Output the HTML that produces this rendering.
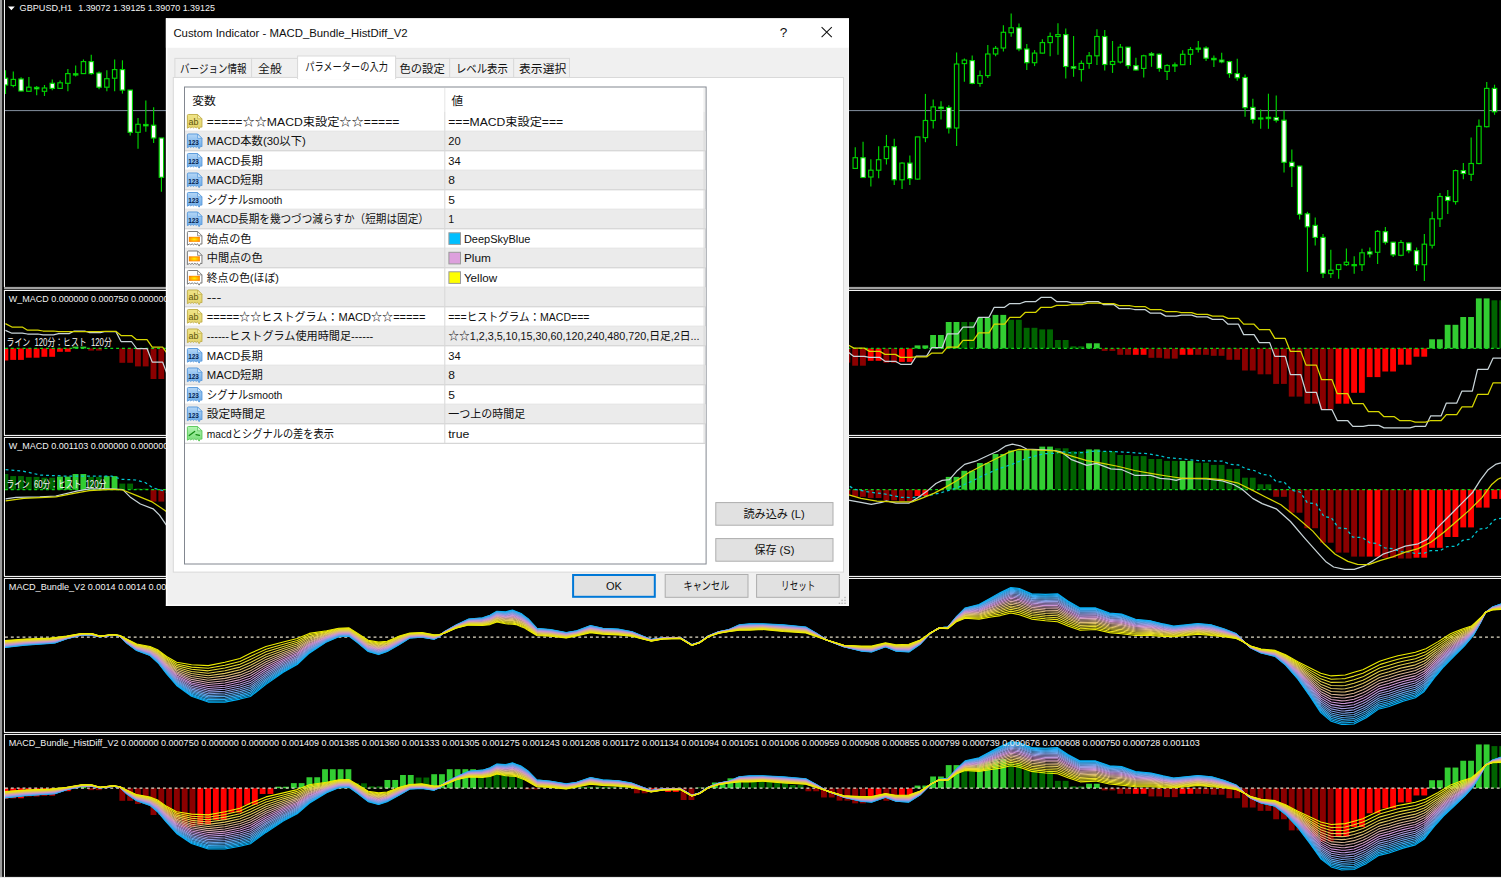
<!DOCTYPE html>
<html lang="ja"><head><meta charset="utf-8"><title>MACD_Bundle_HistDiff_V2</title>
<style>
html,body{margin:0;padding:0;background:#000;overflow:hidden}
body{width:1501px;height:878px}
svg{display:block;position:absolute;left:0;top:0}
svg text{font-family:"Liberation Sans","Noto Sans CJK JP",sans-serif}
</style></head><body>
<svg width="1501" height="878" viewBox="0 0 1501 878">
<defs>
<clipPath id="c1"><rect x="5" y="0" width="1496" height="286.9"/></clipPath>
<clipPath id="c2"><rect x="5" y="291" width="1496" height="143.9"/></clipPath>
<clipPath id="c3"><rect x="5" y="438" width="1496" height="137.9"/></clipPath>
<clipPath id="c4"><rect x="5" y="579" width="1496" height="152.9"/></clipPath>
<clipPath id="c5"><rect x="5" y="735" width="1496" height="141.9"/></clipPath>
<linearGradient id="gab" x1="0" y1="0" x2="0" y2="1"><stop offset="0" stop-color="#efe488"/><stop offset="1" stop-color="#e4d36a"/></linearGradient>
<linearGradient id="gn" x1="0" y1="0" x2="0" y2="1"><stop offset="0" stop-color="#b4d6f6"/><stop offset="1" stop-color="#69a9e8"/></linearGradient>
<linearGradient id="gb" x1="0" y1="0" x2="0" y2="1"><stop offset="0" stop-color="#b4f5b4"/><stop offset="1" stop-color="#74dc74"/></linearGradient>
<radialGradient id="gc" cx="0.5" cy="0.5" r="0.6"><stop offset="0" stop-color="#fff200"/><stop offset="0.55" stop-color="#ffb000"/><stop offset="1" stop-color="#ff7a00"/></radialGradient>
</defs>
<g id="chart">
<rect x="0" y="0" width="1501" height="878" fill="#000"/>
<rect x="0" y="0" width="2.2" height="878" fill="#9c9c9c"/>
<rect x="3.9" y="0" width="1.1" height="287" fill="#f2f2f2"/>
<rect x="3.9" y="290" width="1.1" height="145.5" fill="#f2f2f2"/>
<rect x="3.9" y="437" width="1.1" height="139.5" fill="#f2f2f2"/>
<rect x="3.9" y="578" width="1.1" height="154.5" fill="#f2f2f2"/>
<rect x="3.9" y="734" width="1.1" height="144" fill="#f2f2f2"/>
<rect x="4" y="286.9" width="1497" height="2.3" fill="#a0a0a0"/>
<rect x="4" y="289.9" width="1497" height="1.1" fill="#f2f2f2"/>
<rect x="4" y="434.9" width="1497" height="1.1" fill="#f2f2f2"/>
<rect x="4" y="436.9" width="1497" height="1.1" fill="#f2f2f2"/>
<rect x="4" y="575.9" width="1497" height="1.1" fill="#f2f2f2"/>
<rect x="4" y="577.9" width="1497" height="1.1" fill="#f2f2f2"/>
<rect x="4" y="731.9" width="1497" height="1.1" fill="#f2f2f2"/>
<rect x="4" y="733.9" width="1497" height="1.1" fill="#f2f2f2"/>
<rect x="0" y="876.9" width="1501" height="1.1" fill="#e8e8e8"/>
<rect x="5" y="110" width="1496" height="1.1" fill="#778290"/>
<g stroke="#00d400" stroke-width="1.15" fill="none" clip-path="url(#c1)">
<path d="M5.5,70.2 V94"/>
<rect x="3.3" y="78.2" width="4.4" height="6.8" fill="#fff"/>
<path d="M13.3,71.4 V87.2"/>
<rect x="11.1" y="79.4" width="4.4" height="6.1" fill="#000"/>
<path d="M21.09,77.3 V91.3"/>
<rect x="18.89" y="79" width="4.4" height="12" fill="#fff"/>
<path d="M28.89,77 V91.3"/>
<rect x="26.69" y="87.2" width="4.4" height="4.1" fill="#000"/>
<path d="M36.68,85.9 V95.3"/>
<rect x="34.48" y="87.4" width="4.4" height="1.4" fill="#fff"/>
<path d="M44.48,85 V96"/>
<rect x="42.28" y="88" width="4.4" height="3.3" fill="#000"/>
<path d="M52.28,79.4 V90.2"/>
<rect x="50.08" y="83.3" width="4.4" height="5.1" fill="#fff"/>
<path d="M60.07,80.4 V89"/>
<rect x="57.87" y="82.8" width="4.4" height="5.6" fill="#000"/>
<path d="M67.87,69.1 V91.3"/>
<rect x="65.67" y="73.6" width="4.4" height="9.7" fill="#000"/>
<path d="M75.66,65.4 V76.5"/>
<rect x="73.46" y="73.8" width="4.4" height="1.2" fill="#fff"/>
<path d="M83.46,59.4 V74"/>
<rect x="81.26" y="61.6" width="4.4" height="12" fill="#000"/>
<path d="M91.26,54.8 V74.8"/>
<rect x="89.06" y="61.6" width="4.4" height="12" fill="#fff"/>
<path d="M99.05,71.4 V89.3"/>
<rect x="96.85" y="73" width="4.4" height="14.2" fill="#fff"/>
<path d="M106.85,70.2 V91.3"/>
<rect x="104.65" y="78.7" width="4.4" height="8.5" fill="#000"/>
<path d="M114.64,59.4 V91.3"/>
<rect x="112.44" y="69.6" width="4.4" height="8.6" fill="#000"/>
<path d="M122.44,60.3 V93.6"/>
<rect x="120.24" y="69.6" width="4.4" height="20.5" fill="#fff"/>
<path d="M130.24,90.1 V135.4"/>
<rect x="128.04" y="90.1" width="4.4" height="42.2" fill="#fff"/>
<path d="M138.03,118 V148.8"/>
<rect x="135.83" y="124.3" width="4.4" height="8" fill="#000"/>
<path d="M145.83,100.4 V131.7"/>
<rect x="143.63" y="124.5" width="4.4" height="1.3" fill="#fff"/>
<path d="M153.62,107.2 V143.1"/>
<rect x="151.42" y="125.2" width="4.4" height="12.8" fill="#fff"/>
<path d="M161.42,138 V191.8"/>
<rect x="159.22" y="138" width="4.4" height="39.3" fill="#fff"/>
<path d="M855.26,147.2 V168.4"/>
<rect x="853.06" y="157.7" width="4.4" height="10.7" fill="#000"/>
<path d="M863.06,141.7 V177.5"/>
<rect x="860.86" y="157.7" width="4.4" height="19.8" fill="#fff"/>
<path d="M870.86,159.3 V186.6"/>
<rect x="868.66" y="170.2" width="4.4" height="6.8" fill="#000"/>
<path d="M878.65,146.3 V178.2"/>
<rect x="876.45" y="159.7" width="4.4" height="10.5" fill="#000"/>
<path d="M886.45,134.9 V164.5"/>
<rect x="884.25" y="146.7" width="4.4" height="11.9" fill="#000"/>
<path d="M894.24,138.8 V185"/>
<rect x="892.04" y="146.7" width="4.4" height="33.1" fill="#fff"/>
<path d="M902.04,162.2 V188.9"/>
<rect x="899.84" y="163.1" width="4.4" height="16.7" fill="#000"/>
<path d="M909.84,155.4 V185"/>
<rect x="907.64" y="163.1" width="4.4" height="15.5" fill="#fff"/>
<path d="M917.63,136.9 V179.8"/>
<rect x="915.43" y="136.9" width="4.4" height="42.2" fill="#000"/>
<path d="M925.43,93.9 V142.2"/>
<rect x="923.23" y="120.5" width="4.4" height="17.1" fill="#000"/>
<path d="M933.22,99.6 V128.5"/>
<rect x="931.02" y="106.9" width="4.4" height="13.6" fill="#000"/>
<path d="M941.02,101.2 V119.4"/>
<rect x="938.82" y="107.1" width="4.4" height="1.4" fill="#fff"/>
<path d="M948.82,105.3 V133.5"/>
<rect x="946.62" y="107.5" width="4.4" height="20.5" fill="#fff"/>
<path d="M956.61,52.6 V146"/>
<rect x="954.41" y="64" width="4.4" height="64" fill="#000"/>
<path d="M964.41,58.5 V81.8"/>
<rect x="962.21" y="60.1" width="4.4" height="3.5" fill="#000"/>
<path d="M972.2,55.6 V84.3"/>
<rect x="970" y="60.6" width="4.4" height="22.8" fill="#fff"/>
<path d="M980,70.4 V86.8"/>
<rect x="977.8" y="75.6" width="4.4" height="7.8" fill="#000"/>
<path d="M987.8,44.9 V77.9"/>
<rect x="985.6" y="54" width="4.4" height="21.6" fill="#000"/>
<path d="M995.59,46 V56.3"/>
<rect x="993.39" y="48.3" width="4.4" height="5.7" fill="#000"/>
<path d="M1003.39,25.3 V51.5"/>
<rect x="1001.19" y="32.3" width="4.4" height="15.7" fill="#000"/>
<path d="M1011.18,13.5 V36.7"/>
<rect x="1008.98" y="27.8" width="4.4" height="4.9" fill="#000"/>
<path d="M1018.98,23.5 V51.3"/>
<rect x="1016.78" y="27.8" width="4.4" height="21.2" fill="#fff"/>
<path d="M1026.78,44 V70"/>
<rect x="1024.58" y="49" width="4.4" height="13.7" fill="#fff"/>
<path d="M1034.57,50.1 V66.1"/>
<rect x="1032.37" y="53.1" width="4.4" height="9.6" fill="#000"/>
<path d="M1042.37,39.2 V53.6"/>
<rect x="1040.17" y="42.6" width="4.4" height="10.5" fill="#000"/>
<path d="M1050.16,32.4 V56.3"/>
<rect x="1047.96" y="36.5" width="4.4" height="6.1" fill="#000"/>
<path d="M1057.96,23.2 V54.7"/>
<rect x="1055.76" y="34.6" width="4.4" height="1.9" fill="#000"/>
<path d="M1065.76,28.5 V78.6"/>
<rect x="1063.56" y="34.6" width="4.4" height="31.9" fill="#fff"/>
<path d="M1073.55,36 V76.8"/>
<rect x="1071.35" y="66.7" width="4.4" height="1.5" fill="#fff"/>
<path d="M1081.35,60.4 V81.6"/>
<rect x="1079.15" y="63.4" width="4.4" height="6.1" fill="#000"/>
<path d="M1089.14,52 V68.8"/>
<rect x="1086.94" y="55.8" width="4.4" height="7.6" fill="#000"/>
<path d="M1096.94,29.2 V65"/>
<rect x="1094.74" y="36.5" width="4.4" height="19.3" fill="#000"/>
<path d="M1104.74,30.1 V70.6"/>
<rect x="1102.54" y="36.5" width="4.4" height="28" fill="#fff"/>
<path d="M1112.53,41 V72.9"/>
<rect x="1110.33" y="61.5" width="4.4" height="3" fill="#000"/>
<path d="M1120.33,44 V63.4"/>
<rect x="1118.13" y="47.2" width="4.4" height="14.8" fill="#000"/>
<path d="M1128.12,47.2 V68.8"/>
<rect x="1125.92" y="47.2" width="4.4" height="18.4" fill="#fff"/>
<path d="M1135.92,57.7 V70.6"/>
<rect x="1133.72" y="65.6" width="4.4" height="4.4" fill="#fff"/>
<path d="M1143.72,54.7 V77.5"/>
<rect x="1141.52" y="55.8" width="4.4" height="12.6" fill="#000"/>
<path d="M1151.51,52 V66.8"/>
<rect x="1149.31" y="53.8" width="4.4" height="1.4" fill="#fff"/>
<path d="M1159.31,53.6 V71.8"/>
<rect x="1157.11" y="54.2" width="4.4" height="14.2" fill="#fff"/>
<path d="M1167.1,64.3 V79.9"/>
<rect x="1164.9" y="65.5" width="4.4" height="5.9" fill="#000"/>
<path d="M1174.9,62.5 V71.9"/>
<rect x="1172.7" y="64.9" width="4.4" height="1.1" fill="#fff"/>
<path d="M1182.7,50.2 V65"/>
<rect x="1180.5" y="54.3" width="4.4" height="10.4" fill="#000"/>
<path d="M1190.49,47.1 V65"/>
<rect x="1188.29" y="49.6" width="4.4" height="4.7" fill="#000"/>
<path d="M1198.29,41.1 V52.6"/>
<rect x="1196.09" y="48.1" width="4.4" height="1.1" fill="#fff"/>
<path d="M1206.08,46.2 V61.1"/>
<rect x="1203.88" y="48" width="4.4" height="10.2" fill="#fff"/>
<path d="M1213.88,55.6 V67.1"/>
<rect x="1211.68" y="58.4" width="4.4" height="1.3" fill="#fff"/>
<path d="M1221.68,52.7 V63.3"/>
<rect x="1219.48" y="60.1" width="4.4" height="1.8" fill="#fff"/>
<path d="M1229.47,60.8 V77.8"/>
<rect x="1227.27" y="61.6" width="4.4" height="12" fill="#fff"/>
<path d="M1237.27,58.7 V80.7"/>
<rect x="1235.07" y="73.6" width="4.4" height="4.2" fill="#fff"/>
<path d="M1245.06,74.4 V116.8"/>
<rect x="1242.86" y="77.5" width="4.4" height="30.2" fill="#fff"/>
<path d="M1252.86,98.7 V123.6"/>
<rect x="1250.66" y="107.4" width="4.4" height="12" fill="#fff"/>
<path d="M1260.66,109.4 V128.8"/>
<rect x="1258.46" y="118" width="4.4" height="1" fill="#fff"/>
<path d="M1268.45,93.7 V128.8"/>
<rect x="1266.25" y="117.3" width="4.4" height="1.3" fill="#fff"/>
<path d="M1276.25,95.4 V122.6"/>
<rect x="1274.05" y="117.5" width="4.4" height="2.7" fill="#fff"/>
<path d="M1284.04,110.8 V172.4"/>
<rect x="1281.84" y="120.2" width="4.4" height="42.1" fill="#fff"/>
<path d="M1291.84,149.4 V187"/>
<rect x="1289.64" y="162.3" width="4.4" height="4.3" fill="#fff"/>
<path d="M1299.64,166.1 V219.4"/>
<rect x="1297.44" y="166.1" width="4.4" height="48.2" fill="#fff"/>
<path d="M1307.43,211.8 V271.9"/>
<rect x="1305.23" y="213.8" width="4.4" height="13" fill="#fff"/>
<path d="M1315.23,217.4 V245.6"/>
<rect x="1313.03" y="225.4" width="4.4" height="12" fill="#fff"/>
<path d="M1323.02,234 V277.9"/>
<rect x="1320.82" y="237.4" width="4.4" height="35.9" fill="#fff"/>
<path d="M1330.82,249.7 V277.9"/>
<rect x="1328.62" y="270.2" width="4.4" height="3.4" fill="#000"/>
<path d="M1338.62,264.4 V278.7"/>
<rect x="1336.42" y="264.7" width="4.4" height="4.8" fill="#000"/>
<path d="M1346.41,248.5 V266.1"/>
<rect x="1344.21" y="262.2" width="4.4" height="2.5" fill="#000"/>
<path d="M1354.21,256.2 V273.8"/>
<rect x="1352.01" y="264.6" width="4.4" height="1.1" fill="#fff"/>
<path d="M1362,248.8 V271"/>
<rect x="1359.8" y="252.8" width="4.4" height="11.9" fill="#000"/>
<path d="M1369.8,247.6 V257.4"/>
<rect x="1367.6" y="251.9" width="4.4" height="2.1" fill="#fff"/>
<path d="M1377.6,230 V263.9"/>
<rect x="1375.4" y="231.4" width="4.4" height="20.9" fill="#000"/>
<path d="M1385.39,227.1 V244.6"/>
<rect x="1383.19" y="231.7" width="4.4" height="10.5" fill="#fff"/>
<path d="M1393.19,242.2 V257"/>
<rect x="1390.99" y="242.2" width="4.4" height="12.6" fill="#fff"/>
<path d="M1400.98,240 V256.2"/>
<rect x="1398.78" y="242.5" width="4.4" height="12.8" fill="#000"/>
<path d="M1408.78,242.5 V253.3"/>
<rect x="1406.58" y="243" width="4.4" height="7.7" fill="#fff"/>
<path d="M1416.58,247.6 V271"/>
<rect x="1414.38" y="250.7" width="4.4" height="14" fill="#fff"/>
<path d="M1424.37,234 V281"/>
<rect x="1422.17" y="244.2" width="4.4" height="20.5" fill="#000"/>
<path d="M1432.17,211.8 V248.6"/>
<rect x="1429.97" y="218.8" width="4.4" height="26.4" fill="#000"/>
<path d="M1439.96,192.9 V226.9"/>
<rect x="1437.76" y="196.5" width="4.4" height="22.3" fill="#000"/>
<path d="M1447.76,190.1 V213.9"/>
<rect x="1445.56" y="196.6" width="4.4" height="3.9" fill="#fff"/>
<path d="M1455.56,169.6 V204.6"/>
<rect x="1453.36" y="170.6" width="4.4" height="31" fill="#000"/>
<path d="M1463.35,163.1 V179.3"/>
<rect x="1461.15" y="170.6" width="4.4" height="2.9" fill="#fff"/>
<path d="M1471.15,137.5 V181"/>
<rect x="1468.95" y="163.5" width="4.4" height="10.8" fill="#000"/>
<path d="M1478.94,119.4 V164.2"/>
<rect x="1476.74" y="126.3" width="4.4" height="37.2" fill="#000"/>
<path d="M1486.74,81.9 V127.4"/>
<rect x="1484.54" y="88.4" width="4.4" height="38.3" fill="#000"/>
<path d="M1494.54,84.7 V114.8"/>
<rect x="1492.34" y="88.4" width="4.4" height="23.4" fill="#fff"/>
</g>
<g clip-path="url(#c2)">
<rect x="5" y="348.4" width="3.3" height="12.1" fill="#ff0000"/>
<rect x="10.25" y="348.4" width="5.85" height="11.5" fill="#ff0000"/>
<rect x="18.04" y="348.4" width="5.85" height="11.5" fill="#ff0000"/>
<rect x="25.84" y="348.4" width="5.85" height="9.3" fill="#ff0000"/>
<rect x="33.63" y="348.4" width="5.85" height="9.3" fill="#ff0000"/>
<rect x="41.43" y="348.4" width="5.85" height="8.4" fill="#ff0000"/>
<rect x="49.23" y="348.4" width="5.85" height="8.4" fill="#ff0000"/>
<rect x="57.02" y="348.4" width="5.85" height="3.4" fill="#ff0000"/>
<rect x="64.82" y="348.4" width="5.85" height="3.4" fill="#ff0000"/>
<rect x="72.61" y="346.6" width="5.85" height="1.8" fill="#32cd32"/>
<rect x="80.41" y="346.6" width="5.85" height="1.8" fill="#32cd32"/>
<rect x="88.21" y="348.4" width="5.85" height="2.2" fill="#8b0000"/>
<rect x="96" y="348.4" width="5.85" height="2.2" fill="#8b0000"/>
<rect x="119.39" y="348.4" width="5.85" height="14.4" fill="#8b0000"/>
<rect x="127.19" y="348.4" width="5.85" height="14.4" fill="#8b0000"/>
<rect x="134.98" y="348.4" width="5.85" height="18" fill="#8b0000"/>
<rect x="142.78" y="348.4" width="5.85" height="18" fill="#8b0000"/>
<rect x="150.57" y="348.4" width="5.85" height="30.6" fill="#8b0000"/>
<rect x="158.37" y="348.4" width="5.85" height="30.6" fill="#8b0000"/>
<rect x="166.17" y="348.4" width="5.85" height="37.5" fill="#8b0000"/>
<rect x="173.96" y="348.4" width="5.85" height="37.5" fill="#8b0000"/>
<rect x="836.62" y="348.4" width="5.85" height="14.2" fill="#8b0000"/>
<rect x="844.42" y="348.4" width="5.85" height="14.2" fill="#8b0000"/>
<rect x="852.21" y="348.4" width="5.85" height="17.3" fill="#8b0000"/>
<rect x="860.01" y="348.4" width="5.85" height="17.3" fill="#8b0000"/>
<rect x="867.81" y="348.4" width="5.85" height="12.4" fill="#ff0000"/>
<rect x="875.6" y="348.4" width="5.85" height="12.4" fill="#ff0000"/>
<rect x="883.4" y="348.4" width="5.85" height="14.4" fill="#8b0000"/>
<rect x="891.19" y="348.4" width="5.85" height="14.4" fill="#8b0000"/>
<rect x="898.99" y="348.4" width="5.85" height="13.5" fill="#ff0000"/>
<rect x="906.79" y="348.4" width="5.85" height="13.5" fill="#ff0000"/>
<rect x="914.58" y="345.4" width="5.85" height="3" fill="#32cd32"/>
<rect x="922.38" y="345.4" width="5.85" height="3" fill="#32cd32"/>
<rect x="930.17" y="335" width="5.85" height="13.4" fill="#32cd32"/>
<rect x="937.97" y="335" width="5.85" height="13.4" fill="#32cd32"/>
<rect x="945.77" y="322" width="5.85" height="26.4" fill="#32cd32"/>
<rect x="953.56" y="322" width="5.85" height="26.4" fill="#32cd32"/>
<rect x="961.36" y="322" width="5.85" height="26.4" fill="#006400"/>
<rect x="969.15" y="322" width="5.85" height="26.4" fill="#006400"/>
<rect x="976.95" y="317.8" width="5.85" height="30.6" fill="#32cd32"/>
<rect x="984.75" y="317.8" width="5.85" height="30.6" fill="#32cd32"/>
<rect x="992.54" y="314.9" width="5.85" height="33.5" fill="#32cd32"/>
<rect x="1000.34" y="314.9" width="5.85" height="33.5" fill="#32cd32"/>
<rect x="1008.13" y="319.8" width="5.85" height="28.6" fill="#006400"/>
<rect x="1015.93" y="319.8" width="5.85" height="28.6" fill="#006400"/>
<rect x="1023.73" y="327.8" width="5.85" height="20.6" fill="#006400"/>
<rect x="1031.52" y="327.8" width="5.85" height="20.6" fill="#006400"/>
<rect x="1039.32" y="329.4" width="5.85" height="19" fill="#006400"/>
<rect x="1047.11" y="329.4" width="5.85" height="19" fill="#006400"/>
<rect x="1054.91" y="340" width="5.85" height="8.4" fill="#006400"/>
<rect x="1062.71" y="340" width="5.85" height="8.4" fill="#006400"/>
<rect x="1070.5" y="346.3" width="5.85" height="2.1" fill="#006400"/>
<rect x="1078.3" y="346.3" width="5.85" height="2.1" fill="#006400"/>
<rect x="1086.09" y="343.3" width="5.85" height="5.1" fill="#32cd32"/>
<rect x="1093.89" y="343.3" width="5.85" height="5.1" fill="#32cd32"/>
<rect x="1101.69" y="348.4" width="5.85" height="2.5" fill="#8b0000"/>
<rect x="1109.48" y="348.4" width="5.85" height="2.5" fill="#8b0000"/>
<rect x="1117.28" y="348.4" width="5.85" height="6.4" fill="#8b0000"/>
<rect x="1125.07" y="348.4" width="5.85" height="6.4" fill="#8b0000"/>
<rect x="1132.87" y="348.4" width="5.85" height="6.4" fill="#ff0000"/>
<rect x="1140.67" y="348.4" width="5.85" height="6.4" fill="#ff0000"/>
<rect x="1148.46" y="348.4" width="5.85" height="9.4" fill="#8b0000"/>
<rect x="1156.26" y="348.4" width="5.85" height="9.4" fill="#8b0000"/>
<rect x="1164.05" y="348.4" width="5.85" height="10.2" fill="#8b0000"/>
<rect x="1171.85" y="348.4" width="5.85" height="10.2" fill="#8b0000"/>
<rect x="1179.65" y="348.4" width="5.85" height="6.4" fill="#ff0000"/>
<rect x="1187.44" y="348.4" width="5.85" height="6.4" fill="#ff0000"/>
<rect x="1195.24" y="348.4" width="5.85" height="6.4" fill="#8b0000"/>
<rect x="1203.03" y="348.4" width="5.85" height="6.4" fill="#8b0000"/>
<rect x="1210.83" y="348.4" width="5.85" height="7.4" fill="#8b0000"/>
<rect x="1218.63" y="348.4" width="5.85" height="7.4" fill="#8b0000"/>
<rect x="1226.42" y="348.4" width="5.85" height="11.4" fill="#8b0000"/>
<rect x="1234.22" y="348.4" width="5.85" height="11.4" fill="#8b0000"/>
<rect x="1242.01" y="348.4" width="5.85" height="22.1" fill="#8b0000"/>
<rect x="1249.81" y="348.4" width="5.85" height="22.1" fill="#8b0000"/>
<rect x="1257.61" y="348.4" width="5.85" height="25.9" fill="#8b0000"/>
<rect x="1265.4" y="348.4" width="5.85" height="25.9" fill="#8b0000"/>
<rect x="1273.2" y="348.4" width="5.85" height="35.5" fill="#8b0000"/>
<rect x="1280.99" y="348.4" width="5.85" height="35.5" fill="#8b0000"/>
<rect x="1288.79" y="348.4" width="5.85" height="48.2" fill="#8b0000"/>
<rect x="1296.59" y="348.4" width="5.85" height="48.2" fill="#8b0000"/>
<rect x="1304.38" y="348.4" width="5.85" height="55.3" fill="#8b0000"/>
<rect x="1312.18" y="348.4" width="5.85" height="55.3" fill="#8b0000"/>
<rect x="1319.97" y="348.4" width="5.85" height="60.9" fill="#8b0000"/>
<rect x="1327.77" y="348.4" width="5.85" height="60.9" fill="#8b0000"/>
<rect x="1335.57" y="348.4" width="5.85" height="55.3" fill="#ff0000"/>
<rect x="1343.36" y="348.4" width="5.85" height="55.3" fill="#ff0000"/>
<rect x="1351.16" y="348.4" width="5.85" height="44.4" fill="#ff0000"/>
<rect x="1358.95" y="348.4" width="5.85" height="44.4" fill="#ff0000"/>
<rect x="1366.75" y="348.4" width="5.85" height="28.7" fill="#ff0000"/>
<rect x="1374.55" y="348.4" width="5.85" height="28.7" fill="#ff0000"/>
<rect x="1382.34" y="348.4" width="5.85" height="23.1" fill="#ff0000"/>
<rect x="1390.14" y="348.4" width="5.85" height="23.1" fill="#ff0000"/>
<rect x="1397.93" y="348.4" width="5.85" height="16.3" fill="#ff0000"/>
<rect x="1405.73" y="348.4" width="5.85" height="16.3" fill="#ff0000"/>
<rect x="1413.53" y="348.4" width="5.85" height="8.3" fill="#ff0000"/>
<rect x="1421.32" y="348.4" width="5.85" height="8.3" fill="#ff0000"/>
<rect x="1429.12" y="339.3" width="5.85" height="9.1" fill="#32cd32"/>
<rect x="1436.91" y="339.3" width="5.85" height="9.1" fill="#32cd32"/>
<rect x="1444.71" y="324.8" width="5.85" height="23.6" fill="#32cd32"/>
<rect x="1452.51" y="324.8" width="5.85" height="23.6" fill="#32cd32"/>
<rect x="1460.3" y="317" width="5.85" height="31.4" fill="#32cd32"/>
<rect x="1468.1" y="317" width="5.85" height="31.4" fill="#32cd32"/>
<rect x="1475.89" y="298.4" width="5.85" height="50" fill="#32cd32"/>
<rect x="1483.69" y="298.4" width="5.85" height="50" fill="#32cd32"/>
<rect x="1491.49" y="300.3" width="5.85" height="48.1" fill="#006400"/>
<rect x="1499.28" y="300.3" width="1.72" height="48.1" fill="#006400"/>
<path d="M5,348.4 H1501" stroke="#12d41a" stroke-width="1.2" stroke-dasharray="2.9 2.95" fill="none"/>
<polyline points="5.4,330.4 11.9,333.2 22.29,333.2 27.49,334 37.88,334 43.08,334.9 53.48,334.9 58.67,333.6 69.07,333.6 74.26,331 84.66,331 89.86,332.7 100.25,332.7 105.45,331.5 115.84,331.5 121.04,341.5 131.44,341.5 136.63,348.5 147.03,348.5 152.22,362.1 162.62,362.1 167.82,376 178.21,376" stroke="#c8d4d8" stroke-width="1.25" fill="none" stroke-linejoin="round"/>
<polyline points="5.4,323.6 11.9,327 22.29,327 27.49,330.2 37.88,330.2 43.08,331 53.48,331 58.67,331.7 69.07,331.7 74.26,331.5 83.36,331.5 91.16,331.5 100.25,331.5 105.45,331.3 115.84,331.3 121.04,335.5 131.44,335.5 136.63,339.7 147.03,339.7 152.22,347.1 162.62,347.1 167.82,354.5 178.21,354.5" stroke="#d6d600" stroke-width="1.25" fill="none" stroke-linejoin="round"/>
<polyline points="838.27,352.4 848.67,352.4 853.86,356.4 864.26,356.4 869.46,357.4 879.85,357.4 885.05,361.3 895.44,361.3 900.64,364.3 911.04,364.3 916.23,356.1 926.63,356.1 931.82,347.5 942.22,347.5 947.42,333.8 957.81,333.8 963.01,327.2 973.4,327.2 978.6,317.3 989,317.3 994.19,307.3 1004.59,307.3 1009.78,303.5 1020.18,303.5 1025.38,301.6 1035.77,301.6 1040.97,297.4 1051.36,297.4 1056.56,301.6 1066.96,301.6 1072.15,302.9 1082.55,302.9 1087.74,301.6 1098.14,301.6 1103.34,304.5 1113.73,304.5 1118.93,308.5 1129.32,308.5 1134.52,309.5 1144.92,309.5 1150.11,313.1 1160.51,313.1 1165.7,316.1 1176.1,316.1 1181.3,315.1 1191.69,315.1 1196.89,316.9 1207.28,316.9 1212.48,319.4 1222.88,319.4 1228.07,324.2 1238.47,324.2 1243.66,334.6 1254.06,334.6 1259.26,342.6 1269.65,342.6 1274.85,356.4 1285.24,356.4 1290.44,374.7 1300.84,374.7 1306.03,392.4 1316.43,392.4 1321.62,409.7 1332.02,409.7 1337.22,420.5 1347.61,420.5 1352.81,426.4 1363.2,426.4 1368.4,425.4 1378.8,425.4 1383.99,427.9 1393.09,427.9 1400.88,427.9 1409.98,427.9 1415.18,426.3 1425.57,426.3 1430.77,415.8 1441.16,415.8 1446.36,403.1 1456.76,403.1 1461.95,391.1 1472.35,391.1 1477.54,369.3 1487.94,369.3 1493.14,358 1503.53,358" stroke="#c8d4d8" stroke-width="1.25" fill="none" stroke-linejoin="round"/>
<polyline points="838.27,345.3 848.67,345.3 853.86,348.1 864.26,348.1 869.46,351.4 879.85,351.4 885.05,354.4 895.44,354.4 900.64,357.4 911.04,357.4 916.23,356.9 926.63,356.9 931.82,353.1 942.22,353.1 947.42,347 957.81,347 963.01,340.4 973.4,340.4 978.6,332.9 989,332.9 994.19,324.2 1004.59,324.2 1009.78,317.3 1020.18,317.3 1025.38,312.3 1035.77,312.3 1040.97,307.3 1051.36,307.3 1056.56,305.4 1066.96,305.4 1072.15,304.5 1082.55,304.5 1087.74,303.2 1098.14,303.2 1103.34,303.7 1113.73,303.7 1118.93,305.7 1129.32,305.7 1134.52,306.5 1144.92,306.5 1150.11,309.5 1160.51,309.5 1165.7,311.5 1176.1,311.5 1181.3,312.6 1191.69,312.6 1196.89,314.4 1207.28,314.4 1212.48,316.1 1222.88,316.1 1228.07,318.4 1238.47,318.4 1243.66,324.2 1254.06,324.2 1259.26,329.6 1269.65,329.6 1274.85,338.4 1285.24,338.4 1290.44,351.4 1300.84,351.4 1306.03,365.1 1316.43,365.1 1321.62,379.7 1332.02,379.7 1337.22,393.6 1347.61,393.6 1352.81,403.6 1363.2,403.6 1368.4,411.7 1378.8,411.7 1383.99,416.7 1394.39,416.7 1399.58,420.5 1409.98,420.5 1415.18,422.1 1425.57,422.1 1430.77,420.5 1441.16,420.5 1446.36,414.7 1456.76,414.7 1461.95,406.8 1472.35,406.8 1477.54,394.4 1487.94,394.4 1493.14,382.8 1503.53,382.8" stroke="#d6d600" stroke-width="1.25" fill="none" stroke-linejoin="round"/>
</g>
<g clip-path="url(#c3)">
<rect x="5" y="474" width="3.3" height="15.6" fill="#006400"/>
<rect x="10.25" y="476.1" width="5.85" height="13.5" fill="#006400"/>
<rect x="18.04" y="476.1" width="5.85" height="13.5" fill="#006400"/>
<rect x="25.84" y="476.9" width="5.85" height="12.7" fill="#006400"/>
<rect x="33.63" y="476.9" width="5.85" height="12.7" fill="#006400"/>
<rect x="41.43" y="477.7" width="5.85" height="11.9" fill="#006400"/>
<rect x="49.23" y="477.7" width="5.85" height="11.9" fill="#006400"/>
<rect x="57.02" y="476.6" width="5.85" height="13" fill="#32cd32"/>
<rect x="64.82" y="476.6" width="5.85" height="13" fill="#32cd32"/>
<rect x="72.61" y="474" width="5.85" height="15.6" fill="#32cd32"/>
<rect x="80.41" y="474" width="5.85" height="15.6" fill="#32cd32"/>
<rect x="88.21" y="476.9" width="5.85" height="12.7" fill="#006400"/>
<rect x="96" y="476.9" width="5.85" height="12.7" fill="#006400"/>
<rect x="103.8" y="476.1" width="5.85" height="13.5" fill="#32cd32"/>
<rect x="111.59" y="476.1" width="5.85" height="13.5" fill="#32cd32"/>
<rect x="119.39" y="483.6" width="5.85" height="6" fill="#006400"/>
<rect x="127.19" y="483.6" width="5.85" height="6" fill="#006400"/>
<rect x="134.98" y="488.6" width="5.85" height="1" fill="#006400"/>
<rect x="142.78" y="488.6" width="5.85" height="1" fill="#006400"/>
<rect x="150.57" y="489.6" width="5.85" height="12" fill="#8b0000"/>
<rect x="158.37" y="489.6" width="5.85" height="12" fill="#8b0000"/>
<rect x="166.17" y="489.6" width="5.85" height="20.4" fill="#8b0000"/>
<rect x="173.96" y="489.6" width="5.85" height="20.4" fill="#8b0000"/>
<rect x="836.62" y="489.6" width="5.85" height="4.8" fill="#8b0000"/>
<rect x="844.42" y="489.6" width="5.85" height="4.8" fill="#8b0000"/>
<rect x="852.21" y="489.6" width="5.85" height="7.2" fill="#8b0000"/>
<rect x="860.01" y="489.6" width="5.85" height="7.2" fill="#8b0000"/>
<rect x="867.81" y="489.6" width="5.85" height="8.4" fill="#8b0000"/>
<rect x="875.6" y="489.6" width="5.85" height="8.4" fill="#8b0000"/>
<rect x="883.4" y="489.6" width="5.85" height="10.8" fill="#8b0000"/>
<rect x="891.19" y="489.6" width="5.85" height="10.8" fill="#8b0000"/>
<rect x="898.99" y="489.6" width="5.85" height="11.6" fill="#8b0000"/>
<rect x="906.79" y="489.6" width="5.85" height="11.6" fill="#8b0000"/>
<rect x="914.58" y="489.6" width="5.85" height="6.4" fill="#ff0000"/>
<rect x="922.38" y="489.6" width="5.85" height="6.4" fill="#ff0000"/>
<rect x="945.77" y="476.9" width="5.85" height="12.7" fill="#32cd32"/>
<rect x="953.56" y="476.9" width="5.85" height="12.7" fill="#32cd32"/>
<rect x="961.36" y="470.8" width="5.85" height="18.8" fill="#32cd32"/>
<rect x="969.15" y="470.8" width="5.85" height="18.8" fill="#32cd32"/>
<rect x="976.95" y="463" width="5.85" height="26.6" fill="#32cd32"/>
<rect x="984.75" y="463" width="5.85" height="26.6" fill="#32cd32"/>
<rect x="992.54" y="454" width="5.85" height="35.6" fill="#32cd32"/>
<rect x="1000.34" y="454" width="5.85" height="35.6" fill="#32cd32"/>
<rect x="1008.13" y="450.5" width="5.85" height="39.1" fill="#32cd32"/>
<rect x="1015.93" y="450.5" width="5.85" height="39.1" fill="#32cd32"/>
<rect x="1023.73" y="449.8" width="5.85" height="39.8" fill="#32cd32"/>
<rect x="1031.52" y="449.8" width="5.85" height="39.8" fill="#32cd32"/>
<rect x="1039.32" y="446.6" width="5.85" height="43" fill="#32cd32"/>
<rect x="1047.11" y="446.6" width="5.85" height="43" fill="#32cd32"/>
<rect x="1054.91" y="448.3" width="5.85" height="41.3" fill="#006400"/>
<rect x="1062.71" y="448.3" width="5.85" height="41.3" fill="#006400"/>
<rect x="1070.5" y="451.3" width="5.85" height="38.3" fill="#006400"/>
<rect x="1078.3" y="451.3" width="5.85" height="38.3" fill="#006400"/>
<rect x="1086.09" y="449.4" width="5.85" height="40.2" fill="#32cd32"/>
<rect x="1093.89" y="449.4" width="5.85" height="40.2" fill="#32cd32"/>
<rect x="1101.69" y="451.3" width="5.85" height="38.3" fill="#006400"/>
<rect x="1109.48" y="451.3" width="5.85" height="38.3" fill="#006400"/>
<rect x="1117.28" y="455" width="5.85" height="34.6" fill="#006400"/>
<rect x="1125.07" y="455" width="5.85" height="34.6" fill="#006400"/>
<rect x="1132.87" y="456.1" width="5.85" height="33.5" fill="#006400"/>
<rect x="1140.67" y="456.1" width="5.85" height="33.5" fill="#006400"/>
<rect x="1148.46" y="459" width="5.85" height="30.6" fill="#006400"/>
<rect x="1156.26" y="459" width="5.85" height="30.6" fill="#006400"/>
<rect x="1164.05" y="460.9" width="5.85" height="28.7" fill="#006400"/>
<rect x="1171.85" y="460.9" width="5.85" height="28.7" fill="#006400"/>
<rect x="1179.65" y="460.9" width="5.85" height="28.7" fill="#32cd32"/>
<rect x="1187.44" y="460.9" width="5.85" height="28.7" fill="#32cd32"/>
<rect x="1195.24" y="462.8" width="5.85" height="26.8" fill="#006400"/>
<rect x="1203.03" y="462.8" width="5.85" height="26.8" fill="#006400"/>
<rect x="1210.83" y="464.9" width="5.85" height="24.7" fill="#006400"/>
<rect x="1218.63" y="464.9" width="5.85" height="24.7" fill="#006400"/>
<rect x="1226.42" y="468.9" width="5.85" height="20.7" fill="#006400"/>
<rect x="1234.22" y="468.9" width="5.85" height="20.7" fill="#006400"/>
<rect x="1242.01" y="477.7" width="5.85" height="11.9" fill="#006400"/>
<rect x="1249.81" y="477.7" width="5.85" height="11.9" fill="#006400"/>
<rect x="1257.61" y="484.3" width="5.85" height="5.3" fill="#006400"/>
<rect x="1265.4" y="484.3" width="5.85" height="5.3" fill="#006400"/>
<rect x="1273.2" y="489.6" width="5.85" height="7.2" fill="#8b0000"/>
<rect x="1280.99" y="489.6" width="5.85" height="7.2" fill="#8b0000"/>
<rect x="1288.79" y="489.6" width="5.85" height="23.1" fill="#8b0000"/>
<rect x="1296.59" y="489.6" width="5.85" height="23.1" fill="#8b0000"/>
<rect x="1304.38" y="489.6" width="5.85" height="38.6" fill="#8b0000"/>
<rect x="1312.18" y="489.6" width="5.85" height="38.6" fill="#8b0000"/>
<rect x="1319.97" y="489.6" width="5.85" height="53.1" fill="#8b0000"/>
<rect x="1327.77" y="489.6" width="5.85" height="53.1" fill="#8b0000"/>
<rect x="1335.57" y="489.6" width="5.85" height="63" fill="#8b0000"/>
<rect x="1343.36" y="489.6" width="5.85" height="63" fill="#8b0000"/>
<rect x="1351.16" y="489.6" width="5.85" height="67" fill="#8b0000"/>
<rect x="1358.95" y="489.6" width="5.85" height="67" fill="#8b0000"/>
<rect x="1366.75" y="489.6" width="5.85" height="67" fill="#ff0000"/>
<rect x="1374.55" y="489.6" width="5.85" height="67" fill="#ff0000"/>
<rect x="1382.34" y="489.6" width="5.85" height="68.3" fill="#8b0000"/>
<rect x="1390.14" y="489.6" width="5.85" height="68.3" fill="#8b0000"/>
<rect x="1397.93" y="489.6" width="5.85" height="68.9" fill="#8b0000"/>
<rect x="1405.73" y="489.6" width="5.85" height="68.9" fill="#8b0000"/>
<rect x="1413.53" y="489.6" width="5.85" height="68.1" fill="#ff0000"/>
<rect x="1421.32" y="489.6" width="5.85" height="68.1" fill="#ff0000"/>
<rect x="1429.12" y="489.6" width="5.85" height="58.2" fill="#ff0000"/>
<rect x="1436.91" y="489.6" width="5.85" height="58.2" fill="#ff0000"/>
<rect x="1444.71" y="489.6" width="5.85" height="47.4" fill="#ff0000"/>
<rect x="1452.51" y="489.6" width="5.85" height="47.4" fill="#ff0000"/>
<rect x="1460.3" y="489.6" width="5.85" height="37.8" fill="#ff0000"/>
<rect x="1468.1" y="489.6" width="5.85" height="37.8" fill="#ff0000"/>
<rect x="1475.89" y="489.6" width="5.85" height="18" fill="#ff0000"/>
<rect x="1483.69" y="489.6" width="5.85" height="18" fill="#ff0000"/>
<rect x="1491.49" y="489.6" width="5.85" height="9.3" fill="#ff0000"/>
<rect x="1499.28" y="489.6" width="1.72" height="9.3" fill="#ff0000"/>
<path d="M5,489.6 H1501" stroke="#12d41a" stroke-width="1.2" stroke-dasharray="2.9 2.95" fill="none"/>
<polyline points="5.6,469.7 23.9,471.3 39.9,475 63.8,476 87.7,476 111.6,476 121.2,479.3 135.6,480 145.1,482.5 153.1,488 165,491.2 175,498" stroke="#00c8d2" stroke-width="1.25" fill="none" stroke-linejoin="round" stroke-dasharray="2.9 2.95"/>
<polyline points="840,480 849.8,486.4 854.6,489.3 868.9,492 884.9,494 900.8,497.3 912,497.6 924.7,496.3 940.7,492.8 956.6,488 969.3,482.4 982.1,476 996.4,469.7 1012.4,464.1 1028.3,457.7 1044.3,453.7 1055,453.2 1061.4,451.7 1070.9,452.9 1083.7,452.6 1094.9,451 1115.6,451.7 1131.5,452.6 1147.5,453.7 1160.2,455.8 1166.6,457.7 1182.5,459 1198.5,460.6 1222.4,461.2 1230.4,464.4 1238.3,464.9 1246.3,468.9 1254.3,470.5 1262.2,474.5 1269.8,475.3 1276.2,481.7 1284.1,482 1292.1,490.4 1300.1,492 1307.3,502.7 1316,503.7 1324,516.7 1331.2,517.5 1338.4,527.9 1346.3,528.7 1352.7,537.1 1362.3,537.5 1370.2,543 1376.6,543.5 1384.6,547.8 1392.6,548.6 1400.5,551.8 1408.5,551.8 1414.9,553.4 1424.5,553.1 1430.8,550.5 1440.4,550.5 1446.8,546.7 1456.4,546.2 1462.7,540.3 1470.7,539.1 1478.7,529.2 1486.7,528.2 1494.6,519.6 1501,518.3" stroke="#00c8d2" stroke-width="1.25" fill="none" stroke-linejoin="round" stroke-dasharray="2.9 2.95"/>
<polyline points="5.6,498.9 15.9,497.3 39.9,496.8 55.8,496 76.6,491.2 89.3,488.8 111.6,488.8 122.8,489.6 130.8,497.6 140.4,504 153.1,508.8 159.5,515.1 165,523.1 172,533" stroke="#c8d4d8" stroke-width="1.25" fill="none" stroke-linejoin="round"/>
<polyline points="840,499 849.8,500.4 860.9,502.4 871.3,504.3 881.7,502.4 886.4,500.8 896,503.2 908.8,503.2 916.7,498.4 927.9,490.4 935.9,483.5 942.2,480.4 949.4,479.7 956.6,471.3 964.6,464.4 975.7,461.2 988.5,455.3 998,451 1006,445.8 1012.4,444.2 1020.4,445.8 1026.7,449 1044.3,449.8 1055,450.5 1061.4,452.1 1070.9,459.3 1086.9,465.4 1096.4,463.3 1110.8,468.9 1122,469.7 1134.7,475.3 1150.7,475.3 1160.2,478.4 1169.8,479.2 1176.2,480.4 1182.5,478.4 1206.4,478.8 1222.4,480.8 1233.5,484.5 1241.5,488.8 1252.7,498.4 1262.2,503.6 1276.2,508.8 1290.5,521.5 1304.9,538.3 1317.6,552.6 1325.6,561.4 1333.6,567 1344.7,569.4 1354.3,569.4 1363.9,566.2 1373.4,560.6 1383,554.2 1392.6,551 1405.3,546.2 1418.1,543.8 1427.7,539.1 1437.2,527.9 1448.4,516.7 1459.5,505.6 1472.3,492.8 1480.3,480.1 1488.2,469.7 1496.2,464.1 1501,462.8" stroke="#c8d4d8" stroke-width="1.25" fill="none" stroke-linejoin="round"/>
<polyline points="5.6,500.8 23.9,498.4 55.8,496.8 76.6,492.8 89.3,490.7 111.6,489.3 122.8,490 135.6,495.2 151.5,501.6 165,510.4 172,516" stroke="#d6d600" stroke-width="1.25" fill="none" stroke-linejoin="round"/>
<polyline points="840,493 849.8,495.2 860.9,498.4 876.9,501.2 892.8,501.9 912,501.9 921.5,498.4 934.3,493.1 947,486.4 956.6,480.8 967.7,473.3 980.5,466.5 996.4,458.5 1009.2,452.1 1018.8,449.4 1036.3,450 1055,450.8 1070.9,455.8 1086.9,460.6 1102.8,463.3 1118.8,466.5 1134.7,470.5 1150.7,473.3 1166.6,476 1182.5,478.4 1206.4,478.4 1222.4,479.7 1238.3,483.2 1252.7,490.4 1265,496.8 1280.9,504.8 1296.9,517.5 1312.8,531.1 1324,543.8 1335.2,554.2 1347.9,561.4 1357.5,564.3 1368.7,564.6 1379.8,560.6 1392.6,556.9 1405.3,552.1 1418.1,548.6 1430.8,542.2 1443.6,532.4 1456.4,521.5 1469.1,510.4 1481.9,497.6 1491.4,484.8 1497.8,479.3 1501,477.7" stroke="#d6d600" stroke-width="1.25" fill="none" stroke-linejoin="round"/>
</g>
<g clip-path="url(#c4)">
<path d="M5,637.1 H1501" stroke="#e2dcc8" stroke-width="1.2" stroke-dasharray="2.9 2.95" fill="none"/>
<polyline points="5,647.5 25,645.1 50,643.35 55,643 66.6,638.8 81.6,635.1 91.6,635.1 100,636.8 113.3,635.1 120,636.3 126.6,643 136.6,650.5 150,655.5 158.2,663 166.6,673.8 176.6,685.5 191.5,696.3 208.2,702.1 224.9,702.1 240,699.1 250.4,696.5 266,684.4 283.3,672.3 297.2,664.5 309.3,653.2 326.6,641.9 338.7,636.7 349.1,636.2 357.8,642.8 368.2,651.5 378.6,654.6 387.2,651.5 399.4,644.5 409.8,638 421.9,637.3 434,639.3 439.2,636.7 444.4,631.7 456.5,624.8 468.7,619 482.5,617.8 490,615.2 496.9,611.2 505.6,611.8 512.5,610 516,611.41 521.2,613.5 524.6,616.06 528.1,618.7 536.8,628.2 550.6,629.6 566.2,632.5 576.6,630.8 590.5,625.6 602.6,628.2 618.2,629.1 632,631.7 642.4,636 651.1,639.5 663.2,637.7 680.5,637.7 691.8,644.7 699.6,642.1 708.3,636 718.6,631.7 729,629.6 739.4,624.8 749.8,623.9 762.5,623.9 783.3,624.9 805.8,627 816.2,633.1 826.6,639.95 843.9,646.8 861.3,651.1 871.6,652 885.5,646.8 895.9,651.1 908.9,652 920.2,644.2 930.5,633 939.2,627.9 947.9,627 956.5,616.6 965.2,607.9 979,604.5 991.2,597.6 1000.4,592.4 1010.8,587.5 1019.4,588.5 1031.6,593.7 1045.4,594.4 1057.6,593.7 1067.9,601 1080.1,607.9 1095.7,607.9 1109.5,613.1 1121.6,614 1135.5,619.2 1151.1,620.9 1163.2,623.9 1173.6,626.1 1185.7,624.9 1197.9,623.5 1211.7,624.9 1223.8,628.7 1236,633.6 1240,637.3 1244.6,642.29 1250.5,647.7 1261,652.9 1275.1,656.4 1285.6,665.2 1297.9,679.2 1310.2,696.8 1320.7,712.6 1331.2,721.3 1341.7,724.5 1345.2,724.36 1354,724 1362.8,719.56 1366.3,717.8 1378.6,709.1 1380.3,708.66 1389.1,706.4 1397.9,703.13 1403.1,701.2 1415.4,697.7 1424.2,691.5 1425.9,689.23 1434.7,677.5 1438.2,673.32 1443.5,667 1450.5,659.93 1454,656.4 1461,649.4 1464.5,645.9 1471.5,637.55 1473.3,635.4 1480.3,623.1 1485.6,612.35 1492.6,607 1501,603.9" stroke="rgb(0,177,247)" stroke-width="1.08" fill="none" stroke-linejoin="round"/>
<polyline points="5,647.28 25,644.9 50,643.18 55,642.82 66.6,638.71 81.6,635.05 91.6,635.05 100,636.78 113.3,635.08 120,636.28 126.6,642.87 136.6,650.29 150,655.21 158.2,662.58 166.6,673.24 176.6,684.75 191.5,695.28 208.2,700.92 224.9,700.81 240,697.79 250.4,695.1 266,683.17 283.3,671.32 297.2,663.66 309.3,652.56 326.6,641.54 338.7,636.42 349.1,635.93 357.8,642.5 368.2,651.14 378.6,654.2 387.2,651.17 399.4,644.22 409.8,637.84 421.9,637.14 434,639.15 439.2,636.63 444.4,631.75 456.5,624.91 468.7,619.2 482.5,618.05 490,615.5 496.9,611.55 505.6,612.19 512.5,610.46 516,611.84 521.2,613.93 524.6,616.45 528.1,619.07 536.8,628.44 550.6,629.81 566.2,632.68 576.6,630.97 590.5,625.83 602.6,628.39 618.2,629.29 632,631.85 642.4,636.1 651.1,639.55 663.2,637.74 680.5,637.73 691.8,644.72 699.6,642.12 708.3,636.02 718.6,631.75 729,629.66 739.4,624.98 749.8,624.11 762.5,624.08 783.3,625.11 805.8,627.19 816.2,633.21 826.6,639.95 843.9,646.75 861.3,650.94 871.6,651.81 885.5,646.67 895.9,650.89 908.9,651.75 920.2,644.06 930.5,633 939.2,627.91 947.9,627.05 956.5,616.77 965.2,608.23 979,604.97 991.2,598.23 1000.4,593.15 1010.8,588.33 1019.4,589.35 1031.6,594.52 1045.4,595.26 1057.6,594.61 1067.9,601.81 1080.1,608.63 1095.7,608.6 1109.5,613.73 1121.6,614.64 1135.5,619.73 1151.1,621.37 1163.2,624.3 1173.6,626.44 1185.7,625.24 1197.9,623.85 1211.7,625.24 1223.8,628.96 1236,633.76 1240,637.4 1244.6,642.3 1250.5,647.64 1261,652.77 1275.1,656.21 1285.6,664.86 1297.9,678.64 1310.2,695.87 1320.7,711.32 1331.2,719.83 1341.7,722.9 1345.2,722.76 1354,722.33 1362.8,717.95 1366.3,716.19 1378.6,707.57 1380.3,707.12 1389.1,704.84 1397.9,701.6 1403.1,699.69 1415.4,696.23 1424.2,690.13 1425.9,687.92 1434.7,676.4 1438.2,672.3 1443.5,666.07 1450.5,659.09 1454,655.62 1461,648.75 1464.5,645.33 1471.5,637.17 1473.3,635.04 1480.3,622.93 1485.6,612.35 1492.6,607.09 1501,604.08" stroke="rgb(20,174,244)" stroke-width="1.08" fill="none" stroke-linejoin="round"/>
<polyline points="5,647.04 25,644.69 50,643 55,642.63 66.6,638.62 81.6,634.99 91.6,634.99 100,636.75 113.3,635.06 120,636.25 126.6,642.73 136.6,650.06 150,654.9 158.2,662.14 166.6,672.64 176.6,683.94 191.5,694.19 208.2,699.65 224.9,699.43 240,696.38 250.4,693.6 266,681.85 283.3,670.28 297.2,662.76 309.3,651.87 326.6,641.16 338.7,636.13 349.1,635.64 357.8,642.17 368.2,650.75 378.6,653.76 387.2,650.81 399.4,643.93 409.8,637.67 421.9,636.98 434,639 439.2,636.56 444.4,631.81 456.5,625.02 468.7,619.41 482.5,618.32 490,615.83 496.9,611.92 505.6,612.6 512.5,610.96 516,612.29 521.2,614.39 524.6,616.87 528.1,619.47 536.8,628.69 550.6,630.04 566.2,632.87 576.6,631.14 590.5,626.08 602.6,628.6 618.2,629.5 632,632 642.4,636.2 651.1,639.61 663.2,637.79 680.5,637.75 691.8,644.75 699.6,642.15 708.3,636.05 718.6,631.81 729,629.73 739.4,625.17 749.8,624.33 762.5,624.28 783.3,625.34 805.8,627.4 816.2,633.32 826.6,639.95 843.9,646.69 861.3,650.76 871.6,651.6 885.5,646.54 895.9,650.67 908.9,651.48 920.2,643.92 930.5,633 939.2,627.91 947.9,627.11 956.5,616.94 965.2,608.59 979,605.48 991.2,598.9 1000.4,593.96 1010.8,589.21 1019.4,590.26 1031.6,595.4 1045.4,596.17 1057.6,595.58 1067.9,602.68 1080.1,609.4 1095.7,609.35 1109.5,614.41 1121.6,615.33 1135.5,620.29 1151.1,621.88 1163.2,624.74 1173.6,626.81 1185.7,625.61 1197.9,624.22 1211.7,625.61 1223.8,629.24 1236,633.93 1240,637.51 1244.6,642.31 1250.5,647.59 1261,652.64 1275.1,656 1285.6,664.5 1297.9,678.03 1310.2,694.87 1320.7,709.96 1331.2,718.26 1341.7,721.2 1345.2,721.05 1354,720.54 1362.8,716.22 1366.3,714.46 1378.6,705.93 1380.3,705.46 1389.1,703.18 1397.9,699.95 1403.1,698.08 1415.4,694.65 1424.2,688.67 1425.9,686.52 1434.7,675.23 1438.2,671.2 1443.5,665.07 1450.5,658.18 1454,654.79 1461,648.06 1464.5,644.72 1471.5,636.77 1473.3,634.65 1480.3,622.76 1485.6,612.35 1492.6,607.19 1501,604.28" stroke="rgb(40,172,240)" stroke-width="1.08" fill="none" stroke-linejoin="round"/>
<polyline points="5,646.78 25,644.47 50,642.8 55,642.43 66.6,638.52 81.6,634.93 91.6,634.93 100,636.73 113.3,635.04 120,636.23 126.6,642.58 136.6,649.82 150,654.56 158.2,661.66 166.6,672 176.6,683.09 191.5,693.03 208.2,698.31 224.9,697.96 240,694.88 250.4,692.01 266,680.45 283.3,669.16 297.2,661.81 309.3,651.14 326.6,640.75 338.7,635.82 349.1,635.34 357.8,641.82 368.2,650.34 378.6,653.3 387.2,650.43 399.4,643.62 409.8,637.49 421.9,636.8 434,638.83 439.2,636.48 444.4,631.87 456.5,625.14 468.7,619.63 482.5,618.6 490,616.18 496.9,612.32 505.6,613.05 512.5,611.49 516,612.78 521.2,614.87 524.6,617.31 528.1,619.9 536.8,628.96 550.6,630.29 566.2,633.07 576.6,631.33 590.5,626.35 602.6,628.81 618.2,629.71 632,632.17 642.4,636.31 651.1,639.67 663.2,637.84 680.5,637.78 691.8,644.77 699.6,642.17 708.3,636.07 718.6,631.87 729,629.8 739.4,625.37 749.8,624.57 762.5,624.48 783.3,625.59 805.8,627.61 816.2,633.44 826.6,639.95 843.9,646.63 861.3,650.58 871.6,651.39 885.5,646.39 895.9,650.43 908.9,651.2 920.2,643.76 930.5,633 939.2,627.92 947.9,627.17 956.5,617.13 965.2,608.97 979,606.02 991.2,599.62 1000.4,594.81 1010.8,590.15 1019.4,591.22 1031.6,596.34 1045.4,597.14 1057.6,596.61 1067.9,603.6 1080.1,610.23 1095.7,610.14 1109.5,615.13 1121.6,616.06 1135.5,620.89 1151.1,622.42 1163.2,625.2 1173.6,627.2 1185.7,626 1197.9,624.62 1211.7,626 1223.8,629.53 1236,634.11 1240,637.62 1244.6,642.32 1250.5,647.52 1261,652.49 1275.1,655.78 1285.6,664.12 1297.9,677.39 1310.2,693.81 1320.7,708.51 1331.2,716.58 1341.7,719.38 1345.2,719.23 1354,718.63 1362.8,714.38 1366.3,712.62 1378.6,704.18 1380.3,703.7 1389.1,701.4 1397.9,698.2 1403.1,696.36 1415.4,692.97 1424.2,687.11 1425.9,685.02 1434.7,673.98 1438.2,670.03 1443.5,664.01 1450.5,657.22 1454,653.9 1461,647.32 1464.5,644.06 1471.5,636.34 1473.3,634.24 1480.3,622.57 1485.6,612.35 1492.6,607.3 1501,604.48" stroke="rgb(61,169,237)" stroke-width="1.08" fill="none" stroke-linejoin="round"/>
<polyline points="5,646.51 25,644.23 50,642.6 55,642.21 66.6,638.41 81.6,634.87 91.6,634.87 100,636.7 113.3,635.01 120,636.2 126.6,642.43 136.6,649.57 150,654.21 158.2,661.15 166.6,671.33 176.6,682.18 191.5,691.79 208.2,696.88 224.9,696.41 240,693.29 250.4,690.32 266,678.96 283.3,667.98 297.2,660.8 309.3,650.37 326.6,640.31 338.7,635.48 349.1,635.01 357.8,641.46 368.2,649.9 378.6,652.81 387.2,650.03 399.4,643.28 409.8,637.3 421.9,636.61 434,638.66 439.2,636.39 444.4,631.93 456.5,625.27 468.7,619.87 482.5,618.9 490,616.54 496.9,612.74 505.6,613.52 512.5,612.05 516,613.3 521.2,615.39 524.6,617.78 528.1,620.35 536.8,629.24 550.6,630.54 566.2,633.29 576.6,631.53 590.5,626.63 602.6,629.04 618.2,629.94 632,632.34 642.4,636.43 651.1,639.73 663.2,637.89 680.5,637.81 691.8,644.8 699.6,642.2 708.3,636.1 718.6,631.93 729,629.87 739.4,625.59 749.8,624.82 762.5,624.7 783.3,625.84 805.8,627.84 816.2,633.57 826.6,639.95 843.9,646.57 861.3,650.38 871.6,651.16 885.5,646.24 895.9,650.18 908.9,650.9 920.2,643.6 930.5,633 939.2,627.93 947.9,627.23 956.5,617.33 965.2,609.37 979,606.59 991.2,600.38 1000.4,595.72 1010.8,591.15 1019.4,592.25 1031.6,597.33 1045.4,598.18 1057.6,597.71 1067.9,604.58 1080.1,611.1 1095.7,610.99 1109.5,615.89 1121.6,616.83 1135.5,621.53 1151.1,622.99 1163.2,625.69 1173.6,627.62 1185.7,626.42 1197.9,625.04 1211.7,626.42 1223.8,629.84 1236,634.3 1240,637.74 1244.6,642.32 1250.5,647.46 1261,652.34 1275.1,655.54 1285.6,663.71 1297.9,676.71 1310.2,692.68 1320.7,706.96 1331.2,714.81 1341.7,717.45 1345.2,717.3 1354,716.61 1362.8,712.43 1366.3,710.67 1378.6,702.33 1380.3,701.83 1389.1,699.52 1397.9,696.35 1403.1,694.54 1415.4,691.19 1424.2,685.46 1425.9,683.44 1434.7,672.65 1438.2,668.79 1443.5,662.89 1450.5,656.19 1454,652.96 1461,646.54 1464.5,643.37 1471.5,635.88 1473.3,633.81 1480.3,622.37 1485.6,612.35 1492.6,607.41 1501,604.7" stroke="rgb(81,166,233)" stroke-width="1.08" fill="none" stroke-linejoin="round"/>
<polyline points="5,646.23 25,643.97 50,642.38 55,641.99 66.6,638.3 81.6,634.8 91.6,634.8 100,636.67 113.3,634.99 120,636.17 126.6,642.26 136.6,649.3 150,653.84 158.2,660.62 166.6,670.61 176.6,681.22 191.5,690.49 208.2,695.37 224.9,694.76 240,691.61 250.4,688.53 266,677.39 283.3,666.73 297.2,659.72 309.3,649.55 326.6,639.85 338.7,635.13 349.1,634.67 357.8,641.07 368.2,649.43 378.6,652.29 387.2,649.6 399.4,642.93 409.8,637.1 421.9,636.41 434,638.47 439.2,636.3 444.4,632 456.5,625.41 468.7,620.13 482.5,619.22 490,616.93 496.9,613.19 505.6,614.01 512.5,612.64 516,613.84 521.2,615.94 524.6,618.28 528.1,620.83 536.8,629.55 550.6,630.82 566.2,633.51 576.6,631.74 590.5,626.93 602.6,629.29 618.2,630.19 632,632.53 642.4,636.55 651.1,639.8 663.2,637.94 680.5,637.85 691.8,644.83 699.6,642.23 708.3,636.13 718.6,632 729,629.95 739.4,625.81 749.8,625.08 762.5,624.93 783.3,626.12 805.8,628.09 816.2,633.71 826.6,639.95 843.9,646.5 861.3,650.18 871.6,650.91 885.5,646.08 895.9,649.92 908.9,650.58 920.2,643.43 930.5,633 939.2,627.94 947.9,627.3 956.5,617.54 965.2,609.8 979,607.19 991.2,601.18 1000.4,596.68 1010.8,592.2 1019.4,593.33 1031.6,598.38 1045.4,599.27 1057.6,598.86 1067.9,605.61 1080.1,612.03 1095.7,611.88 1109.5,616.7 1121.6,617.65 1135.5,622.21 1151.1,623.59 1163.2,626.21 1173.6,628.06 1185.7,626.86 1197.9,625.49 1211.7,626.86 1223.8,630.18 1236,634.5 1240,637.86 1244.6,642.33 1250.5,647.39 1261,652.18 1275.1,655.29 1285.6,663.28 1297.9,675.99 1310.2,691.49 1320.7,705.33 1331.2,712.93 1341.7,715.41 1345.2,715.25 1354,714.47 1362.8,710.37 1366.3,708.6 1378.6,700.37 1380.3,699.85 1389.1,697.53 1397.9,694.38 1403.1,692.62 1415.4,689.31 1424.2,683.71 1425.9,681.76 1434.7,671.25 1438.2,667.47 1443.5,661.7 1450.5,655.11 1454,651.96 1461,645.71 1464.5,642.64 1471.5,635.4 1473.3,633.35 1480.3,622.16 1485.6,612.35 1492.6,607.53 1501,604.93" stroke="rgb(102,163,230)" stroke-width="1.08" fill="none" stroke-linejoin="round"/>
<polyline points="5,645.93 25,643.71 50,642.15 55,641.75 66.6,638.18 81.6,634.74 91.6,634.74 100,636.64 113.3,634.96 120,636.14 126.6,642.09 136.6,649.02 150,653.45 158.2,660.06 166.6,669.85 176.6,680.21 191.5,689.12 208.2,693.78 224.9,693.02 240,689.84 250.4,686.65 266,675.73 283.3,665.41 297.2,658.59 309.3,648.68 326.6,639.37 338.7,634.76 349.1,634.31 357.8,640.66 368.2,648.95 378.6,651.75 387.2,649.15 399.4,642.56 409.8,636.88 421.9,636.21 434,638.27 439.2,636.21 444.4,632.06 456.5,625.55 468.7,620.39 482.5,619.56 490,617.34 496.9,613.66 505.6,614.54 512.5,613.27 516,614.42 521.2,616.51 524.6,618.81 528.1,621.33 536.8,629.86 550.6,631.11 566.2,633.75 576.6,631.96 590.5,627.24 602.6,629.55 618.2,630.45 632,632.73 642.4,636.68 651.1,639.86 663.2,638 680.5,637.88 691.8,644.86 699.6,642.26 708.3,636.16 718.6,632.06 729,630.03 739.4,626.05 749.8,625.36 762.5,625.18 783.3,626.41 805.8,628.35 816.2,633.85 826.6,639.95 843.9,646.44 861.3,649.96 871.6,650.65 885.5,645.91 895.9,649.64 908.9,650.24 920.2,643.24 930.5,633 939.2,627.95 947.9,627.36 956.5,617.76 965.2,610.25 979,607.83 991.2,602.02 1000.4,597.69 1010.8,593.32 1019.4,594.48 1031.6,599.49 1045.4,600.42 1057.6,600.09 1067.9,606.7 1080.1,613.01 1095.7,612.83 1109.5,617.55 1121.6,618.52 1135.5,622.92 1151.1,624.23 1163.2,626.75 1173.6,628.52 1185.7,627.32 1197.9,625.96 1211.7,627.32 1223.8,630.52 1236,634.72 1240,638 1244.6,642.34 1250.5,647.31 1261,652.01 1275.1,655.03 1285.6,662.83 1297.9,675.23 1310.2,690.23 1320.7,703.61 1331.2,710.95 1341.7,713.26 1345.2,713.1 1354,712.22 1362.8,708.19 1366.3,706.43 1378.6,698.3 1380.3,697.77 1389.1,695.43 1397.9,692.31 1403.1,690.59 1415.4,687.32 1424.2,681.87 1425.9,679.99 1434.7,669.77 1438.2,666.09 1443.5,660.44 1450.5,653.97 1454,650.91 1461,644.84 1464.5,641.87 1471.5,634.89 1473.3,632.86 1480.3,621.94 1485.6,612.35 1492.6,607.66 1501,605.18" stroke="rgb(123,159,227)" stroke-width="1.08" fill="none" stroke-linejoin="round"/>
<polyline points="5,645.61 25,643.43 50,641.91 55,641.49 66.6,638.06 81.6,634.66 91.6,634.66 100,636.61 113.3,634.94 120,636.11 126.6,641.9 136.6,648.72 150,653.03 158.2,659.47 166.6,669.06 176.6,679.14 191.5,687.67 208.2,692.1 224.9,691.2 240,687.98 250.4,684.67 266,673.99 283.3,664.03 297.2,657.4 309.3,647.78 326.6,638.86 338.7,634.37 349.1,633.93 357.8,640.22 368.2,648.43 378.6,651.18 387.2,648.68 399.4,642.17 409.8,636.66 421.9,635.99 434,638.07 439.2,636.11 444.4,632.14 456.5,625.7 468.7,620.67 482.5,619.91 490,617.78 496.9,614.16 505.6,615.09 512.5,613.93 516,615.02 521.2,617.12 524.6,619.36 528.1,621.86 536.8,630.2 550.6,631.41 566.2,634.01 576.6,632.2 590.5,627.57 602.6,629.82 618.2,630.72 632,632.93 642.4,636.82 651.1,639.94 663.2,638.06 680.5,637.92 691.8,644.89 699.6,642.29 708.3,636.19 718.6,632.14 729,630.12 739.4,626.31 749.8,625.65 762.5,625.43 783.3,626.71 805.8,628.62 816.2,634 826.6,639.95 843.9,646.36 861.3,649.73 871.6,650.38 885.5,645.73 895.9,649.35 908.9,649.89 920.2,643.05 930.5,633 939.2,627.95 947.9,627.44 956.5,618 965.2,610.72 979,608.5 991.2,602.91 1000.4,598.76 1010.8,594.49 1019.4,595.68 1031.6,600.66 1045.4,601.63 1057.6,601.37 1067.9,607.85 1080.1,614.04 1095.7,613.82 1109.5,618.44 1121.6,619.42 1135.5,623.67 1151.1,624.9 1163.2,627.32 1173.6,629 1185.7,627.8 1197.9,626.46 1211.7,627.8 1223.8,630.89 1236,634.94 1240,638.14 1244.6,642.35 1250.5,647.23 1261,651.83 1275.1,654.76 1285.6,662.35 1297.9,674.43 1310.2,688.91 1320.7,701.81 1331.2,708.86 1341.7,711 1345.2,710.84 1354,709.85 1362.8,705.9 1366.3,704.14 1378.6,696.13 1380.3,695.58 1389.1,693.22 1397.9,690.14 1403.1,688.45 1415.4,685.24 1424.2,679.93 1425.9,678.13 1434.7,668.22 1438.2,664.63 1443.5,659.12 1450.5,652.77 1454,649.81 1461,643.92 1464.5,641.06 1471.5,634.36 1473.3,632.35 1480.3,621.7 1485.6,612.35 1492.6,607.79 1501,605.43" stroke="rgb(144,157,224)" stroke-width="1.08" fill="none" stroke-linejoin="round"/>
<polyline points="5,645.28 25,643.14 50,641.66 55,641.23 66.6,637.93 81.6,634.58 91.6,634.58 100,636.57 113.3,634.91 120,636.07 126.6,641.71 136.6,648.41 150,652.6 158.2,658.85 166.6,668.23 176.6,678.03 191.5,686.15 208.2,690.34 224.9,689.28 240,686.02 250.4,682.59 266,672.16 283.3,662.57 297.2,656.16 309.3,646.82 326.6,638.32 338.7,633.96 349.1,633.53 357.8,639.77 368.2,647.89 378.6,650.57 387.2,648.18 399.4,641.76 409.8,636.42 421.9,635.75 434,637.85 439.2,636.01 444.4,632.22 456.5,625.86 468.7,620.96 482.5,620.28 490,618.23 496.9,614.68 505.6,615.67 512.5,614.62 516,615.66 521.2,617.76 524.6,619.94 528.1,622.41 536.8,630.55 550.6,631.73 566.2,634.27 576.6,632.44 590.5,627.92 602.6,630.1 618.2,631 632,633.15 642.4,636.97 651.1,640.02 663.2,638.12 680.5,637.96 691.8,644.93 699.6,642.33 708.3,636.23 718.6,632.22 729,630.21 739.4,626.57 749.8,625.96 762.5,625.7 783.3,627.03 805.8,628.9 816.2,634.16 826.6,639.95 843.9,646.28 861.3,649.49 871.6,650.1 885.5,645.54 895.9,649.04 908.9,649.52 920.2,642.85 930.5,633 939.2,627.96 947.9,627.52 956.5,618.24 965.2,611.22 979,609.2 991.2,603.85 1000.4,599.87 1010.8,595.71 1019.4,596.94 1031.6,601.88 1045.4,602.9 1057.6,602.72 1067.9,609.05 1080.1,615.11 1095.7,614.86 1109.5,619.38 1121.6,620.38 1135.5,624.45 1151.1,625.6 1163.2,627.93 1173.6,629.51 1185.7,628.31 1197.9,626.98 1211.7,628.31 1223.8,631.28 1236,635.18 1240,638.29 1244.6,642.36 1250.5,647.15 1261,651.64 1275.1,654.47 1285.6,661.85 1297.9,673.6 1310.2,687.52 1320.7,699.91 1331.2,706.68 1341.7,708.63 1345.2,708.46 1354,707.36 1362.8,703.5 1366.3,701.74 1378.6,693.85 1380.3,693.28 1389.1,690.91 1397.9,687.85 1403.1,686.21 1415.4,683.05 1424.2,677.9 1425.9,676.18 1434.7,666.59 1438.2,663.11 1443.5,657.74 1450.5,651.52 1454,648.65 1461,642.96 1464.5,640.21 1471.5,633.8 1473.3,631.82 1480.3,621.46 1485.6,612.35 1492.6,607.93 1501,605.7" stroke="rgb(164,154,221)" stroke-width="1.08" fill="none" stroke-linejoin="round"/>
<polyline points="5,644.93 25,642.83 50,641.39 55,640.95 66.6,637.79 81.6,634.5 91.6,634.5 100,636.54 113.3,634.88 120,636.04 126.6,641.51 136.6,648.08 150,652.15 158.2,658.2 166.6,667.36 176.6,676.86 191.5,684.57 208.2,688.5 224.9,687.28 240,683.98 250.4,680.41 266,670.25 283.3,661.05 297.2,654.85 309.3,645.83 326.6,637.77 338.7,633.53 349.1,633.11 357.8,639.3 368.2,647.33 378.6,649.94 387.2,647.66 399.4,641.33 409.8,636.17 421.9,635.51 434,637.62 439.2,635.9 444.4,632.3 456.5,626.03 468.7,621.27 482.5,620.67 490,618.7 496.9,615.22 505.6,616.27 512.5,615.34 516,616.32 521.2,618.42 524.6,620.55 528.1,622.99 536.8,630.92 550.6,632.06 566.2,634.55 576.6,632.7 590.5,628.28 602.6,630.4 618.2,631.3 632,633.38 642.4,637.12 651.1,640.1 663.2,638.18 680.5,638 691.8,644.96 699.6,642.36 708.3,636.26 718.6,632.3 729,630.31 739.4,626.85 749.8,626.28 762.5,625.99 783.3,627.36 805.8,629.2 816.2,634.33 826.6,639.95 843.9,646.2 861.3,649.24 871.6,649.8 885.5,645.35 895.9,648.72 908.9,649.13 920.2,642.64 930.5,633 939.2,627.97 947.9,627.6 956.5,618.5 965.2,611.74 979,609.94 991.2,604.83 1000.4,601.04 1010.8,597 1019.4,598.26 1031.6,603.16 1045.4,604.23 1057.6,604.13 1067.9,610.31 1080.1,616.24 1095.7,615.95 1109.5,620.36 1121.6,621.37 1135.5,625.27 1151.1,626.34 1163.2,628.56 1173.6,630.05 1185.7,628.85 1197.9,627.52 1211.7,628.85 1223.8,631.68 1236,635.43 1240,638.44 1244.6,642.37 1250.5,647.07 1261,651.45 1275.1,654.17 1285.6,661.33 1297.9,672.72 1310.2,686.07 1320.7,697.92 1331.2,704.39 1341.7,706.15 1345.2,705.97 1354,704.76 1362.8,700.99 1366.3,699.23 1378.6,691.47 1380.3,690.87 1389.1,688.48 1397.9,685.46 1403.1,683.87 1415.4,680.75 1424.2,675.77 1425.9,674.14 1434.7,664.88 1438.2,661.51 1443.5,656.29 1450.5,650.2 1454,647.44 1461,641.95 1464.5,639.32 1471.5,633.21 1473.3,631.26 1480.3,621.2 1485.6,612.35 1492.6,608.08 1501,605.99" stroke="rgb(185,151,217)" stroke-width="1.08" fill="none" stroke-linejoin="round"/>
<polyline points="5,644.57 25,642.51 50,641.12 55,640.66 66.6,637.65 81.6,634.42 91.6,634.42 100,636.5 113.3,634.84 120,636 126.6,641.3 136.6,647.74 150,651.67 158.2,657.52 166.6,666.45 176.6,675.64 191.5,682.91 208.2,686.58 224.9,685.18 240,681.84 250.4,678.14 266,668.25 283.3,659.46 297.2,653.49 309.3,644.78 326.6,637.18 338.7,633.09 349.1,632.67 357.8,638.8 368.2,646.74 378.6,649.29 387.2,647.12 399.4,640.89 409.8,635.92 421.9,635.26 434,637.39 439.2,635.79 444.4,632.38 456.5,626.2 468.7,621.59 482.5,621.07 490,619.2 496.9,615.79 505.6,616.9 512.5,616.09 516,617.02 521.2,619.12 524.6,621.18 528.1,623.6 536.8,631.3 550.6,632.41 566.2,634.84 576.6,632.97 590.5,628.66 602.6,630.71 618.2,631.61 632,633.61 642.4,637.28 651.1,640.18 663.2,638.25 680.5,638.04 691.8,645 699.6,642.4 708.3,636.3 718.6,632.38 729,630.41 739.4,627.14 749.8,626.62 762.5,626.28 783.3,627.71 805.8,629.51 816.2,634.5 826.6,639.95 843.9,646.12 861.3,648.97 871.6,649.49 885.5,645.14 895.9,648.38 908.9,648.73 920.2,642.41 930.5,633 939.2,627.99 947.9,627.68 956.5,618.77 965.2,612.28 979,610.71 991.2,605.85 1000.4,602.26 1010.8,598.34 1019.4,599.64 1031.6,604.5 1045.4,605.62 1057.6,605.6 1067.9,611.63 1080.1,617.42 1095.7,617.08 1109.5,621.39 1121.6,622.42 1135.5,626.13 1151.1,627.11 1163.2,629.21 1173.6,630.61 1185.7,629.41 1197.9,628.09 1211.7,629.41 1223.8,632.1 1236,635.68 1240,638.6 1244.6,642.38 1250.5,646.98 1261,651.24 1275.1,653.85 1285.6,660.78 1297.9,671.8 1310.2,684.56 1320.7,695.85 1331.2,702 1341.7,703.55 1345.2,703.38 1354,702.04 1362.8,698.37 1366.3,696.6 1378.6,688.97 1380.3,688.36 1389.1,685.95 1397.9,682.97 1403.1,681.42 1415.4,678.36 1424.2,673.55 1425.9,672 1434.7,663.1 1438.2,659.84 1443.5,654.77 1450.5,648.82 1454,646.17 1461,640.9 1464.5,638.39 1471.5,632.6 1473.3,630.67 1480.3,620.93 1485.6,612.35 1492.6,608.23 1501,606.28" stroke="rgb(205,148,214)" stroke-width="1.08" fill="none" stroke-linejoin="round"/>
<polyline points="5,644.19 25,642.17 50,640.83 55,640.36 66.6,637.5 81.6,634.33 91.6,634.33 100,636.46 113.3,634.81 120,635.96 126.6,641.08 136.6,647.38 150,651.18 158.2,656.81 166.6,665.5 176.6,674.36 191.5,681.18 208.2,684.58 224.9,683 240,679.61 250.4,675.76 266,666.16 283.3,657.8 297.2,652.07 309.3,643.7 326.6,636.57 338.7,632.62 349.1,632.22 357.8,638.29 368.2,646.12 378.6,648.6 387.2,646.56 399.4,640.42 409.8,635.65 421.9,635 434,637.14 439.2,635.67 444.4,632.47 456.5,626.38 468.7,621.93 482.5,621.5 490,619.71 496.9,616.38 505.6,617.56 512.5,616.88 516,617.74 521.2,619.84 524.6,621.84 528.1,624.23 536.8,631.7 550.6,632.77 566.2,635.14 576.6,633.25 590.5,629.06 602.6,631.03 618.2,631.93 632,633.86 642.4,637.44 651.1,640.27 663.2,638.32 680.5,638.08 691.8,645.04 699.6,642.44 708.3,636.34 718.6,632.47 729,630.51 739.4,627.44 749.8,626.97 762.5,626.59 783.3,628.07 805.8,629.83 816.2,634.68 826.6,639.95 843.9,646.03 861.3,648.7 871.6,649.17 885.5,644.93 895.9,648.03 908.9,648.3 920.2,642.18 930.5,633 939.2,628 947.9,627.77 956.5,619.05 965.2,612.84 979,611.51 991.2,606.91 1000.4,603.54 1010.8,599.74 1019.4,601.08 1031.6,605.89 1045.4,607.07 1057.6,607.14 1067.9,613 1080.1,618.65 1095.7,618.27 1109.5,622.46 1121.6,623.5 1135.5,627.02 1151.1,627.91 1163.2,629.9 1173.6,631.19 1185.7,629.99 1197.9,628.68 1211.7,629.99 1223.8,632.54 1236,635.95 1240,638.77 1244.6,642.39 1250.5,646.88 1261,651.03 1275.1,653.52 1285.6,660.21 1297.9,670.85 1310.2,682.98 1320.7,693.69 1331.2,699.51 1341.7,700.85 1345.2,700.67 1354,699.21 1362.8,695.63 1366.3,693.87 1378.6,686.38 1380.3,685.74 1389.1,683.31 1397.9,680.37 1403.1,678.86 1415.4,675.86 1424.2,671.23 1425.9,669.78 1434.7,661.24 1438.2,658.1 1443.5,653.2 1450.5,647.39 1454,644.85 1461,639.8 1464.5,637.42 1471.5,631.96 1473.3,630.06 1480.3,620.65 1485.6,612.35 1492.6,608.39 1501,606.59" stroke="rgb(209,159,190)" stroke-width="1.08" fill="none" stroke-linejoin="round"/>
<polyline points="5,643.79 25,641.82 50,640.53 55,640.04 66.6,637.35 81.6,634.24 91.6,634.24 100,636.42 113.3,634.78 120,635.92 126.6,640.85 136.6,647.01 150,650.67 158.2,656.07 166.6,664.51 176.6,673.04 191.5,679.38 208.2,682.5 224.9,680.72 240,677.29 250.4,673.3 266,663.99 283.3,656.08 297.2,650.59 309.3,642.57 326.6,635.94 338.7,632.13 349.1,631.74 357.8,637.75 368.2,645.48 378.6,647.89 387.2,645.97 399.4,639.93 409.8,635.37 421.9,634.72 434,636.88 439.2,635.55 444.4,632.56 456.5,626.57 468.7,622.28 482.5,621.94 490,620.25 496.9,617 505.6,618.25 512.5,617.7 516,618.49 521.2,620.6 524.6,622.53 528.1,624.89 536.8,632.12 550.6,633.14 566.2,635.45 576.6,633.54 590.5,629.47 602.6,631.37 618.2,632.27 632,634.12 642.4,637.61 651.1,640.36 663.2,638.4 680.5,638.13 691.8,645.08 699.6,642.48 708.3,636.38 718.6,632.56 729,630.62 739.4,627.75 749.8,627.34 762.5,626.91 783.3,628.44 805.8,630.17 816.2,634.87 826.6,639.95 843.9,645.94 861.3,648.41 871.6,648.83 885.5,644.71 895.9,647.66 908.9,647.86 920.2,641.94 930.5,633 939.2,628.01 947.9,627.86 956.5,619.34 965.2,613.43 979,612.34 991.2,608.02 1000.4,604.86 1010.8,601.2 1019.4,602.57 1031.6,607.34 1045.4,608.58 1057.6,608.74 1067.9,614.43 1080.1,619.93 1095.7,619.5 1109.5,623.57 1121.6,624.63 1135.5,627.95 1151.1,628.74 1163.2,630.61 1173.6,631.79 1185.7,630.59 1197.9,629.3 1211.7,630.59 1223.8,633 1236,636.23 1240,638.94 1244.6,642.4 1250.5,646.79 1261,650.81 1275.1,653.18 1285.6,659.61 1297.9,669.85 1310.2,681.33 1320.7,691.44 1331.2,696.92 1341.7,698.03 1345.2,697.85 1354,696.26 1362.8,692.78 1366.3,691.02 1378.6,683.67 1380.3,683.01 1389.1,680.56 1397.9,677.66 1403.1,676.2 1415.4,673.26 1424.2,668.82 1425.9,667.46 1434.7,659.3 1438.2,656.28 1443.5,651.55 1450.5,645.9 1454,643.47 1461,638.66 1464.5,636.41 1471.5,631.29 1473.3,629.43 1480.3,620.36 1485.6,612.35 1492.6,608.56 1501,606.91" stroke="rgb(212,168,166)" stroke-width="1.08" fill="none" stroke-linejoin="round"/>
<polyline points="5,643.38 25,641.46 50,640.22 55,639.72 66.6,637.19 81.6,634.15 91.6,634.15 100,636.38 113.3,634.74 120,635.88 126.6,640.61 136.6,646.62 150,650.13 158.2,655.31 166.6,663.48 176.6,671.66 191.5,677.51 208.2,680.33 224.9,678.36 240,674.88 250.4,670.73 266,661.73 283.3,654.29 297.2,649.05 309.3,641.39 326.6,635.28 338.7,631.63 349.1,631.25 357.8,637.19 368.2,644.82 378.6,647.14 387.2,645.36 399.4,639.43 409.8,635.08 421.9,634.44 434,636.62 439.2,635.42 444.4,632.65 456.5,626.77 468.7,622.64 482.5,622.39 490,620.81 496.9,617.64 505.6,618.96 512.5,618.55 516,619.28 521.2,621.38 524.6,623.24 528.1,625.57 536.8,632.55 550.6,633.54 566.2,635.78 576.6,633.84 590.5,629.89 602.6,631.72 618.2,632.62 632,634.38 642.4,637.79 651.1,640.45 663.2,638.48 680.5,638.18 691.8,645.12 699.6,642.52 708.3,636.42 718.6,632.65 729,630.73 739.4,628.08 749.8,627.72 762.5,627.24 783.3,628.84 805.8,630.52 816.2,635.07 826.6,639.95 843.9,645.85 861.3,648.12 871.6,648.48 885.5,644.47 895.9,647.28 908.9,647.41 920.2,641.69 930.5,633 939.2,628.02 947.9,627.95 956.5,619.64 965.2,614.04 979,613.21 991.2,609.17 1000.4,606.24 1010.8,602.71 1019.4,604.13 1031.6,608.85 1045.4,610.15 1057.6,610.4 1067.9,615.91 1080.1,621.26 1095.7,620.78 1109.5,624.73 1121.6,625.81 1135.5,628.92 1151.1,629.61 1163.2,631.36 1173.6,632.42 1185.7,631.22 1197.9,629.94 1211.7,631.22 1223.8,633.47 1236,636.52 1240,639.13 1244.6,642.42 1250.5,646.69 1261,650.57 1275.1,652.82 1285.6,659 1297.9,668.82 1310.2,679.62 1320.7,689.1 1331.2,694.22 1341.7,695.11 1345.2,694.92 1354,693.19 1362.8,689.82 1366.3,688.06 1378.6,680.86 1380.3,680.17 1389.1,677.71 1397.9,674.84 1403.1,673.44 1415.4,670.56 1424.2,666.31 1425.9,665.06 1434.7,657.29 1438.2,654.4 1443.5,649.84 1450.5,644.35 1454,642.04 1461,637.47 1464.5,635.36 1471.5,630.6 1473.3,628.77 1480.3,620.06 1485.6,612.35 1492.6,608.73 1501,607.24" stroke="rgb(215,178,142)" stroke-width="1.08" fill="none" stroke-linejoin="round"/>
<polyline points="5,642.96 25,641.09 50,639.89 55,639.38 66.6,637.02 81.6,634.05 91.6,634.05 100,636.34 113.3,634.71 120,635.84 126.6,640.37 136.6,646.22 150,649.58 158.2,654.51 166.6,662.41 176.6,670.23 191.5,675.57 208.2,678.08 224.9,675.91 240,672.38 250.4,668.07 266,659.39 283.3,652.42 297.2,647.45 309.3,640.17 326.6,634.59 338.7,631.11 349.1,630.74 357.8,636.61 368.2,644.13 378.6,646.37 387.2,644.72 399.4,638.91 409.8,634.78 421.9,634.14 434,636.34 439.2,635.29 444.4,632.75 456.5,626.97 468.7,623.01 482.5,622.87 490,621.39 496.9,618.31 505.6,619.7 512.5,619.43 516,620.09 521.2,622.2 524.6,623.98 528.1,626.28 536.8,633 550.6,633.94 566.2,636.12 576.6,634.16 590.5,630.34 602.6,632.08 618.2,632.98 632,634.66 642.4,637.97 651.1,640.55 663.2,638.56 680.5,638.23 691.8,645.16 699.6,642.56 708.3,636.46 718.6,632.75 729,630.85 739.4,628.42 749.8,628.11 762.5,627.59 783.3,629.24 805.8,630.88 816.2,635.27 826.6,639.95 843.9,645.75 861.3,647.81 871.6,648.12 885.5,644.23 895.9,646.89 908.9,646.93 920.2,641.44 930.5,633 939.2,628.03 947.9,628.05 956.5,619.96 965.2,614.68 979,614.11 991.2,610.37 1000.4,607.67 1010.8,604.28 1019.4,605.74 1031.6,610.42 1045.4,611.77 1057.6,612.13 1067.9,617.45 1080.1,622.64 1095.7,622.12 1109.5,625.93 1121.6,627.03 1135.5,629.93 1151.1,630.51 1163.2,632.13 1173.6,633.08 1185.7,631.88 1197.9,630.61 1211.7,631.88 1223.8,633.96 1236,636.82 1240,639.31 1244.6,642.43 1250.5,646.58 1261,650.33 1275.1,652.45 1285.6,658.36 1297.9,667.75 1310.2,677.85 1320.7,686.67 1331.2,691.42 1341.7,692.07 1345.2,691.87 1354,690.01 1362.8,686.75 1366.3,684.99 1378.6,677.94 1380.3,677.23 1389.1,674.74 1397.9,671.92 1403.1,670.57 1415.4,667.76 1424.2,663.71 1425.9,662.56 1434.7,655.2 1438.2,652.45 1443.5,648.07 1450.5,642.73 1454,640.56 1461,636.24 1464.5,634.27 1471.5,629.88 1473.3,628.08 1480.3,619.74 1485.6,612.35 1492.6,608.91 1501,607.59" stroke="rgb(219,187,119)" stroke-width="1.08" fill="none" stroke-linejoin="round"/>
<polyline points="5,642.52 25,640.7 50,639.56 55,639.03 66.6,636.85 81.6,633.94 91.6,633.94 100,636.29 113.3,634.67 120,635.79 126.6,640.11 136.6,645.81 150,649 158.2,653.69 166.6,661.31 176.6,668.75 191.5,673.56 208.2,675.75 224.9,673.36 240,669.79 250.4,665.31 266,656.96 283.3,650.5 297.2,645.8 309.3,638.9 326.6,633.89 338.7,630.56 349.1,630.21 357.8,636.01 368.2,643.41 378.6,645.58 387.2,644.06 399.4,638.36 409.8,634.46 421.9,633.83 434,636.05 439.2,635.15 444.4,632.86 456.5,627.18 468.7,623.4 482.5,623.36 490,621.99 496.9,619 505.6,620.46 512.5,620.35 516,620.93 521.2,623.04 524.6,624.75 528.1,627.02 536.8,633.47 550.6,634.37 566.2,636.47 576.6,634.48 590.5,630.8 602.6,632.46 618.2,633.36 632,634.95 642.4,638.17 651.1,640.66 663.2,638.64 680.5,638.28 691.8,645.21 699.6,642.61 708.3,636.51 718.6,632.86 729,630.97 739.4,628.77 749.8,628.52 762.5,627.94 783.3,629.67 805.8,631.26 816.2,635.48 826.6,639.95 843.9,645.64 861.3,647.49 871.6,647.74 885.5,643.98 895.9,646.48 908.9,646.44 920.2,641.17 930.5,633 939.2,628.04 947.9,628.16 956.5,620.28 965.2,615.34 979,615.04 991.2,611.61 1000.4,609.15 1010.8,605.91 1019.4,607.42 1031.6,612.04 1045.4,613.46 1057.6,613.92 1067.9,619.05 1080.1,624.07 1095.7,623.5 1109.5,627.18 1121.6,628.3 1135.5,630.97 1151.1,631.44 1163.2,632.92 1173.6,633.75 1185.7,632.55 1197.9,631.3 1211.7,632.55 1223.8,634.48 1236,637.14 1240,639.51 1244.6,642.44 1250.5,646.47 1261,650.08 1275.1,652.07 1285.6,657.69 1297.9,666.64 1310.2,676.01 1320.7,684.15 1331.2,688.52 1341.7,688.92 1345.2,688.72 1354,686.71 1362.8,683.56 1366.3,681.8 1378.6,674.92 1380.3,674.18 1389.1,671.67 1397.9,668.89 1403.1,667.6 1415.4,664.85 1424.2,661.01 1425.9,659.97 1434.7,653.04 1438.2,650.42 1443.5,646.23 1450.5,641.07 1454,639.02 1461,634.96 1464.5,633.14 1471.5,629.14 1473.3,627.37 1480.3,619.42 1485.6,612.35 1492.6,609.09 1501,607.94" stroke="rgb(223,198,95)" stroke-width="1.08" fill="none" stroke-linejoin="round"/>
<polyline points="5,642.06 25,640.29 50,639.21 55,638.66 66.6,636.67 81.6,633.84 91.6,633.84 100,636.25 113.3,634.63 120,635.75 126.6,639.85 136.6,645.38 150,648.41 158.2,652.83 166.6,660.17 176.6,667.22 191.5,671.47 208.2,673.33 224.9,670.73 240,667.1 250.4,662.45 266,654.45 283.3,648.5 297.2,644.09 309.3,637.6 326.6,633.15 338.7,630 349.1,629.66 357.8,635.39 368.2,642.67 378.6,644.75 387.2,643.38 399.4,637.8 409.8,634.14 421.9,633.52 434,635.75 439.2,635.01 444.4,632.96 456.5,627.4 468.7,623.81 482.5,623.87 490,622.61 496.9,619.71 505.6,621.26 512.5,621.29 516,621.8 521.2,623.92 524.6,625.55 528.1,627.78 536.8,633.95 550.6,634.8 566.2,636.83 576.6,634.82 590.5,631.27 602.6,632.85 618.2,633.75 632,635.25 642.4,638.36 651.1,640.76 663.2,638.72 680.5,638.33 691.8,645.25 699.6,642.65 708.3,636.55 718.6,632.96 729,631.1 739.4,629.13 749.8,628.94 762.5,628.31 783.3,630.1 805.8,631.65 816.2,635.7 826.6,639.95 843.9,645.54 861.3,647.16 871.6,647.35 885.5,643.73 895.9,646.06 908.9,645.93 920.2,640.89 930.5,633 939.2,628.06 947.9,628.26 956.5,620.62 965.2,616.02 979,616.01 991.2,612.89 1000.4,610.68 1010.8,607.6 1019.4,609.15 1031.6,613.72 1045.4,615.21 1057.6,615.77 1067.9,620.7 1080.1,625.55 1095.7,624.92 1109.5,628.47 1121.6,629.6 1135.5,632.05 1151.1,632.41 1163.2,633.75 1173.6,634.45 1185.7,633.25 1197.9,632.01 1211.7,633.25 1223.8,635 1236,637.46 1240,639.71 1244.6,642.46 1250.5,646.36 1261,649.83 1275.1,651.67 1285.6,657 1297.9,665.49 1310.2,674.1 1320.7,681.55 1331.2,685.52 1341.7,685.67 1345.2,685.46 1354,683.29 1362.8,680.27 1366.3,678.5 1378.6,671.79 1380.3,671.02 1389.1,668.49 1397.9,665.75 1403.1,664.52 1415.4,661.84 1424.2,658.21 1425.9,657.29 1434.7,650.8 1438.2,648.32 1443.5,644.33 1450.5,639.34 1454,637.43 1461,633.64 1464.5,631.98 1471.5,628.37 1473.3,626.64 1480.3,619.08 1485.6,612.35 1492.6,609.29 1501,608.31" stroke="rgb(226,207,71)" stroke-width="1.08" fill="none" stroke-linejoin="round"/>
<polyline points="5,641.59 25,639.88 50,638.85 55,638.29 66.6,636.49 81.6,633.73 91.6,633.73 100,636.2 113.3,634.59 120,635.7 126.6,639.57 136.6,644.93 150,647.79 158.2,651.95 166.6,658.98 176.6,665.63 191.5,669.32 208.2,670.84 224.9,668.01 240,664.33 250.4,659.5 266,651.85 283.3,646.43 297.2,642.32 309.3,636.24 326.6,632.39 338.7,629.42 349.1,629.09 357.8,634.75 368.2,641.91 378.6,643.89 387.2,642.68 399.4,637.22 409.8,633.8 421.9,633.19 434,635.45 439.2,634.86 444.4,633.07 456.5,627.63 468.7,624.22 482.5,624.4 490,623.25 496.9,620.45 505.6,622.08 512.5,622.27 516,622.71 521.2,624.82 524.6,626.37 528.1,628.57 536.8,634.45 550.6,635.25 566.2,637.21 576.6,635.17 590.5,631.77 602.6,633.25 618.2,634.15 632,635.55 642.4,638.57 651.1,640.87 663.2,638.81 680.5,638.39 691.8,645.3 699.6,642.7 708.3,636.6 718.6,633.07 729,631.23 739.4,629.51 749.8,629.38 762.5,628.7 783.3,630.55 805.8,632.05 816.2,635.93 826.6,639.95 843.9,645.43 861.3,646.82 871.6,646.95 885.5,643.46 895.9,645.62 908.9,645.4 920.2,640.6 930.5,633 939.2,628.07 947.9,628.37 956.5,620.97 965.2,616.72 979,617 991.2,614.22 1000.4,612.27 1010.8,609.34 1019.4,610.94 1031.6,615.46 1045.4,617.01 1057.6,617.68 1067.9,622.41 1080.1,627.09 1095.7,626.4 1109.5,629.8 1121.6,630.96 1135.5,633.16 1151.1,633.4 1163.2,634.61 1173.6,635.18 1185.7,633.98 1197.9,632.75 1211.7,633.98 1223.8,635.55 1236,637.8 1240,639.92 1244.6,642.47 1250.5,646.24 1261,649.56 1275.1,651.26 1285.6,656.29 1297.9,664.3 1310.2,672.13 1320.7,678.85 1331.2,682.41 1341.7,682.3 1345.2,682.08 1354,679.76 1362.8,676.86 1366.3,675.09 1378.6,668.55 1380.3,667.75 1389.1,665.2 1397.9,662.51 1403.1,661.34 1415.4,658.73 1424.2,655.33 1425.9,654.52 1434.7,648.48 1438.2,646.15 1443.5,642.37 1450.5,637.55 1454,635.79 1461,632.27 1464.5,630.77 1471.5,627.57 1473.3,625.88 1480.3,618.73 1485.6,612.35 1492.6,609.48 1501,608.7" stroke="rgb(229,217,47)" stroke-width="1.08" fill="none" stroke-linejoin="round"/>
<polyline points="5,641.1 25,639.44 50,638.48 55,637.9 66.6,636.3 81.6,633.62 91.6,633.62 100,636.15 113.3,634.54 120,635.65 126.6,639.29 136.6,644.47 150,647.16 158.2,651.04 166.6,657.76 176.6,663.99 191.5,667.1 208.2,668.26 224.9,665.2 240,661.46 250.4,656.45 266,649.17 283.3,644.3 297.2,640.49 309.3,634.84 326.6,631.61 338.7,628.82 349.1,628.5 357.8,634.09 368.2,641.12 378.6,643.01 387.2,641.95 399.4,636.62 409.8,633.46 421.9,632.85 434,635.13 439.2,634.71 444.4,633.18 456.5,627.86 468.7,624.66 482.5,624.94 490,623.91 496.9,621.21 505.6,622.93 512.5,623.29 516,623.64 521.2,625.75 524.6,627.22 528.1,629.38 536.8,634.97 550.6,635.72 566.2,637.6 576.6,635.53 590.5,632.28 602.6,633.67 618.2,634.57 632,635.87 642.4,638.78 651.1,640.98 663.2,638.91 680.5,638.44 691.8,645.35 699.6,642.75 708.3,636.65 718.6,633.18 729,631.36 739.4,629.9 749.8,629.83 762.5,629.09 783.3,631.02 805.8,632.47 816.2,636.16 826.6,639.95 843.9,645.32 861.3,646.46 871.6,646.53 885.5,643.18 895.9,645.17 908.9,644.86 920.2,640.31 930.5,633 939.2,628.09 947.9,628.48 956.5,621.33 965.2,617.45 979,618.04 991.2,615.59 1000.4,613.91 1010.8,611.14 1019.4,612.79 1031.6,617.25 1045.4,618.88 1057.6,619.66 1067.9,624.18 1080.1,628.67 1095.7,627.93 1109.5,631.18 1121.6,632.36 1135.5,634.31 1151.1,634.44 1163.2,635.49 1173.6,635.93 1185.7,634.73 1197.9,633.51 1211.7,634.73 1223.8,636.12 1236,638.14 1240,640.14 1244.6,642.49 1250.5,646.12 1261,649.28 1275.1,650.84 1285.6,655.56 1297.9,663.07 1310.2,670.1 1320.7,676.07 1331.2,679.21 1341.7,678.82 1345.2,678.6 1354,676.11 1362.8,673.33 1366.3,671.57 1378.6,665.21 1380.3,664.38 1389.1,661.81 1397.9,659.16 1403.1,658.05 1415.4,655.52 1424.2,652.34 1425.9,651.65 1434.7,646.09 1438.2,643.91 1443.5,640.33 1450.5,635.7 1454,634.09 1461,630.86 1464.5,629.52 1471.5,626.75 1473.3,625.09 1480.3,618.37 1485.6,612.35 1492.6,609.69 1501,609.09" stroke="rgb(233,226,24)" stroke-width="1.08" fill="none" stroke-linejoin="round"/>
<polyline points="5,640.6 25,639 50,638.1 55,637.5 66.6,636.1 81.6,633.5 91.6,633.5 100,636.1 113.3,634.5 120,635.6 126.6,639 136.6,644 150,646.5 158.2,650.1 166.6,656.5 176.6,662.3 191.5,664.8 208.2,665.6 224.9,662.3 240,658.5 250.4,653.3 266,646.4 283.3,642.1 297.2,638.6 309.3,633.4 326.6,630.8 338.7,628.2 349.1,627.9 357.8,633.4 368.2,640.3 378.6,642.1 387.2,641.2 399.4,636 409.8,633.1 421.9,632.5 434,634.8 439.2,634.55 444.4,633.3 456.5,628.1 468.7,625.1 482.5,625.5 490,624.6 496.9,622 505.6,623.8 512.5,624.33 516,624.6 521.2,626.72 524.6,628.1 528.1,630.22 536.8,635.5 550.6,636.2 566.2,638 576.6,635.9 590.5,632.8 602.6,634.1 618.2,635 632,636.2 642.4,639 651.1,641.1 663.2,639 680.5,638.5 691.8,645.4 699.6,642.8 708.3,636.7 718.6,633.3 729,631.5 739.4,630.3 749.8,630.3 762.5,629.5 783.3,631.5 805.8,632.9 816.2,636.4 826.6,639.95 843.9,645.2 861.3,646.1 871.6,646.1 885.5,642.9 895.9,644.7 908.9,644.3 920.2,640 930.5,633 939.2,628.1 947.9,628.6 956.5,621.7 965.2,618.2 979,619.1 991.2,617 1000.4,615.6 1010.8,613 1019.4,614.7 1031.6,619.1 1045.4,620.8 1057.6,621.7 1067.9,626 1080.1,630.3 1095.7,629.5 1109.5,632.6 1121.6,633.8 1135.5,635.5 1151.1,635.5 1163.2,636.4 1173.6,636.7 1185.7,635.5 1197.9,634.3 1211.7,635.5 1223.8,636.7 1236,638.5 1240,640.36 1244.6,642.5 1250.5,646 1261,649 1275.1,650.4 1285.6,654.8 1297.9,661.8 1310.2,668 1320.7,673.2 1331.2,675.9 1341.7,675.23 1345.2,675 1354,672.35 1362.8,669.7 1366.3,667.94 1378.6,661.75 1380.3,660.9 1389.1,658.3 1397.9,655.7 1403.1,654.66 1415.4,652.2 1424.2,649.27 1425.9,648.7 1434.7,643.62 1438.2,641.6 1443.5,638.24 1450.5,633.8 1454,632.33 1461,629.4 1464.5,628.23 1471.5,625.9 1473.3,624.28 1480.3,618 1485.6,612.35 1492.6,609.9 1501,609.5" stroke="rgb(237,237,0)" stroke-width="1.08" fill="none" stroke-linejoin="round"/>
</g>
<g clip-path="url(#c5)">
<rect x="5" y="788.2" width="3.3" height="10.59" fill="#ff0000"/>
<rect x="10.25" y="788.2" width="5.85" height="10.06" fill="#ff0000"/>
<rect x="18.04" y="788.2" width="5.85" height="10.06" fill="#ff0000"/>
<rect x="25.84" y="788.2" width="5.85" height="8.14" fill="#ff0000"/>
<rect x="33.63" y="788.2" width="5.85" height="8.14" fill="#ff0000"/>
<rect x="41.43" y="788.2" width="5.85" height="7.35" fill="#ff0000"/>
<rect x="49.23" y="788.2" width="5.85" height="7.35" fill="#ff0000"/>
<rect x="57.02" y="788.2" width="5.85" height="2.98" fill="#ff0000"/>
<rect x="64.82" y="788.2" width="5.85" height="2.98" fill="#ff0000"/>
<rect x="72.61" y="786.62" width="5.85" height="1.58" fill="#32cd32"/>
<rect x="80.41" y="786.62" width="5.85" height="1.58" fill="#32cd32"/>
<rect x="88.21" y="788.2" width="5.85" height="1.92" fill="#8b0000"/>
<rect x="96" y="788.2" width="5.85" height="1.92" fill="#8b0000"/>
<rect x="119.39" y="788.2" width="5.85" height="12.6" fill="#8b0000"/>
<rect x="127.19" y="788.2" width="5.85" height="12.6" fill="#8b0000"/>
<rect x="134.98" y="788.2" width="5.85" height="15.75" fill="#8b0000"/>
<rect x="142.78" y="788.2" width="5.85" height="15.75" fill="#8b0000"/>
<rect x="150.57" y="788.2" width="5.85" height="26.77" fill="#8b0000"/>
<rect x="158.37" y="788.2" width="5.85" height="26.77" fill="#8b0000"/>
<rect x="166.17" y="788.2" width="5.85" height="32.81" fill="#8b0000"/>
<rect x="173.96" y="788.2" width="5.85" height="32.81" fill="#8b0000"/>
<rect x="181.76" y="788.2" width="5.85" height="38.76" fill="#8b0000"/>
<rect x="189.55" y="788.2" width="5.85" height="38.76" fill="#8b0000"/>
<rect x="197.35" y="788.2" width="5.85" height="36.4" fill="#ff0000"/>
<rect x="205.15" y="788.2" width="5.85" height="36.4" fill="#ff0000"/>
<rect x="212.94" y="788.2" width="5.85" height="31.76" fill="#ff0000"/>
<rect x="220.74" y="788.2" width="5.85" height="31.76" fill="#ff0000"/>
<rect x="228.53" y="788.2" width="5.85" height="24.41" fill="#ff0000"/>
<rect x="236.33" y="788.2" width="5.85" height="24.41" fill="#ff0000"/>
<rect x="244.13" y="788.2" width="5.85" height="16.54" fill="#ff0000"/>
<rect x="251.92" y="788.2" width="5.85" height="16.54" fill="#ff0000"/>
<rect x="259.72" y="788.2" width="5.85" height="5.77" fill="#ff0000"/>
<rect x="267.51" y="788.2" width="5.85" height="5.77" fill="#ff0000"/>
<rect x="275.31" y="786.71" width="5.85" height="1.49" fill="#32cd32"/>
<rect x="283.11" y="786.71" width="5.85" height="1.49" fill="#32cd32"/>
<rect x="290.9" y="783.12" width="5.85" height="5.08" fill="#32cd32"/>
<rect x="298.7" y="783.12" width="5.85" height="5.08" fill="#32cd32"/>
<rect x="306.49" y="777.26" width="5.85" height="10.94" fill="#32cd32"/>
<rect x="314.29" y="777.26" width="5.85" height="10.94" fill="#32cd32"/>
<rect x="322.09" y="769.21" width="5.85" height="18.99" fill="#32cd32"/>
<rect x="329.88" y="769.21" width="5.85" height="18.99" fill="#32cd32"/>
<rect x="337.68" y="769.21" width="5.85" height="18.99" fill="#32cd32"/>
<rect x="345.47" y="769.21" width="5.85" height="18.99" fill="#32cd32"/>
<rect x="353.27" y="783.3" width="5.85" height="4.9" fill="#006400"/>
<rect x="361.07" y="783.3" width="5.85" height="4.9" fill="#006400"/>
<rect x="368.86" y="786.28" width="5.85" height="1.92" fill="#006400"/>
<rect x="376.66" y="786.28" width="5.85" height="1.92" fill="#006400"/>
<rect x="384.45" y="779.98" width="5.85" height="8.23" fill="#32cd32"/>
<rect x="392.25" y="779.98" width="5.85" height="8.23" fill="#32cd32"/>
<rect x="400.05" y="774.99" width="5.85" height="13.21" fill="#32cd32"/>
<rect x="407.84" y="774.99" width="5.85" height="13.21" fill="#32cd32"/>
<rect x="415.64" y="777.53" width="5.85" height="10.67" fill="#006400"/>
<rect x="423.43" y="777.53" width="5.85" height="10.67" fill="#006400"/>
<rect x="431.23" y="774.2" width="5.85" height="14" fill="#32cd32"/>
<rect x="439.03" y="774.2" width="5.85" height="14" fill="#32cd32"/>
<rect x="446.82" y="769.21" width="5.85" height="18.99" fill="#32cd32"/>
<rect x="454.62" y="769.21" width="5.85" height="18.99" fill="#32cd32"/>
<rect x="462.41" y="769.21" width="5.85" height="18.99" fill="#32cd32"/>
<rect x="470.21" y="769.21" width="5.85" height="18.99" fill="#32cd32"/>
<rect x="478.01" y="769.74" width="5.85" height="18.46" fill="#006400"/>
<rect x="485.8" y="769.74" width="5.85" height="18.46" fill="#006400"/>
<rect x="493.6" y="771.23" width="5.85" height="16.98" fill="#006400"/>
<rect x="501.39" y="771.23" width="5.85" height="16.98" fill="#006400"/>
<rect x="509.19" y="775.16" width="5.85" height="13.04" fill="#006400"/>
<rect x="516.99" y="775.16" width="5.85" height="13.04" fill="#006400"/>
<rect x="524.78" y="788.2" width="5.85" height="1.14" fill="#8b0000"/>
<rect x="532.58" y="788.2" width="5.85" height="1.14" fill="#8b0000"/>
<rect x="571.56" y="786.89" width="5.85" height="1.31" fill="#006400"/>
<rect x="579.35" y="786.89" width="5.85" height="1.31" fill="#006400"/>
<rect x="587.15" y="786.62" width="5.85" height="1.58" fill="#006400"/>
<rect x="594.95" y="786.62" width="5.85" height="1.58" fill="#006400"/>
<rect x="602.74" y="786.89" width="5.85" height="1.31" fill="#006400"/>
<rect x="610.54" y="786.89" width="5.85" height="1.31" fill="#006400"/>
<rect x="618.33" y="787.33" width="5.85" height="0.88" fill="#006400"/>
<rect x="626.13" y="787.33" width="5.85" height="0.88" fill="#006400"/>
<rect x="633.93" y="788.2" width="5.85" height="5.08" fill="#8b0000"/>
<rect x="641.72" y="788.2" width="5.85" height="5.08" fill="#8b0000"/>
<rect x="649.52" y="788.2" width="5.85" height="2.62" fill="#ff0000"/>
<rect x="657.31" y="788.2" width="5.85" height="2.62" fill="#ff0000"/>
<rect x="665.11" y="788.2" width="5.85" height="3.76" fill="#ff0000"/>
<rect x="672.91" y="788.2" width="5.85" height="3.76" fill="#ff0000"/>
<rect x="680.7" y="788.2" width="5.85" height="11.81" fill="#8b0000"/>
<rect x="688.5" y="788.2" width="5.85" height="11.81" fill="#8b0000"/>
<rect x="696.29" y="787.24" width="5.85" height="0.96" fill="#006400"/>
<rect x="704.09" y="787.24" width="5.85" height="0.96" fill="#006400"/>
<rect x="711.89" y="782.51" width="5.85" height="5.69" fill="#32cd32"/>
<rect x="719.68" y="782.51" width="5.85" height="5.69" fill="#32cd32"/>
<rect x="727.48" y="778.31" width="5.85" height="9.89" fill="#32cd32"/>
<rect x="735.27" y="778.31" width="5.85" height="9.89" fill="#32cd32"/>
<rect x="743.07" y="780.24" width="5.85" height="7.96" fill="#006400"/>
<rect x="750.87" y="780.24" width="5.85" height="7.96" fill="#006400"/>
<rect x="758.66" y="781.2" width="5.85" height="7" fill="#006400"/>
<rect x="766.46" y="781.2" width="5.85" height="7" fill="#006400"/>
<rect x="774.25" y="782.69" width="5.85" height="5.51" fill="#006400"/>
<rect x="782.05" y="782.69" width="5.85" height="5.51" fill="#006400"/>
<rect x="789.85" y="784.96" width="5.85" height="3.24" fill="#006400"/>
<rect x="797.64" y="784.96" width="5.85" height="3.24" fill="#006400"/>
<rect x="805.44" y="788.2" width="5.85" height="3.06" fill="#8b0000"/>
<rect x="813.23" y="788.2" width="5.85" height="3.06" fill="#8b0000"/>
<rect x="821.03" y="788.2" width="5.85" height="9.27" fill="#8b0000"/>
<rect x="828.83" y="788.2" width="5.85" height="9.27" fill="#8b0000"/>
<rect x="836.62" y="788.2" width="5.85" height="12.42" fill="#8b0000"/>
<rect x="844.42" y="788.2" width="5.85" height="12.42" fill="#8b0000"/>
<rect x="852.21" y="788.2" width="5.85" height="15.14" fill="#8b0000"/>
<rect x="860.01" y="788.2" width="5.85" height="15.14" fill="#8b0000"/>
<rect x="867.81" y="788.2" width="5.85" height="10.85" fill="#ff0000"/>
<rect x="875.6" y="788.2" width="5.85" height="10.85" fill="#ff0000"/>
<rect x="883.4" y="788.2" width="5.85" height="12.6" fill="#8b0000"/>
<rect x="891.19" y="788.2" width="5.85" height="12.6" fill="#8b0000"/>
<rect x="898.99" y="788.2" width="5.85" height="11.81" fill="#ff0000"/>
<rect x="906.79" y="788.2" width="5.85" height="11.81" fill="#ff0000"/>
<rect x="914.58" y="785.58" width="5.85" height="2.62" fill="#32cd32"/>
<rect x="922.38" y="785.58" width="5.85" height="2.62" fill="#32cd32"/>
<rect x="930.17" y="776.48" width="5.85" height="11.73" fill="#32cd32"/>
<rect x="937.97" y="776.48" width="5.85" height="11.73" fill="#32cd32"/>
<rect x="945.77" y="765.1" width="5.85" height="23.1" fill="#32cd32"/>
<rect x="953.56" y="765.1" width="5.85" height="23.1" fill="#32cd32"/>
<rect x="961.36" y="765.1" width="5.85" height="23.1" fill="#006400"/>
<rect x="969.15" y="765.1" width="5.85" height="23.1" fill="#006400"/>
<rect x="976.95" y="761.43" width="5.85" height="26.77" fill="#32cd32"/>
<rect x="984.75" y="761.43" width="5.85" height="26.77" fill="#32cd32"/>
<rect x="992.54" y="758.89" width="5.85" height="29.31" fill="#32cd32"/>
<rect x="1000.34" y="758.89" width="5.85" height="29.31" fill="#32cd32"/>
<rect x="1008.13" y="763.18" width="5.85" height="25.02" fill="#006400"/>
<rect x="1015.93" y="763.18" width="5.85" height="25.02" fill="#006400"/>
<rect x="1023.73" y="770.18" width="5.85" height="18.02" fill="#006400"/>
<rect x="1031.52" y="770.18" width="5.85" height="18.02" fill="#006400"/>
<rect x="1039.32" y="771.58" width="5.85" height="16.62" fill="#006400"/>
<rect x="1047.11" y="771.58" width="5.85" height="16.62" fill="#006400"/>
<rect x="1054.91" y="780.85" width="5.85" height="7.35" fill="#006400"/>
<rect x="1062.71" y="780.85" width="5.85" height="7.35" fill="#006400"/>
<rect x="1070.5" y="786.36" width="5.85" height="1.84" fill="#006400"/>
<rect x="1078.3" y="786.36" width="5.85" height="1.84" fill="#006400"/>
<rect x="1086.09" y="783.74" width="5.85" height="4.46" fill="#32cd32"/>
<rect x="1093.89" y="783.74" width="5.85" height="4.46" fill="#32cd32"/>
<rect x="1101.69" y="788.2" width="5.85" height="2.19" fill="#8b0000"/>
<rect x="1109.48" y="788.2" width="5.85" height="2.19" fill="#8b0000"/>
<rect x="1117.28" y="788.2" width="5.85" height="5.6" fill="#8b0000"/>
<rect x="1125.07" y="788.2" width="5.85" height="5.6" fill="#8b0000"/>
<rect x="1132.87" y="788.2" width="5.85" height="5.6" fill="#ff0000"/>
<rect x="1140.67" y="788.2" width="5.85" height="5.6" fill="#ff0000"/>
<rect x="1148.46" y="788.2" width="5.85" height="8.23" fill="#8b0000"/>
<rect x="1156.26" y="788.2" width="5.85" height="8.23" fill="#8b0000"/>
<rect x="1164.05" y="788.2" width="5.85" height="8.92" fill="#8b0000"/>
<rect x="1171.85" y="788.2" width="5.85" height="8.92" fill="#8b0000"/>
<rect x="1179.65" y="788.2" width="5.85" height="5.6" fill="#ff0000"/>
<rect x="1187.44" y="788.2" width="5.85" height="5.6" fill="#ff0000"/>
<rect x="1195.24" y="788.2" width="5.85" height="5.6" fill="#8b0000"/>
<rect x="1203.03" y="788.2" width="5.85" height="5.6" fill="#8b0000"/>
<rect x="1210.83" y="788.2" width="5.85" height="6.48" fill="#8b0000"/>
<rect x="1218.63" y="788.2" width="5.85" height="6.48" fill="#8b0000"/>
<rect x="1226.42" y="788.2" width="5.85" height="9.98" fill="#8b0000"/>
<rect x="1234.22" y="788.2" width="5.85" height="9.98" fill="#8b0000"/>
<rect x="1242.01" y="788.2" width="5.85" height="19.34" fill="#8b0000"/>
<rect x="1249.81" y="788.2" width="5.85" height="19.34" fill="#8b0000"/>
<rect x="1257.61" y="788.2" width="5.85" height="22.66" fill="#8b0000"/>
<rect x="1265.4" y="788.2" width="5.85" height="22.66" fill="#8b0000"/>
<rect x="1273.2" y="788.2" width="5.85" height="31.06" fill="#8b0000"/>
<rect x="1280.99" y="788.2" width="5.85" height="31.06" fill="#8b0000"/>
<rect x="1288.79" y="788.2" width="5.85" height="42.17" fill="#8b0000"/>
<rect x="1296.59" y="788.2" width="5.85" height="42.17" fill="#8b0000"/>
<rect x="1304.38" y="788.2" width="5.85" height="48.39" fill="#8b0000"/>
<rect x="1312.18" y="788.2" width="5.85" height="48.39" fill="#8b0000"/>
<rect x="1319.97" y="788.2" width="5.85" height="53.29" fill="#8b0000"/>
<rect x="1327.77" y="788.2" width="5.85" height="53.29" fill="#8b0000"/>
<rect x="1335.57" y="788.2" width="5.85" height="48.39" fill="#ff0000"/>
<rect x="1343.36" y="788.2" width="5.85" height="48.39" fill="#ff0000"/>
<rect x="1351.16" y="788.2" width="5.85" height="38.85" fill="#ff0000"/>
<rect x="1358.95" y="788.2" width="5.85" height="38.85" fill="#ff0000"/>
<rect x="1366.75" y="788.2" width="5.85" height="25.11" fill="#ff0000"/>
<rect x="1374.55" y="788.2" width="5.85" height="25.11" fill="#ff0000"/>
<rect x="1382.34" y="788.2" width="5.85" height="20.21" fill="#ff0000"/>
<rect x="1390.14" y="788.2" width="5.85" height="20.21" fill="#ff0000"/>
<rect x="1397.93" y="788.2" width="5.85" height="14.26" fill="#ff0000"/>
<rect x="1405.73" y="788.2" width="5.85" height="14.26" fill="#ff0000"/>
<rect x="1413.53" y="788.2" width="5.85" height="7.26" fill="#ff0000"/>
<rect x="1421.32" y="788.2" width="5.85" height="7.26" fill="#ff0000"/>
<rect x="1429.12" y="780.24" width="5.85" height="7.96" fill="#32cd32"/>
<rect x="1436.91" y="780.24" width="5.85" height="7.96" fill="#32cd32"/>
<rect x="1444.71" y="767.55" width="5.85" height="20.65" fill="#32cd32"/>
<rect x="1452.51" y="767.55" width="5.85" height="20.65" fill="#32cd32"/>
<rect x="1460.3" y="760.73" width="5.85" height="27.48" fill="#32cd32"/>
<rect x="1468.1" y="760.73" width="5.85" height="27.48" fill="#32cd32"/>
<rect x="1475.89" y="744.45" width="5.85" height="43.75" fill="#32cd32"/>
<rect x="1483.69" y="744.45" width="5.85" height="43.75" fill="#32cd32"/>
<rect x="1491.49" y="746.11" width="5.85" height="42.09" fill="#006400"/>
<rect x="1499.28" y="746.11" width="1.72" height="42.09" fill="#006400"/>
<path d="M5,788.2 H1501" stroke="#e2dcc8" stroke-width="1.2" stroke-dasharray="2.9 2.95" fill="none"/>
<polyline points="5,797.92 25,795.68 50,794.04 55,793.72 66.6,789.79 81.6,786.33 91.6,786.33 100,787.92 113.3,786.33 120,787.45 126.6,793.72 136.6,800.73 150,805.4 158.2,812.42 166.6,822.51 176.6,833.45 191.5,843.55 208.2,848.98 224.9,848.98 240,846.17 250.4,843.74 266,832.43 283.3,821.11 297.2,813.82 309.3,803.25 326.6,792.69 338.7,787.83 349.1,787.36 357.8,793.53 368.2,801.66 378.6,804.56 387.2,801.66 399.4,795.12 409.8,789.04 421.9,788.39 434,790.26 439.2,787.83 444.4,783.15 456.5,776.7 468.7,771.28 482.5,770.15 490,767.72 496.9,763.98 505.6,764.54 512.5,762.86 516,764.18 521.2,766.13 524.6,768.53 528.1,771 536.8,779.88 550.6,781.19 566.2,783.9 576.6,782.31 590.5,777.45 602.6,779.88 618.2,780.72 632,783.15 642.4,787.17 651.1,790.44 663.2,788.76 680.5,788.76 691.8,795.31 699.6,792.88 708.3,787.17 718.6,783.15 729,781.19 739.4,776.7 749.8,775.86 762.5,775.86 783.3,776.79 805.8,778.76 816.2,784.46 826.6,790.86 843.9,797.27 861.3,801.29 871.6,802.13 885.5,797.27 895.9,801.29 908.9,802.13 920.2,794.84 930.5,784.37 939.2,779.6 947.9,778.76 956.5,769.03 965.2,760.9 979,757.72 991.2,751.27 1000.4,746.41 1010.8,741.82 1019.4,742.76 1031.6,747.62 1045.4,748.28 1057.6,747.62 1067.9,754.45 1080.1,760.9 1095.7,760.9 1109.5,765.76 1121.6,766.6 1135.5,771.46 1151.1,773.05 1163.2,775.86 1173.6,777.92 1185.7,776.79 1197.9,775.48 1211.7,776.79 1223.8,780.35 1236,784.93 1240,788.39 1244.6,793.06 1250.5,798.11 1261,802.97 1275.1,806.25 1285.6,814.47 1297.9,827.56 1310.2,844.02 1320.7,858.79 1331.2,866.93 1341.7,869.92 1345.2,869.79 1354,869.45 1362.8,865.3 1366.3,863.65 1378.6,855.52 1380.3,855.11 1389.1,853 1397.9,849.94 1403.1,848.13 1415.4,844.86 1424.2,839.06 1425.9,836.94 1434.7,825.97 1438.2,822.07 1443.5,816.16 1450.5,809.55 1454,806.25 1461,799.7 1464.5,796.43 1471.5,788.62 1473.3,786.61 1480.3,775.11 1485.6,765.06 1492.6,760.06 1501,757.16" stroke="rgb(0,177,247)" stroke-width="1.08" fill="none" stroke-linejoin="round"/>
<polyline points="5,797.72 25,795.5 50,793.88 55,793.55 66.6,789.71 81.6,786.28 91.6,786.28 100,787.9 113.3,786.31 120,787.43 126.6,793.6 136.6,800.53 150,805.13 158.2,812.03 166.6,821.99 176.6,832.75 191.5,842.6 208.2,847.87 224.9,847.77 240,844.94 250.4,842.43 266,831.27 283.3,820.2 297.2,813.03 309.3,802.65 326.6,792.35 338.7,787.57 349.1,787.11 357.8,793.24 368.2,801.32 378.6,804.18 387.2,801.35 399.4,794.86 409.8,788.89 421.9,788.24 434,790.12 439.2,787.76 444.4,783.2 456.5,776.8 468.7,771.46 482.5,770.39 490,768.01 496.9,764.31 505.6,764.91 512.5,763.3 516,764.58 521.2,766.53 524.6,768.89 528.1,771.34 536.8,780.1 550.6,781.39 566.2,784.07 576.6,782.46 590.5,777.67 602.6,780.06 618.2,780.9 632,783.29 642.4,787.26 651.1,790.49 663.2,788.8 680.5,788.79 691.8,795.33 699.6,792.9 708.3,787.19 718.6,783.2 729,781.25 739.4,776.87 749.8,776.05 762.5,776.03 783.3,776.99 805.8,778.94 816.2,784.56 826.6,790.86 843.9,797.22 861.3,801.14 871.6,801.95 885.5,797.15 895.9,801.1 908.9,801.9 920.2,794.71 930.5,784.37 939.2,779.6 947.9,778.8 956.5,769.19 965.2,761.21 979,758.16 991.2,751.85 1000.4,747.11 1010.8,742.6 1019.4,743.55 1031.6,748.39 1045.4,749.07 1057.6,748.47 1067.9,755.2 1080.1,761.58 1095.7,761.55 1109.5,766.35 1121.6,767.2 1135.5,771.96 1151.1,773.5 1163.2,776.24 1173.6,778.24 1185.7,777.11 1197.9,775.81 1211.7,777.11 1223.8,780.59 1236,785.08 1240,788.48 1244.6,793.06 1250.5,798.06 1261,802.85 1275.1,806.06 1285.6,814.16 1297.9,827.04 1310.2,843.15 1320.7,857.6 1331.2,865.55 1341.7,868.43 1345.2,868.29 1354,867.89 1362.8,863.79 1366.3,862.14 1378.6,854.09 1380.3,853.66 1389.1,851.54 1397.9,848.5 1403.1,846.72 1415.4,843.48 1424.2,837.79 1425.9,835.72 1434.7,824.95 1438.2,821.11 1443.5,815.29 1450.5,808.76 1454,805.52 1461,799.09 1464.5,795.89 1471.5,788.27 1473.3,786.27 1480.3,774.96 1485.6,765.06 1492.6,760.14 1501,757.33" stroke="rgb(20,174,244)" stroke-width="1.08" fill="none" stroke-linejoin="round"/>
<polyline points="5,797.49 25,795.3 50,793.71 55,793.37 66.6,789.62 81.6,786.23 91.6,786.23 100,787.88 113.3,786.29 120,787.41 126.6,793.47 136.6,800.32 150,804.84 158.2,811.61 166.6,821.43 176.6,832 191.5,841.58 208.2,846.69 224.9,846.48 240,843.63 250.4,841.03 266,830.04 283.3,819.22 297.2,812.2 309.3,802.01 326.6,791.99 338.7,787.29 349.1,786.84 357.8,792.94 368.2,800.96 378.6,803.78 387.2,801.02 399.4,794.59 409.8,788.73 421.9,788.09 434,789.97 439.2,787.69 444.4,783.25 456.5,776.91 468.7,771.66 482.5,770.64 490,768.31 496.9,764.66 505.6,765.3 512.5,763.76 516,765 521.2,766.96 524.6,769.28 528.1,771.72 536.8,780.34 550.6,781.6 566.2,784.24 576.6,782.63 590.5,777.9 602.6,780.25 618.2,781.09 632,783.43 642.4,787.36 651.1,790.54 663.2,788.84 680.5,788.81 691.8,795.35 699.6,792.92 708.3,787.22 718.6,783.25 729,781.31 739.4,777.04 749.8,776.26 762.5,776.21 783.3,777.21 805.8,779.13 816.2,784.67 826.6,790.86 843.9,797.17 861.3,800.98 871.6,801.76 885.5,797.03 895.9,800.89 908.9,801.65 920.2,794.58 930.5,784.37 939.2,779.61 947.9,778.86 956.5,769.35 965.2,761.54 979,758.63 991.2,752.48 1000.4,747.86 1010.8,743.42 1019.4,744.4 1031.6,749.21 1045.4,749.93 1057.6,749.38 1067.9,756.01 1080.1,762.3 1095.7,762.25 1109.5,766.98 1121.6,767.84 1135.5,772.49 1151.1,773.97 1163.2,776.64 1173.6,778.58 1185.7,777.46 1197.9,776.16 1211.7,777.46 1223.8,780.85 1236,785.23 1240,788.58 1244.6,793.07 1250.5,798 1261,802.73 1275.1,805.87 1285.6,813.82 1297.9,826.47 1310.2,842.21 1320.7,856.32 1331.2,864.08 1341.7,866.83 1345.2,866.69 1354,866.21 1362.8,862.18 1366.3,860.53 1378.6,852.55 1380.3,852.12 1389.1,849.98 1397.9,846.97 1403.1,845.22 1415.4,842.01 1424.2,836.42 1425.9,834.4 1434.7,823.85 1438.2,820.08 1443.5,814.35 1450.5,807.91 1454,804.74 1461,798.45 1464.5,795.32 1471.5,787.89 1473.3,785.91 1480.3,774.79 1485.6,765.06 1492.6,760.24 1501,757.51" stroke="rgb(40,172,240)" stroke-width="1.08" fill="none" stroke-linejoin="round"/>
<polyline points="5,797.25 25,795.09 50,793.53 55,793.18 66.6,789.53 81.6,786.17 91.6,786.17 100,787.85 113.3,786.27 120,787.38 126.6,793.33 136.6,800.1 150,804.53 158.2,811.16 166.6,820.83 176.6,831.2 191.5,840.49 208.2,845.43 224.9,845.11 240,842.23 250.4,839.54 266,828.73 283.3,818.18 297.2,811.3 309.3,801.33 326.6,791.61 338.7,787 349.1,786.55 357.8,792.62 368.2,800.58 378.6,803.35 387.2,800.66 399.4,794.29 409.8,788.57 421.9,787.92 434,789.82 439.2,787.62 444.4,783.31 456.5,777.02 468.7,771.87 482.5,770.9 490,768.64 496.9,765.03 505.6,765.71 512.5,764.25 516,765.46 521.2,767.42 524.6,769.7 528.1,772.12 536.8,780.59 550.6,781.83 566.2,784.43 576.6,782.81 590.5,778.15 602.6,780.45 618.2,781.29 632,783.59 642.4,787.46 651.1,790.6 663.2,788.89 680.5,788.84 691.8,795.37 699.6,792.94 708.3,787.24 718.6,783.31 729,781.37 739.4,777.23 749.8,776.48 762.5,776.4 783.3,777.43 805.8,779.33 816.2,784.78 826.6,790.86 843.9,797.11 861.3,800.8 871.6,801.56 885.5,796.89 895.9,800.67 908.9,801.38 920.2,794.43 930.5,784.37 939.2,779.62 947.9,778.91 956.5,769.53 965.2,761.9 979,759.14 991.2,753.15 1000.4,748.66 1010.8,744.3 1019.4,745.3 1031.6,750.09 1045.4,750.84 1057.6,750.34 1067.9,756.88 1080.1,763.07 1095.7,763 1109.5,767.65 1121.6,768.53 1135.5,773.05 1151.1,774.47 1163.2,777.07 1173.6,778.94 1185.7,777.82 1197.9,776.53 1211.7,777.82 1223.8,781.12 1236,785.4 1240,788.68 1244.6,793.08 1250.5,797.95 1261,802.59 1275.1,805.66 1285.6,813.46 1297.9,825.87 1310.2,841.22 1320.7,854.96 1331.2,862.52 1341.7,865.13 1345.2,864.99 1354,864.43 1362.8,860.46 1366.3,858.81 1378.6,850.92 1380.3,850.47 1389.1,848.32 1397.9,845.33 1403.1,843.61 1415.4,840.44 1424.2,834.96 1425.9,833.01 1434.7,822.68 1438.2,818.99 1443.5,813.36 1450.5,807.01 1454,803.91 1461,797.76 1464.5,794.71 1471.5,787.49 1473.3,785.53 1480.3,774.61 1485.6,765.06 1492.6,760.34 1501,757.7" stroke="rgb(61,169,237)" stroke-width="1.08" fill="none" stroke-linejoin="round"/>
<polyline points="5,797 25,794.86 50,793.34 55,792.98 66.6,789.43 81.6,786.12 91.6,786.12 100,787.83 113.3,786.25 120,787.36 126.6,793.18 136.6,799.86 150,804.2 158.2,810.69 166.6,820.2 176.6,830.35 191.5,839.34 208.2,844.09 224.9,843.65 240,840.74 250.4,837.96 266,827.34 283.3,817.07 297.2,810.35 309.3,800.61 326.6,791.2 338.7,786.69 349.1,786.25 357.8,792.27 368.2,800.17 378.6,802.89 387.2,800.29 399.4,793.98 409.8,788.39 421.9,787.74 434,789.66 439.2,787.54 444.4,783.37 456.5,777.14 468.7,772.09 482.5,771.18 490,768.98 496.9,765.43 505.6,766.15 512.5,764.78 516,765.94 521.2,767.9 524.6,770.14 528.1,772.54 536.8,780.85 550.6,782.07 566.2,784.63 576.6,782.99 590.5,778.41 602.6,780.67 618.2,781.51 632,783.75 642.4,787.57 651.1,790.66 663.2,788.93 680.5,788.87 691.8,795.4 699.6,792.97 708.3,787.27 718.6,783.37 729,781.44 739.4,777.44 749.8,776.71 762.5,776.61 783.3,777.68 805.8,779.55 816.2,784.9 826.6,790.86 843.9,797.06 861.3,800.62 871.6,801.34 885.5,796.75 895.9,800.43 908.9,801.1 920.2,794.28 930.5,784.37 939.2,779.62 947.9,778.97 956.5,769.71 965.2,762.28 979,759.67 991.2,753.86 1000.4,749.51 1010.8,745.23 1019.4,746.26 1031.6,751.02 1045.4,751.81 1057.6,751.37 1067.9,757.79 1080.1,763.89 1095.7,763.79 1109.5,768.37 1121.6,769.25 1135.5,773.64 1151.1,775.01 1163.2,777.53 1173.6,779.33 1185.7,778.21 1197.9,776.93 1211.7,778.21 1223.8,781.42 1236,785.58 1240,788.8 1244.6,793.08 1250.5,797.88 1261,802.45 1275.1,805.44 1285.6,813.08 1297.9,825.24 1310.2,840.17 1320.7,853.52 1331.2,860.85 1341.7,863.33 1345.2,863.18 1354,862.54 1362.8,858.63 1366.3,856.99 1378.6,849.19 1380.3,848.72 1389.1,846.56 1397.9,843.6 1403.1,841.91 1415.4,838.78 1424.2,833.42 1425.9,831.52 1434.7,821.44 1438.2,817.83 1443.5,812.31 1450.5,806.05 1454,803.03 1461,797.03 1464.5,794.07 1471.5,787.06 1473.3,785.12 1480.3,774.43 1485.6,765.06 1492.6,760.44 1501,757.91" stroke="rgb(81,166,233)" stroke-width="1.08" fill="none" stroke-linejoin="round"/>
<polyline points="5,796.73 25,794.63 50,793.14 55,792.77 66.6,789.32 81.6,786.05 91.6,786.05 100,787.8 113.3,786.23 120,787.33 126.6,793.03 136.6,799.61 150,803.85 158.2,810.19 166.6,819.53 176.6,829.45 191.5,838.12 208.2,842.68 224.9,842.11 240,839.17 250.4,836.29 266,825.87 283.3,815.9 297.2,809.35 309.3,799.84 326.6,790.77 338.7,786.36 349.1,785.93 357.8,791.91 368.2,799.73 378.6,802.41 387.2,799.89 399.4,793.65 409.8,788.2 421.9,787.56 434,789.48 439.2,787.46 444.4,783.43 456.5,777.27 468.7,772.33 482.5,771.48 490,769.34 496.9,765.85 505.6,766.61 512.5,765.33 516,766.45 521.2,768.41 524.6,770.61 528.1,772.98 536.8,781.14 550.6,782.33 566.2,784.85 576.6,783.19 590.5,778.69 602.6,780.9 618.2,781.74 632,783.93 642.4,787.69 651.1,790.72 663.2,788.99 680.5,788.9 691.8,795.43 699.6,793 708.3,787.29 718.6,783.43 729,781.52 739.4,777.65 749.8,776.96 762.5,776.82 783.3,777.93 805.8,779.77 816.2,785.03 826.6,790.86 843.9,796.99 861.3,800.43 871.6,801.11 885.5,796.6 895.9,800.19 908.9,800.8 920.2,794.11 930.5,784.37 939.2,779.63 947.9,779.03 956.5,769.91 965.2,762.67 979,760.24 991.2,754.61 1000.4,750.41 1010.8,746.22 1019.4,747.28 1031.6,752 1045.4,752.83 1057.6,752.45 1067.9,758.76 1080.1,764.76 1095.7,764.62 1109.5,769.12 1121.6,770.02 1135.5,774.27 1151.1,775.57 1163.2,778.01 1173.6,779.74 1185.7,778.62 1197.9,777.35 1211.7,778.62 1223.8,781.73 1236,785.77 1240,788.91 1244.6,793.09 1250.5,797.82 1261,802.3 1275.1,805.21 1285.6,812.68 1297.9,824.56 1310.2,839.05 1320.7,852 1331.2,859.1 1341.7,861.42 1345.2,861.27 1354,860.54 1362.8,856.71 1366.3,855.06 1378.6,847.36 1380.3,846.87 1389.1,844.7 1397.9,841.76 1403.1,840.11 1415.4,837.01 1424.2,831.78 1425.9,829.95 1434.7,820.13 1438.2,816.6 1443.5,811.2 1450.5,805.04 1454,802.1 1461,796.25 1464.5,793.38 1471.5,786.61 1473.3,784.69 1480.3,774.23 1485.6,765.06 1492.6,760.56 1501,758.12" stroke="rgb(102,163,230)" stroke-width="1.08" fill="none" stroke-linejoin="round"/>
<polyline points="5,796.45 25,794.38 50,792.92 55,792.54 66.6,789.21 81.6,785.99 91.6,785.99 100,787.77 113.3,786.2 120,787.3 126.6,792.86 136.6,799.34 150,803.48 158.2,809.67 166.6,818.83 176.6,828.51 191.5,836.83 208.2,841.19 224.9,840.49 240,837.51 250.4,834.53 266,824.32 283.3,814.67 297.2,808.3 309.3,799.03 326.6,790.32 338.7,786.01 349.1,785.59 357.8,791.52 368.2,799.28 378.6,801.9 387.2,799.47 399.4,793.31 409.8,788 421.9,787.36 434,789.3 439.2,787.37 444.4,783.49 456.5,777.4 468.7,772.58 482.5,771.8 490,769.73 496.9,766.29 505.6,767.1 512.5,765.92 516,766.99 521.2,768.95 524.6,771.1 528.1,773.45 536.8,781.44 550.6,782.59 566.2,785.07 576.6,783.4 590.5,778.98 602.6,781.14 618.2,781.98 632,784.11 642.4,787.81 651.1,790.79 663.2,789.04 680.5,788.93 691.8,795.46 699.6,793.02 708.3,787.32 718.6,783.49 729,781.59 739.4,777.87 749.8,777.22 762.5,777.05 783.3,778.2 805.8,780.01 816.2,785.16 826.6,790.86 843.9,796.93 861.3,800.22 871.6,800.87 885.5,796.44 895.9,799.93 908.9,800.49 920.2,793.94 930.5,784.37 939.2,779.64 947.9,779.1 956.5,770.12 965.2,763.09 979,760.83 991.2,755.4 1000.4,751.35 1010.8,747.26 1019.4,748.35 1031.6,753.04 1045.4,753.91 1057.6,753.59 1067.9,759.78 1080.1,765.67 1095.7,765.5 1109.5,769.92 1121.6,770.82 1135.5,774.94 1151.1,776.17 1163.2,778.52 1173.6,780.18 1185.7,779.05 1197.9,777.79 1211.7,779.05 1223.8,782.05 1236,785.97 1240,789.04 1244.6,793.1 1250.5,797.75 1261,802.14 1275.1,804.97 1285.6,812.26 1297.9,823.85 1310.2,837.88 1320.7,850.39 1331.2,857.25 1341.7,859.41 1345.2,859.26 1354,858.44 1362.8,854.67 1366.3,853.02 1378.6,845.42 1380.3,844.93 1389.1,842.74 1397.9,839.82 1403.1,838.21 1415.4,835.16 1424.2,830.06 1425.9,828.3 1434.7,818.75 1438.2,815.3 1443.5,810.02 1450.5,803.98 1454,801.11 1461,795.44 1464.5,792.66 1471.5,786.13 1473.3,784.24 1480.3,774.02 1485.6,765.06 1492.6,760.67 1501,758.35" stroke="rgb(123,159,227)" stroke-width="1.08" fill="none" stroke-linejoin="round"/>
<polyline points="5,796.16 25,794.12 50,792.7 55,792.31 66.6,789.1 81.6,785.92 91.6,785.92 100,787.74 113.3,786.18 120,787.27 126.6,792.69 136.6,799.06 150,803.1 158.2,809.11 166.6,818.08 176.6,827.51 191.5,835.48 208.2,839.63 224.9,838.78 240,835.77 250.4,832.67 266,822.69 283.3,813.38 297.2,807.18 309.3,798.18 326.6,789.84 338.7,785.65 349.1,785.23 357.8,791.12 368.2,798.8 378.6,801.36 387.2,799.03 399.4,792.94 409.8,787.79 421.9,787.16 434,789.1 439.2,787.28 444.4,783.56 456.5,777.54 468.7,772.84 482.5,772.13 490,770.13 496.9,766.75 505.6,767.62 512.5,766.53 516,767.56 521.2,769.52 524.6,771.61 528.1,773.95 536.8,781.75 550.6,782.88 566.2,785.31 576.6,783.62 590.5,779.29 602.6,781.39 618.2,782.23 632,784.3 642.4,787.94 651.1,790.85 663.2,789.09 680.5,788.97 691.8,795.49 699.6,793.05 708.3,787.35 718.6,783.56 729,781.67 739.4,778.11 749.8,777.5 762.5,777.29 783.3,778.48 805.8,780.27 816.2,785.31 826.6,790.86 843.9,796.86 861.3,800.01 871.6,800.62 885.5,796.27 895.9,799.65 908.9,800.16 920.2,793.76 930.5,784.37 939.2,779.65 947.9,779.17 956.5,770.34 965.2,763.54 979,761.46 991.2,756.24 1000.4,752.35 1010.8,748.36 1019.4,749.47 1031.6,754.13 1045.4,755.04 1057.6,754.79 1067.9,760.85 1080.1,766.64 1095.7,766.43 1109.5,770.75 1121.6,771.67 1135.5,775.64 1151.1,776.79 1163.2,779.06 1173.6,780.63 1185.7,779.51 1197.9,778.25 1211.7,779.51 1223.8,782.4 1236,786.18 1240,789.17 1244.6,793.11 1250.5,797.68 1261,801.97 1275.1,804.71 1285.6,811.81 1297.9,823.11 1310.2,836.64 1320.7,848.7 1331.2,855.3 1341.7,857.3 1345.2,857.14 1354,856.22 1362.8,852.53 1366.3,850.88 1378.6,843.39 1380.3,842.88 1389.1,840.67 1397.9,837.79 1403.1,836.21 1415.4,833.21 1424.2,828.25 1425.9,826.56 1434.7,817.3 1438.2,813.94 1443.5,808.79 1450.5,802.86 1454,800.08 1461,794.58 1464.5,791.9 1471.5,785.64 1473.3,783.76 1480.3,773.8 1485.6,765.06 1492.6,760.8 1501,758.59" stroke="rgb(144,157,224)" stroke-width="1.08" fill="none" stroke-linejoin="round"/>
<polyline points="5,795.85 25,793.84 50,792.46 55,792.06 66.6,788.98 81.6,785.85 91.6,785.85 100,787.71 113.3,786.15 120,787.24 126.6,792.51 136.6,798.77 150,802.69 158.2,808.53 166.6,817.3 176.6,826.47 191.5,834.07 208.2,837.98 224.9,836.99 240,833.94 250.4,830.73 266,820.98 283.3,812.02 297.2,806.02 309.3,797.29 326.6,789.35 338.7,785.27 349.1,784.86 357.8,790.7 368.2,798.29 378.6,800.8 387.2,798.56 399.4,792.56 409.8,787.57 421.9,786.94 434,788.9 439.2,787.18 444.4,783.63 456.5,777.69 468.7,773.11 482.5,772.47 490,770.55 496.9,767.24 505.6,768.16 512.5,767.18 516,768.15 521.2,770.11 524.6,772.15 528.1,774.47 536.8,782.08 550.6,783.18 566.2,785.56 576.6,783.85 590.5,779.62 602.6,781.66 618.2,782.5 632,784.51 642.4,788.07 651.1,790.93 663.2,789.15 680.5,789 691.8,795.52 699.6,793.09 708.3,787.38 718.6,783.63 729,781.76 739.4,778.36 749.8,777.79 762.5,777.54 783.3,778.78 805.8,780.53 816.2,785.45 826.6,790.86 843.9,796.79 861.3,799.78 871.6,800.35 885.5,796.1 895.9,799.36 908.9,799.81 920.2,793.57 930.5,784.37 939.2,779.66 947.9,779.24 956.5,770.57 965.2,764 979,762.12 991.2,757.11 1000.4,753.39 1010.8,749.5 1019.4,750.65 1031.6,755.27 1045.4,756.23 1057.6,756.05 1067.9,761.98 1080.1,767.64 1095.7,767.4 1109.5,771.63 1121.6,772.56 1135.5,776.37 1151.1,777.45 1163.2,779.62 1173.6,781.11 1185.7,779.99 1197.9,778.74 1211.7,779.99 1223.8,782.76 1236,786.4 1240,789.31 1244.6,793.12 1250.5,797.6 1261,801.8 1275.1,804.44 1285.6,811.34 1297.9,822.32 1310.2,835.35 1320.7,846.93 1331.2,853.25 1341.7,855.08 1345.2,854.92 1354,853.9 1362.8,850.29 1366.3,848.64 1378.6,841.26 1380.3,840.73 1389.1,838.51 1397.9,835.66 1403.1,834.12 1415.4,831.16 1424.2,826.35 1425.9,824.74 1434.7,815.77 1438.2,812.52 1443.5,807.5 1450.5,801.68 1454,799 1461,793.68 1464.5,791.11 1471.5,785.11 1473.3,783.26 1480.3,773.57 1485.6,765.06 1492.6,760.93 1501,758.84" stroke="rgb(164,154,221)" stroke-width="1.08" fill="none" stroke-linejoin="round"/>
<polyline points="5,795.52 25,793.56 50,792.22 55,791.8 66.6,788.85 81.6,785.77 91.6,785.77 100,787.68 113.3,786.12 120,787.21 126.6,792.32 136.6,798.47 150,802.27 158.2,807.92 166.6,816.49 176.6,825.37 191.5,832.58 208.2,836.26 224.9,835.11 240,832.03 250.4,828.69 266,819.19 283.3,810.59 297.2,804.8 309.3,796.36 326.6,788.82 338.7,784.87 349.1,784.47 357.8,790.26 368.2,797.76 378.6,800.21 387.2,798.08 399.4,792.16 409.8,787.34 421.9,786.72 434,788.69 439.2,787.08 444.4,783.71 456.5,777.85 468.7,773.4 482.5,772.84 490,771 496.9,767.74 505.6,768.72 512.5,767.85 516,768.77 521.2,770.74 524.6,772.72 528.1,775.01 536.8,782.42 550.6,783.49 566.2,785.81 576.6,784.09 590.5,779.95 602.6,781.93 618.2,782.77 632,784.72 642.4,788.22 651.1,791 663.2,789.21 680.5,789.04 691.8,795.55 699.6,793.12 708.3,787.42 718.6,783.71 729,781.85 739.4,778.61 749.8,778.09 762.5,777.81 783.3,779.09 805.8,780.81 816.2,785.61 826.6,790.86 843.9,796.71 861.3,799.55 871.6,800.08 885.5,795.91 895.9,799.06 908.9,799.45 920.2,793.38 930.5,784.37 939.2,779.67 947.9,779.31 956.5,770.81 965.2,764.49 979,762.8 991.2,758.02 1000.4,754.49 1010.8,750.7 1019.4,751.88 1031.6,756.47 1045.4,757.47 1057.6,757.37 1067.9,763.15 1080.1,768.7 1095.7,768.42 1109.5,772.55 1121.6,773.5 1135.5,777.14 1151.1,778.14 1163.2,780.21 1173.6,781.61 1185.7,780.48 1197.9,779.25 1211.7,780.48 1223.8,783.13 1236,786.63 1240,789.45 1244.6,793.13 1250.5,797.52 1261,801.61 1275.1,804.16 1285.6,810.85 1297.9,821.5 1310.2,833.99 1320.7,845.07 1331.2,851.12 1341.7,852.76 1345.2,852.6 1354,851.46 1362.8,847.94 1366.3,846.29 1378.6,839.03 1380.3,838.48 1389.1,836.24 1397.9,833.42 1403.1,831.93 1415.4,829.02 1424.2,824.36 1425.9,822.83 1434.7,814.18 1438.2,811.02 1443.5,806.14 1450.5,800.45 1454,797.86 1461,792.74 1464.5,790.28 1471.5,784.56 1473.3,782.74 1480.3,773.33 1485.6,765.06 1492.6,761.07 1501,759.11" stroke="rgb(185,151,217)" stroke-width="1.08" fill="none" stroke-linejoin="round"/>
<polyline points="5,795.18 25,793.26 50,791.96 55,791.53 66.6,788.72 81.6,785.69 91.6,785.69 100,787.64 113.3,786.09 120,787.17 126.6,792.13 136.6,798.15 150,801.83 158.2,807.29 166.6,815.64 176.6,824.23 191.5,831.03 208.2,834.47 224.9,833.16 240,830.03 250.4,826.57 266,817.32 283.3,809.11 297.2,803.52 309.3,795.38 326.6,788.28 338.7,784.45 349.1,784.06 357.8,789.79 368.2,797.21 378.6,799.59 387.2,797.57 399.4,791.74 409.8,787.09 421.9,786.48 434,788.47 439.2,786.97 444.4,783.79 456.5,778.01 468.7,773.7 482.5,773.22 490,771.46 496.9,768.28 505.6,769.31 512.5,768.56 516,769.42 521.2,771.39 524.6,773.31 528.1,775.58 536.8,782.78 550.6,783.81 566.2,786.09 576.6,784.34 590.5,780.31 602.6,782.22 618.2,783.07 632,784.94 642.4,788.36 651.1,791.08 663.2,789.28 680.5,789.08 691.8,795.58 699.6,793.15 708.3,787.45 718.6,783.79 729,781.94 739.4,778.89 749.8,778.4 762.5,778.08 783.3,779.42 805.8,781.1 816.2,785.77 826.6,790.86 843.9,796.63 861.3,799.3 871.6,799.79 885.5,795.72 895.9,798.75 908.9,799.07 920.2,793.17 930.5,784.37 939.2,779.68 947.9,779.39 956.5,771.06 965.2,764.99 979,763.52 991.2,758.98 1000.4,755.63 1010.8,751.96 1019.4,753.17 1031.6,757.72 1045.4,758.77 1057.6,758.75 1067.9,764.38 1080.1,769.8 1095.7,769.48 1109.5,773.51 1121.6,774.47 1135.5,777.94 1151.1,778.86 1163.2,780.83 1173.6,782.13 1185.7,781.01 1197.9,779.78 1211.7,781.01 1223.8,783.53 1236,786.88 1240,789.6 1244.6,793.14 1250.5,797.44 1261,801.42 1275.1,803.86 1285.6,810.34 1297.9,820.65 1310.2,832.57 1320.7,843.13 1331.2,848.88 1341.7,850.33 1345.2,850.17 1354,848.92 1362.8,845.48 1366.3,843.84 1378.6,836.7 1380.3,836.13 1389.1,833.88 1397.9,831.09 1403.1,829.64 1415.4,826.78 1424.2,822.28 1425.9,820.83 1434.7,812.51 1438.2,809.46 1443.5,804.72 1450.5,799.16 1454,796.68 1461,791.75 1464.5,789.41 1471.5,783.99 1473.3,782.19 1480.3,773.08 1485.6,765.06 1492.6,761.21 1501,759.38" stroke="rgb(205,148,214)" stroke-width="1.08" fill="none" stroke-linejoin="round"/>
<polyline points="5,794.83 25,792.94 50,791.69 55,791.25 66.6,788.58 81.6,785.61 91.6,785.61 100,787.61 113.3,786.06 120,787.14 126.6,791.92 136.6,797.81 150,801.36 158.2,806.63 166.6,814.75 176.6,823.04 191.5,829.42 208.2,832.59 224.9,831.11 240,827.95 250.4,824.35 266,815.37 283.3,807.56 297.2,802.2 309.3,794.37 326.6,787.71 338.7,784.01 349.1,783.63 357.8,789.31 368.2,796.64 378.6,798.95 387.2,797.04 399.4,791.3 409.8,786.84 421.9,786.23 434,788.24 439.2,786.86 444.4,783.87 456.5,778.18 468.7,774.01 482.5,773.61 490,771.94 496.9,768.83 505.6,769.93 512.5,769.29 516,770.1 521.2,772.07 524.6,773.93 528.1,776.17 536.8,783.15 550.6,784.15 566.2,786.37 576.6,784.6 590.5,780.68 602.6,782.53 618.2,783.37 632,785.17 642.4,788.52 651.1,791.16 663.2,789.34 680.5,789.12 691.8,795.62 699.6,793.19 708.3,787.49 718.6,783.87 729,782.04 739.4,779.17 749.8,778.73 762.5,778.37 783.3,779.75 805.8,781.4 816.2,785.94 826.6,790.86 843.9,796.55 861.3,799.05 871.6,799.48 885.5,795.52 895.9,798.42 908.9,798.68 920.2,792.95 930.5,784.37 939.2,779.69 947.9,779.47 956.5,771.32 965.2,765.52 979,764.27 991.2,759.97 1000.4,756.82 1010.8,753.27 1019.4,754.52 1031.6,759.02 1045.4,760.12 1057.6,760.19 1067.9,765.67 1080.1,770.95 1095.7,770.59 1109.5,774.51 1121.6,775.49 1135.5,778.78 1151.1,779.61 1163.2,781.47 1173.6,782.67 1185.7,781.55 1197.9,780.33 1211.7,781.55 1223.8,783.94 1236,787.13 1240,789.76 1244.6,793.15 1250.5,797.35 1261,801.22 1275.1,803.55 1285.6,809.81 1297.9,819.75 1310.2,831.09 1320.7,841.11 1331.2,846.55 1341.7,847.81 1345.2,847.64 1354,846.27 1362.8,842.93 1366.3,841.28 1378.6,834.27 1380.3,833.68 1389.1,831.41 1397.9,828.65 1403.1,827.25 1415.4,824.44 1424.2,820.11 1425.9,818.75 1434.7,810.77 1438.2,807.83 1443.5,803.25 1450.5,797.82 1454,795.44 1461,790.72 1464.5,788.5 1471.5,783.39 1473.3,781.62 1480.3,772.82 1485.6,765.06 1492.6,761.36 1501,759.67" stroke="rgb(209,159,190)" stroke-width="1.08" fill="none" stroke-linejoin="round"/>
<polyline points="5,794.46 25,792.62 50,791.41 55,790.95 66.6,788.43 81.6,785.53 91.6,785.53 100,787.57 113.3,786.03 120,787.1 126.6,791.71 136.6,797.46 150,800.88 158.2,805.94 166.6,813.83 176.6,821.8 191.5,827.73 208.2,830.64 224.9,828.99 240,825.78 250.4,822.04 266,813.34 283.3,805.95 297.2,800.81 309.3,793.31 326.6,787.11 338.7,783.56 349.1,783.19 357.8,788.81 368.2,796.04 378.6,798.29 387.2,796.49 399.4,790.85 409.8,786.58 421.9,785.98 434,788 439.2,786.75 444.4,783.95 456.5,778.36 468.7,774.34 482.5,774.02 490,772.44 496.9,769.41 505.6,770.57 512.5,770.06 516,770.8 521.2,772.77 524.6,774.58 528.1,776.78 536.8,783.54 550.6,784.5 566.2,786.66 576.6,784.87 590.5,781.06 602.6,782.84 618.2,783.68 632,785.41 642.4,788.68 651.1,791.25 663.2,789.41 680.5,789.16 691.8,795.66 699.6,793.23 708.3,787.52 718.6,783.95 729,782.14 739.4,779.46 749.8,779.07 762.5,778.67 783.3,780.11 805.8,781.72 816.2,786.12 826.6,790.86 843.9,796.47 861.3,798.78 871.6,799.17 885.5,795.31 895.9,798.08 908.9,798.26 920.2,792.73 930.5,784.37 939.2,779.7 947.9,779.56 956.5,771.59 965.2,766.07 979,765.05 991.2,761.01 1000.4,758.06 1010.8,754.63 1019.4,755.92 1031.6,760.38 1045.4,761.53 1057.6,761.68 1067.9,767 1080.1,772.15 1095.7,771.75 1109.5,775.55 1121.6,776.55 1135.5,779.65 1151.1,780.39 1163.2,782.14 1173.6,783.24 1185.7,782.12 1197.9,780.91 1211.7,782.12 1223.8,784.36 1236,787.39 1240,789.92 1244.6,793.16 1250.5,797.26 1261,801.01 1275.1,803.23 1285.6,809.25 1297.9,818.83 1310.2,829.56 1320.7,839.01 1331.2,844.13 1341.7,845.17 1345.2,845 1354,843.51 1362.8,840.26 1366.3,838.61 1378.6,831.74 1380.3,831.12 1389.1,828.84 1397.9,826.12 1403.1,824.76 1415.4,822.01 1424.2,817.85 1425.9,816.59 1434.7,808.96 1438.2,806.14 1443.5,801.71 1450.5,796.43 1454,794.16 1461,789.66 1464.5,787.56 1471.5,782.77 1473.3,781.03 1480.3,772.55 1485.6,765.06 1492.6,761.51 1501,759.97" stroke="rgb(212,168,166)" stroke-width="1.08" fill="none" stroke-linejoin="round"/>
<polyline points="5,794.08 25,792.28 50,791.12 55,790.65 66.6,788.28 81.6,785.44 91.6,785.44 100,787.53 113.3,786 120,787.06 126.6,791.49 136.6,797.1 150,800.38 158.2,805.22 166.6,812.87 176.6,820.51 191.5,825.98 208.2,828.62 224.9,826.78 240,823.53 250.4,819.65 266,811.23 283.3,804.27 297.2,799.37 309.3,792.21 326.6,786.5 338.7,783.09 349.1,782.73 357.8,788.29 368.2,795.42 378.6,797.59 387.2,795.92 399.4,790.38 409.8,786.31 421.9,785.71 434,787.75 439.2,786.63 444.4,784.04 456.5,778.54 468.7,774.68 482.5,774.45 490,772.97 496.9,770.01 505.6,771.24 512.5,770.85 516,771.54 521.2,773.5 524.6,775.24 528.1,777.42 536.8,783.95 550.6,784.87 566.2,786.97 576.6,785.15 590.5,781.46 602.6,783.17 618.2,784.01 632,785.66 642.4,788.84 651.1,791.34 663.2,789.49 680.5,789.21 691.8,795.7 699.6,793.27 708.3,787.56 718.6,784.04 729,782.25 739.4,779.77 749.8,779.43 762.5,778.98 783.3,780.47 805.8,782.05 816.2,786.3 826.6,790.86 843.9,796.38 861.3,798.5 871.6,798.84 885.5,795.09 895.9,797.72 908.9,797.84 920.2,792.5 930.5,784.37 939.2,779.71 947.9,779.65 956.5,771.88 965.2,766.64 979,765.86 991.2,762.09 1000.4,759.34 1010.8,756.05 1019.4,757.37 1031.6,761.79 1045.4,763 1057.6,763.24 1067.9,768.39 1080.1,773.39 1095.7,772.94 1109.5,776.64 1121.6,777.64 1135.5,780.55 1151.1,781.2 1163.2,782.83 1173.6,783.83 1185.7,782.7 1197.9,781.51 1211.7,782.7 1223.8,784.81 1236,787.66 1240,790.09 1244.6,793.17 1250.5,797.16 1261,800.8 1275.1,802.9 1285.6,808.67 1297.9,817.86 1310.2,827.96 1320.7,836.82 1331.2,841.61 1341.7,842.44 1345.2,842.26 1354,840.65 1362.8,837.49 1366.3,835.85 1378.6,829.11 1380.3,828.47 1389.1,826.17 1397.9,823.49 1403.1,822.18 1415.4,819.48 1424.2,815.51 1425.9,814.34 1434.7,807.08 1438.2,804.38 1443.5,800.12 1450.5,794.97 1454,792.82 1461,788.55 1464.5,786.57 1471.5,782.12 1473.3,780.41 1480.3,772.27 1485.6,765.06 1492.6,761.67 1501,760.28" stroke="rgb(215,178,142)" stroke-width="1.08" fill="none" stroke-linejoin="round"/>
<polyline points="5,793.68 25,791.93 50,790.81 55,790.33 66.6,788.13 81.6,785.35 91.6,785.35 100,787.49 113.3,785.96 120,787.02 126.6,791.26 136.6,796.73 150,799.87 158.2,804.48 166.6,811.87 176.6,819.18 191.5,824.17 208.2,826.52 224.9,824.48 240,821.19 250.4,817.16 266,809.04 283.3,802.53 297.2,797.88 309.3,791.07 326.6,785.86 338.7,782.6 349.1,782.25 357.8,787.75 368.2,794.77 378.6,796.87 387.2,795.33 399.4,789.89 409.8,786.03 421.9,785.43 434,787.49 439.2,786.5 444.4,784.14 456.5,778.73 468.7,775.03 482.5,774.89 490,773.51 496.9,770.63 505.6,771.93 512.5,771.68 516,772.3 521.2,774.27 524.6,775.94 528.1,778.09 536.8,784.37 550.6,785.25 566.2,787.28 576.6,785.45 590.5,781.88 602.6,783.51 618.2,784.35 632,785.92 642.4,789.02 651.1,791.43 663.2,789.56 680.5,789.25 691.8,795.74 699.6,793.31 708.3,787.6 718.6,784.14 729,782.36 739.4,780.08 749.8,779.8 762.5,779.3 783.3,780.85 805.8,782.39 816.2,786.49 826.6,790.86 843.9,796.28 861.3,798.21 871.6,798.5 885.5,794.87 895.9,797.35 908.9,797.39 920.2,792.25 930.5,784.37 939.2,779.72 947.9,779.74 956.5,772.17 965.2,767.24 979,766.7 991.2,763.21 1000.4,760.68 1010.8,757.52 1019.4,758.88 1031.6,763.25 1045.4,764.52 1057.6,764.85 1067.9,769.83 1080.1,774.68 1095.7,774.19 1109.5,777.76 1121.6,778.79 1135.5,781.49 1151.1,782.04 1163.2,783.55 1173.6,784.44 1185.7,783.32 1197.9,782.13 1211.7,783.32 1223.8,785.27 1236,787.94 1240,790.27 1244.6,793.18 1250.5,797.06 1261,800.57 1275.1,802.55 1285.6,808.07 1297.9,816.86 1310.2,826.3 1320.7,834.55 1331.2,838.99 1341.7,839.6 1345.2,839.41 1354,837.67 1362.8,834.62 1366.3,832.97 1378.6,826.39 1380.3,825.72 1389.1,823.4 1397.9,820.75 1403.1,819.5 1415.4,816.86 1424.2,813.08 1425.9,812 1434.7,805.13 1438.2,802.55 1443.5,798.46 1450.5,793.47 1454,791.44 1461,787.39 1464.5,785.56 1471.5,781.45 1473.3,779.77 1480.3,771.97 1485.6,765.06 1492.6,761.84 1501,760.6" stroke="rgb(219,187,119)" stroke-width="1.08" fill="none" stroke-linejoin="round"/>
<polyline points="5,793.27 25,791.56 50,790.5 55,790 66.6,787.97 81.6,785.25 91.6,785.25 100,787.45 113.3,785.92 120,786.98 126.6,791.02 136.6,796.34 150,799.33 158.2,803.71 166.6,810.84 176.6,817.79 191.5,822.29 208.2,824.34 224.9,822.11 240,818.76 250.4,814.58 266,806.77 283.3,800.72 297.2,796.33 309.3,789.89 326.6,785.19 338.7,782.09 349.1,781.76 357.8,787.18 368.2,794.1 378.6,796.12 387.2,794.71 399.4,789.38 409.8,785.73 421.9,785.15 434,787.22 439.2,786.37 444.4,784.23 456.5,778.93 468.7,775.39 482.5,775.35 490,774.07 496.9,771.27 505.6,772.65 512.5,772.54 516,773.08 521.2,775.06 524.6,776.66 528.1,778.77 536.8,784.81 550.6,785.64 566.2,787.61 576.6,785.75 590.5,782.31 602.6,783.86 618.2,784.7 632,786.19 642.4,789.2 651.1,791.52 663.2,789.64 680.5,789.3 691.8,795.78 699.6,793.35 708.3,787.64 718.6,784.23 729,782.47 739.4,780.41 749.8,780.18 762.5,779.64 783.3,781.25 805.8,782.74 816.2,786.69 826.6,790.86 843.9,796.19 861.3,797.91 871.6,798.15 885.5,794.64 895.9,796.97 908.9,796.93 920.2,792 930.5,784.37 939.2,779.73 947.9,779.84 956.5,772.48 965.2,767.85 979,767.57 991.2,764.36 1000.4,762.07 1010.8,759.04 1019.4,760.45 1031.6,764.77 1045.4,766.1 1057.6,766.52 1067.9,771.32 1080.1,776.02 1095.7,775.48 1109.5,778.92 1121.6,779.97 1135.5,782.47 1151.1,782.91 1163.2,784.3 1173.6,785.07 1185.7,783.95 1197.9,782.77 1211.7,783.95 1223.8,785.75 1236,788.24 1240,790.45 1244.6,793.2 1250.5,796.96 1261,800.34 1275.1,802.2 1285.6,807.45 1297.9,815.82 1310.2,824.58 1320.7,832.19 1331.2,836.28 1341.7,836.66 1345.2,836.47 1354,834.58 1362.8,831.64 1366.3,830 1378.6,823.56 1380.3,822.87 1389.1,820.52 1397.9,817.92 1403.1,816.72 1415.4,814.15 1424.2,810.55 1425.9,809.58 1434.7,803.1 1438.2,800.65 1443.5,796.74 1450.5,791.91 1454,790 1461,786.2 1464.5,784.5 1471.5,780.76 1473.3,779.11 1480.3,771.67 1485.6,765.06 1492.6,762.01 1501,760.94" stroke="rgb(223,198,95)" stroke-width="1.08" fill="none" stroke-linejoin="round"/>
<polyline points="5,792.84 25,791.18 50,790.18 55,789.66 66.6,787.8 81.6,785.15 91.6,785.15 100,787.4 113.3,785.89 120,786.94 126.6,790.77 136.6,795.94 150,798.77 158.2,802.91 166.6,809.77 176.6,816.36 191.5,820.34 208.2,822.08 224.9,819.65 240,816.25 250.4,811.91 266,804.42 283.3,798.86 297.2,794.73 309.3,788.66 326.6,784.51 338.7,781.56 349.1,781.24 357.8,786.6 368.2,793.41 378.6,795.35 387.2,794.07 399.4,788.86 409.8,785.43 421.9,784.85 434,786.94 439.2,786.24 444.4,784.33 456.5,779.13 468.7,775.77 482.5,775.83 490,774.65 496.9,771.94 505.6,773.39 512.5,773.42 516,773.9 521.2,775.87 524.6,777.4 528.1,779.49 536.8,785.26 550.6,786.05 566.2,787.95 576.6,786.07 590.5,782.75 602.6,784.23 618.2,785.07 632,786.47 642.4,789.38 651.1,791.62 663.2,789.72 680.5,789.35 691.8,795.82 699.6,793.39 708.3,787.69 718.6,784.33 729,782.59 739.4,780.75 749.8,780.57 762.5,779.98 783.3,781.66 805.8,783.1 816.2,786.89 826.6,790.86 843.9,796.09 861.3,797.61 871.6,797.78 885.5,794.4 895.9,796.57 908.9,796.46 920.2,791.74 930.5,784.37 939.2,779.75 947.9,779.94 956.5,772.79 965.2,768.49 979,768.48 991.2,765.56 1000.4,763.5 1010.8,760.61 1019.4,762.07 1031.6,766.34 1045.4,767.73 1057.6,768.25 1067.9,772.87 1080.1,777.4 1095.7,776.81 1109.5,780.13 1121.6,781.19 1135.5,783.47 1151.1,783.81 1163.2,785.07 1173.6,785.73 1185.7,784.6 1197.9,783.44 1211.7,784.6 1223.8,786.24 1236,788.54 1240,790.64 1244.6,793.21 1250.5,796.86 1261,800.1 1275.1,801.82 1285.6,806.81 1297.9,814.74 1310.2,822.8 1320.7,829.76 1331.2,833.47 1341.7,833.61 1345.2,833.41 1354,831.39 1362.8,828.56 1366.3,826.91 1378.6,820.63 1380.3,819.92 1389.1,817.55 1397.9,814.99 1403.1,813.84 1415.4,811.33 1424.2,807.94 1425.9,807.08 1434.7,801.01 1438.2,798.69 1443.5,794.96 1450.5,790.29 1454,788.51 1461,784.96 1464.5,783.41 1471.5,780.04 1473.3,778.42 1480.3,771.35 1485.6,765.06 1492.6,762.19 1501,761.28" stroke="rgb(226,207,71)" stroke-width="1.08" fill="none" stroke-linejoin="round"/>
<polyline points="5,792.4 25,790.79 50,789.84 55,789.31 66.6,787.63 81.6,785.05 91.6,785.05 100,787.36 113.3,785.85 120,786.89 126.6,790.51 136.6,795.52 150,798.2 158.2,802.09 166.6,808.66 176.6,814.87 191.5,818.33 208.2,819.74 224.9,817.1 240,813.66 250.4,809.14 266,801.99 283.3,796.93 297.2,793.08 309.3,787.4 326.6,783.8 338.7,781.02 349.1,780.71 357.8,786 368.2,792.69 378.6,794.55 387.2,793.42 399.4,788.31 409.8,785.12 421.9,784.54 434,786.65 439.2,786.1 444.4,784.43 456.5,779.34 468.7,776.16 482.5,776.32 490,775.25 496.9,772.63 505.6,774.15 512.5,774.34 516,774.74 521.2,776.72 524.6,778.17 528.1,780.22 536.8,785.72 550.6,786.47 566.2,788.3 576.6,786.39 590.5,783.21 602.6,784.6 618.2,785.44 632,786.75 642.4,789.57 651.1,791.73 663.2,789.8 680.5,789.4 691.8,795.87 699.6,793.44 708.3,787.73 718.6,784.43 729,782.71 739.4,781.1 749.8,780.98 762.5,780.34 783.3,782.08 805.8,783.48 816.2,787.1 826.6,790.86 843.9,795.99 861.3,797.29 871.6,797.41 885.5,794.15 895.9,796.16 908.9,795.97 920.2,791.48 930.5,784.37 939.2,779.76 947.9,780.04 956.5,773.12 965.2,769.15 979,769.41 991.2,766.8 1000.4,764.98 1010.8,762.25 1019.4,763.74 1031.6,767.96 1045.4,769.42 1057.6,770.04 1067.9,774.47 1080.1,778.84 1095.7,778.2 1109.5,781.38 1121.6,782.46 1135.5,784.52 1151.1,784.75 1163.2,785.87 1173.6,786.4 1185.7,785.28 1197.9,784.13 1211.7,785.28 1223.8,786.75 1236,788.85 1240,790.84 1244.6,793.22 1250.5,796.75 1261,799.85 1275.1,801.44 1285.6,806.14 1297.9,813.63 1310.2,820.96 1320.7,827.24 1331.2,830.57 1341.7,830.46 1345.2,830.26 1354,828.09 1362.8,825.37 1366.3,823.73 1378.6,817.6 1380.3,816.86 1389.1,814.48 1397.9,811.95 1403.1,810.86 1415.4,808.42 1424.2,805.24 1425.9,804.48 1434.7,798.84 1438.2,796.66 1443.5,793.12 1450.5,788.62 1454,786.97 1461,783.68 1464.5,782.28 1471.5,779.29 1473.3,777.71 1480.3,771.03 1485.6,765.06 1492.6,762.38 1501,761.64" stroke="rgb(229,217,47)" stroke-width="1.08" fill="none" stroke-linejoin="round"/>
<polyline points="5,791.94 25,790.39 50,789.49 55,788.95 66.6,787.45 81.6,784.94 91.6,784.94 100,787.31 113.3,785.81 120,786.85 126.6,790.25 136.6,795.09 150,797.6 158.2,801.23 166.6,807.52 176.6,813.34 191.5,816.25 208.2,817.33 224.9,814.47 240,810.98 250.4,806.29 266,799.48 283.3,794.93 297.2,791.37 309.3,786.09 326.6,783.07 338.7,780.46 349.1,780.16 357.8,785.38 368.2,791.96 378.6,793.73 387.2,792.74 399.4,787.75 409.8,784.79 421.9,784.23 434,786.36 439.2,785.96 444.4,784.54 456.5,779.56 468.7,776.56 482.5,776.83 490,775.87 496.9,773.35 505.6,774.95 512.5,775.28 516,775.61 521.2,777.59 524.6,778.96 528.1,780.98 536.8,786.21 550.6,786.91 566.2,788.67 576.6,786.73 590.5,783.69 602.6,784.99 618.2,785.83 632,787.05 642.4,789.77 651.1,791.83 663.2,789.89 680.5,789.45 691.8,795.91 699.6,793.48 708.3,787.78 718.6,784.54 729,782.83 739.4,781.47 749.8,781.41 762.5,780.71 783.3,782.51 805.8,783.87 816.2,787.32 826.6,790.86 843.9,795.88 861.3,796.96 871.6,797.02 885.5,793.89 895.9,795.74 908.9,795.46 920.2,791.2 930.5,784.37 939.2,779.77 947.9,780.14 956.5,773.45 965.2,769.83 979,770.38 991.2,768.08 1000.4,766.52 1010.8,763.93 1019.4,765.47 1031.6,769.64 1045.4,771.16 1057.6,771.89 1067.9,776.12 1080.1,780.32 1095.7,779.62 1109.5,782.66 1121.6,783.77 1135.5,785.59 1151.1,785.71 1163.2,786.69 1173.6,787.1 1185.7,785.98 1197.9,784.85 1211.7,785.98 1223.8,787.28 1236,789.18 1240,791.04 1244.6,793.23 1250.5,796.64 1261,799.59 1275.1,801.04 1285.6,805.46 1297.9,812.48 1310.2,819.05 1320.7,824.64 1331.2,827.57 1341.7,827.2 1345.2,827 1354,824.68 1362.8,822.08 1366.3,820.43 1378.6,814.48 1380.3,813.71 1389.1,811.3 1397.9,808.82 1403.1,807.79 1415.4,805.42 1424.2,802.45 1425.9,801.81 1434.7,796.6 1438.2,794.57 1443.5,791.22 1450.5,786.9 1454,785.38 1461,782.36 1464.5,781.11 1471.5,778.52 1473.3,776.97 1480.3,770.69 1485.6,765.06 1492.6,762.57 1501,762.01" stroke="rgb(233,226,24)" stroke-width="1.08" fill="none" stroke-linejoin="round"/>
<polyline points="5,791.47 25,789.98 50,789.13 55,788.57 66.6,787.27 81.6,784.83 91.6,784.83 100,787.27 113.3,785.77 120,786.8 126.6,789.98 136.6,794.65 150,796.99 158.2,800.36 166.6,806.34 176.6,811.76 191.5,814.1 208.2,814.85 224.9,811.76 240,808.21 250.4,803.35 266,796.9 283.3,792.88 297.2,789.6 309.3,784.74 326.6,782.31 338.7,779.88 349.1,779.6 357.8,784.74 368.2,791.19 378.6,792.88 387.2,792.03 399.4,787.17 409.8,784.46 421.9,783.9 434,786.05 439.2,785.82 444.4,784.65 456.5,779.79 468.7,776.98 482.5,777.35 490,776.51 496.9,774.08 505.6,775.76 512.5,776.26 516,776.51 521.2,778.49 524.6,779.79 528.1,781.77 536.8,786.7 550.6,787.36 566.2,789.04 576.6,787.08 590.5,784.18 602.6,785.4 618.2,786.24 632,787.36 642.4,789.98 651.1,791.94 663.2,789.98 680.5,789.51 691.8,795.96 699.6,793.53 708.3,787.83 718.6,784.65 729,782.96 739.4,781.84 749.8,781.84 762.5,781.09 783.3,782.96 805.8,784.27 816.2,787.55 826.6,790.86 843.9,795.77 861.3,796.62 871.6,796.62 885.5,793.62 895.9,795.31 908.9,794.93 920.2,790.91 930.5,784.37 939.2,779.79 947.9,780.25 956.5,773.8 965.2,770.53 979,771.37 991.2,769.41 1000.4,768.1 1010.8,765.67 1019.4,767.26 1031.6,771.37 1045.4,772.96 1057.6,773.8 1067.9,777.82 1080.1,781.84 1095.7,781.09 1109.5,783.99 1121.6,785.11 1135.5,786.7 1151.1,786.7 1163.2,787.55 1173.6,787.83 1185.7,786.7 1197.9,785.58 1211.7,786.7 1223.8,787.83 1236,789.51 1240,791.25 1244.6,793.25 1250.5,796.52 1261,799.33 1275.1,800.64 1285.6,804.75 1297.9,811.29 1310.2,817.09 1320.7,821.95 1331.2,824.48 1341.7,823.85 1345.2,823.64 1354,821.16 1362.8,818.68 1366.3,817.04 1378.6,811.25 1380.3,810.45 1389.1,808.02 1397.9,805.59 1403.1,804.62 1415.4,802.32 1424.2,799.58 1425.9,799.05 1434.7,794.3 1438.2,792.41 1443.5,789.26 1450.5,785.11 1454,783.74 1461,781 1464.5,779.91 1471.5,777.73 1473.3,776.22 1480.3,770.34 1485.6,765.06 1492.6,762.77 1501,762.39" stroke="rgb(237,237,0)" stroke-width="1.08" fill="none" stroke-linejoin="round"/>
</g>
<path d="M8,6.4 H14.8 L11.4,10.2 Z" fill="#fff"/>
<text x="19.6" y="11" font-size="9.7" fill="#f4f4f4" textLength="52.6" lengthAdjust="spacingAndGlyphs"  xml:space="preserve">GBPUSD,H1</text>
<text x="78.2" y="11" font-size="9.7" fill="#f4f4f4" textLength="136.8" lengthAdjust="spacingAndGlyphs"  xml:space="preserve">1.39072 1.39125 1.39070 1.39125</text>
<text x="8.8" y="302.3" font-size="9.7" fill="#f4f4f4" textLength="159.6" lengthAdjust="spacingAndGlyphs"  xml:space="preserve">W_MACD 0.000000 0.000750 0.000000</text>
<text x="8.8" y="449.3" font-size="9.7" fill="#f4f4f4" textLength="159.6" lengthAdjust="spacingAndGlyphs"  xml:space="preserve">W_MACD 0.001103 0.000000 0.000000</text>
<text x="8.8" y="590.3" font-size="9.7" fill="#f4f4f4" textLength="167.6" lengthAdjust="spacingAndGlyphs"  xml:space="preserve">MACD_Bundle_V2 0.0014 0.0014 0.0014</text>
<text x="8.8" y="746.4" font-size="9.7" fill="#f4f4f4" textLength="1191" lengthAdjust="spacingAndGlyphs"  xml:space="preserve">MACD_Bundle_HistDiff_V2 0.000000 0.000750 0.000000 0.000000 0.001409 0.001385 0.001360 0.001333 0.001305 0.001275 0.001243 0.001208 0.001172 0.001134 0.001094 0.001051 0.001006 0.000959 0.000908 0.000855 0.000799 0.000739 0.000676 0.000608 0.000750 0.000728 0.001103</text>
<text x="6.6" y="345.5" font-size="10" fill="#f4f4f4" textLength="105.2" lengthAdjust="spacingAndGlyphs"  xml:space="preserve">ライン  120分：ヒスト  120分</text>
<text x="6.4" y="488.4" font-size="10" fill="#f4f4f4" textLength="99.8" lengthAdjust="spacingAndGlyphs"  xml:space="preserve">ライン  60分：ヒスト  120分</text>
</g>
<g id="dialog">
<rect x="165.9" y="18.3" width="683.1" height="587.6" fill="#f0f0f0"/>
<rect x="165.9" y="18.3" width="683.1" height="29.5" fill="#fff"/>
<rect x="165.9" y="18.3" width="1.5" height="587.6" fill="#fff"/>
<rect x="165.9" y="604.6" width="683.1" height="1.3" fill="#fff"/>
<rect x="847.8" y="47.8" width="1.2" height="558.1" fill="#f6f6f6"/>
<text x="173.4" y="37" font-size="11.8" fill="#101010" textLength="234.2" lengthAdjust="spacingAndGlyphs"  xml:space="preserve">Custom Indicator - MACD_Bundle_HistDiff_V2</text>
<text x="779.8" y="37.2" font-size="13.6" fill="#101010"  xml:space="preserve">?</text>
<path d="M821.6,27.2 L831.8,37.2 M831.8,27.2 L821.6,37.2" stroke="#111" stroke-width="1.05" fill="none"/>
<rect x="173.3" y="77.5" width="670.2" height="494.6" fill="#fff" stroke="#d9d9d9" stroke-width="1"/>
<rect x="174.9" y="58.4" width="76.7" height="19" fill="#f0f0f0" stroke="#d9d9d9" stroke-width="1"/>
<text x="180.1" y="72.7" font-size="11.7" fill="#101010" textLength="66.3" lengthAdjust="spacingAndGlyphs"  xml:space="preserve">バージョン情報</text>
<rect x="251.6" y="58.4" width="46" height="19" fill="#f0f0f0" stroke="#d9d9d9" stroke-width="1"/>
<text x="258.1" y="72.7" font-size="11.7" fill="#101010" textLength="23.6" lengthAdjust="spacingAndGlyphs"  xml:space="preserve">全般</text>
<rect x="395.6" y="58.4" width="54.1" height="19" fill="#f0f0f0" stroke="#d9d9d9" stroke-width="1"/>
<text x="399.5" y="72.7" font-size="11.7" fill="#101010" textLength="45.2" lengthAdjust="spacingAndGlyphs"  xml:space="preserve">色の設定</text>
<rect x="449.7" y="58.4" width="64" height="19" fill="#f0f0f0" stroke="#d9d9d9" stroke-width="1"/>
<text x="455.9" y="72.7" font-size="11.7" fill="#101010" textLength="52" lengthAdjust="spacingAndGlyphs"  xml:space="preserve">レベル表示</text>
<rect x="513.7" y="58.4" width="55.8" height="19" fill="#f0f0f0" stroke="#d9d9d9" stroke-width="1"/>
<text x="519.1" y="72.7" font-size="11.7" fill="#101010" textLength="47.1" lengthAdjust="spacingAndGlyphs"  xml:space="preserve">表示選択</text>
<rect x="297.6" y="56" width="98" height="22.6" fill="#fff" stroke="#d9d9d9" stroke-width="1"/>
<rect x="298.1" y="77" width="97" height="2" fill="#fff"/>
<text x="305.2" y="70.8" font-size="11.7" fill="#101010" textLength="82.7" lengthAdjust="spacingAndGlyphs"  xml:space="preserve">パラメーターの入力</text>
<rect x="184.5" y="87" width="521.6" height="477" fill="#fff" stroke="#828790" stroke-width="1"/>
<rect x="444.3" y="88" width="1" height="23.7" fill="#e5e5e5"/>
<rect x="703.6" y="88" width="1" height="23.7" fill="#e5e5e5"/>
<text x="192.2" y="105.2" font-size="11.7" fill="#101010" textLength="23.6" lengthAdjust="spacingAndGlyphs"  xml:space="preserve">変数</text>
<text x="451.4" y="105.2" font-size="11.7" fill="#101010" textLength="11.7" lengthAdjust="spacingAndGlyphs"  xml:space="preserve">値</text>
<rect x="185" y="130.8" width="520.6" height="1" fill="#cdcdcd"/>
<rect x="444.3" y="111.7" width="1" height="19.5" fill="#d8d8d8"/>
<rect x="703.6" y="111.7" width="1" height="19.5" fill="#d8d8d8"/>
<g transform="translate(186.9,114) scale(0.97)">
<path d="M1.6,0.5 H11 L15.5,5 V13.6 L14.2,13 L12.6,15.6 L10.9,13.2 L9.6,14.3 L8.2,13.2 L6.8,14.3 L5.4,13.2 L4,14.3 L2.6,13.4 L0.5,14.6 V1.6 Q0.5,0.5 1.6,0.5 Z" fill="url(#gab)" stroke="#c2b04a" stroke-width="1"/>
<path d="M11,0.5 V5 H15.5 Z" fill="#f7efb0" stroke="#c2b04a" stroke-width="0.8"/>
<text x="1.6" y="10.9" font-size="10" fill="#5c540a" font-family="Liberation Sans, sans-serif" textLength="10.2" lengthAdjust="spacingAndGlyphs">ab</text>
</g>
<text x="206.8" y="125.9" font-size="11.7" fill="#101010" textLength="192.6" lengthAdjust="spacingAndGlyphs"  xml:space="preserve">=====☆☆MACD束設定☆☆=====</text>
<text x="448.2" y="125.9" font-size="11.7" fill="#101010" textLength="115" lengthAdjust="spacingAndGlyphs"  xml:space="preserve">===MACD束設定===</text>
<rect x="185" y="131.2" width="520.6" height="19.5" fill="#ebebeb"/>
<rect x="185" y="150.3" width="520.6" height="1" fill="#cdcdcd"/>
<rect x="444.3" y="131.2" width="1" height="19.5" fill="#d8d8d8"/>
<rect x="703.6" y="131.2" width="1" height="19.5" fill="#d8d8d8"/>
<g transform="translate(186.9,133.5) scale(0.97)">
<path d="M1.6,0.5 H11 L15.5,5 V13.6 L14.2,13 L12.6,15.6 L10.9,13.2 L9.6,14.3 L8.2,13.2 L6.8,14.3 L5.4,13.2 L4,14.3 L2.6,13.4 L0.5,14.6 V1.6 Q0.5,0.5 1.6,0.5 Z" fill="url(#gn)" stroke="#5b9bdc" stroke-width="1"/>
<path d="M11,0.5 V5 H15.5 Z" fill="#d4e8fa" stroke="#5b9bdc" stroke-width="0.8"/>
<text x="1.4" y="11.6" font-size="7.8" font-weight="bold" fill="#06224f" font-family="Liberation Sans, sans-serif" textLength="11" lengthAdjust="spacingAndGlyphs">123</text>
</g>
<text x="206.8" y="145.4" font-size="11.7" fill="#101010" textLength="99" lengthAdjust="spacingAndGlyphs"  xml:space="preserve">MACD本数(30以下)</text>
<text x="448.2" y="145.4" font-size="11.7" fill="#101010" textLength="12.4" lengthAdjust="spacingAndGlyphs"  xml:space="preserve">20</text>
<rect x="185" y="169.8" width="520.6" height="1" fill="#cdcdcd"/>
<rect x="444.3" y="150.7" width="1" height="19.5" fill="#d8d8d8"/>
<rect x="703.6" y="150.7" width="1" height="19.5" fill="#d8d8d8"/>
<g transform="translate(186.9,153) scale(0.97)">
<path d="M1.6,0.5 H11 L15.5,5 V13.6 L14.2,13 L12.6,15.6 L10.9,13.2 L9.6,14.3 L8.2,13.2 L6.8,14.3 L5.4,13.2 L4,14.3 L2.6,13.4 L0.5,14.6 V1.6 Q0.5,0.5 1.6,0.5 Z" fill="url(#gn)" stroke="#5b9bdc" stroke-width="1"/>
<path d="M11,0.5 V5 H15.5 Z" fill="#d4e8fa" stroke="#5b9bdc" stroke-width="0.8"/>
<text x="1.4" y="11.6" font-size="7.8" font-weight="bold" fill="#06224f" font-family="Liberation Sans, sans-serif" textLength="11" lengthAdjust="spacingAndGlyphs">123</text>
</g>
<text x="206.8" y="164.9" font-size="11.7" fill="#101010" textLength="55.9" lengthAdjust="spacingAndGlyphs"  xml:space="preserve">MACD長期</text>
<text x="448.2" y="164.9" font-size="11.7" fill="#101010" textLength="12.4" lengthAdjust="spacingAndGlyphs"  xml:space="preserve">34</text>
<rect x="185" y="170.2" width="520.6" height="19.5" fill="#ebebeb"/>
<rect x="185" y="189.3" width="520.6" height="1" fill="#cdcdcd"/>
<rect x="444.3" y="170.2" width="1" height="19.5" fill="#d8d8d8"/>
<rect x="703.6" y="170.2" width="1" height="19.5" fill="#d8d8d8"/>
<g transform="translate(186.9,172.5) scale(0.97)">
<path d="M1.6,0.5 H11 L15.5,5 V13.6 L14.2,13 L12.6,15.6 L10.9,13.2 L9.6,14.3 L8.2,13.2 L6.8,14.3 L5.4,13.2 L4,14.3 L2.6,13.4 L0.5,14.6 V1.6 Q0.5,0.5 1.6,0.5 Z" fill="url(#gn)" stroke="#5b9bdc" stroke-width="1"/>
<path d="M11,0.5 V5 H15.5 Z" fill="#d4e8fa" stroke="#5b9bdc" stroke-width="0.8"/>
<text x="1.4" y="11.6" font-size="7.8" font-weight="bold" fill="#06224f" font-family="Liberation Sans, sans-serif" textLength="11" lengthAdjust="spacingAndGlyphs">123</text>
</g>
<text x="206.8" y="184.4" font-size="11.7" fill="#101010" textLength="55.9" lengthAdjust="spacingAndGlyphs"  xml:space="preserve">MACD短期</text>
<text x="448.2" y="184.4" font-size="11.7" fill="#101010" textLength="6.7" lengthAdjust="spacingAndGlyphs"  xml:space="preserve">8</text>
<rect x="185" y="208.8" width="520.6" height="1" fill="#cdcdcd"/>
<rect x="444.3" y="189.7" width="1" height="19.5" fill="#d8d8d8"/>
<rect x="703.6" y="189.7" width="1" height="19.5" fill="#d8d8d8"/>
<g transform="translate(186.9,192) scale(0.97)">
<path d="M1.6,0.5 H11 L15.5,5 V13.6 L14.2,13 L12.6,15.6 L10.9,13.2 L9.6,14.3 L8.2,13.2 L6.8,14.3 L5.4,13.2 L4,14.3 L2.6,13.4 L0.5,14.6 V1.6 Q0.5,0.5 1.6,0.5 Z" fill="url(#gn)" stroke="#5b9bdc" stroke-width="1"/>
<path d="M11,0.5 V5 H15.5 Z" fill="#d4e8fa" stroke="#5b9bdc" stroke-width="0.8"/>
<text x="1.4" y="11.6" font-size="7.8" font-weight="bold" fill="#06224f" font-family="Liberation Sans, sans-serif" textLength="11" lengthAdjust="spacingAndGlyphs">123</text>
</g>
<text x="206.8" y="203.9" font-size="11.7" fill="#101010" textLength="75.6" lengthAdjust="spacingAndGlyphs"  xml:space="preserve">シグナルsmooth</text>
<text x="448.2" y="203.9" font-size="11.7" fill="#101010" textLength="6.7" lengthAdjust="spacingAndGlyphs"  xml:space="preserve">5</text>
<rect x="185" y="209.2" width="520.6" height="19.5" fill="#ebebeb"/>
<rect x="185" y="228.3" width="520.6" height="1" fill="#cdcdcd"/>
<rect x="444.3" y="209.2" width="1" height="19.5" fill="#d8d8d8"/>
<rect x="703.6" y="209.2" width="1" height="19.5" fill="#d8d8d8"/>
<g transform="translate(186.9,211.5) scale(0.97)">
<path d="M1.6,0.5 H11 L15.5,5 V13.6 L14.2,13 L12.6,15.6 L10.9,13.2 L9.6,14.3 L8.2,13.2 L6.8,14.3 L5.4,13.2 L4,14.3 L2.6,13.4 L0.5,14.6 V1.6 Q0.5,0.5 1.6,0.5 Z" fill="url(#gn)" stroke="#5b9bdc" stroke-width="1"/>
<path d="M11,0.5 V5 H15.5 Z" fill="#d4e8fa" stroke="#5b9bdc" stroke-width="0.8"/>
<text x="1.4" y="11.6" font-size="7.8" font-weight="bold" fill="#06224f" font-family="Liberation Sans, sans-serif" textLength="11" lengthAdjust="spacingAndGlyphs">123</text>
</g>
<text x="206.8" y="223.4" font-size="11.7" fill="#101010" textLength="222.1" lengthAdjust="spacingAndGlyphs"  xml:space="preserve">MACD長期を幾つづつ減らすか（短期は固定）</text>
<text x="448.2" y="223.4" font-size="11.7" fill="#101010" textLength="5.9" lengthAdjust="spacingAndGlyphs"  xml:space="preserve">1</text>
<rect x="185" y="247.8" width="520.6" height="1" fill="#cdcdcd"/>
<rect x="444.3" y="228.7" width="1" height="19.5" fill="#d8d8d8"/>
<rect x="703.6" y="228.7" width="1" height="19.5" fill="#d8d8d8"/>
<g transform="translate(186.9,231) scale(0.97)">
<path d="M1.6,0.5 H11 L15.5,5 V13.6 L14.2,13 L12.6,15.6 L10.9,13.2 L9.6,14.3 L8.2,13.2 L6.8,14.3 L5.4,13.2 L4,14.3 L2.6,13.4 L0.5,14.6 V1.6 Q0.5,0.5 1.6,0.5 Z" fill="#fff" stroke="#767676" stroke-width="1"/>
<path d="M11,0.5 V5 H15.5 Z" fill="#fff" stroke="#767676" stroke-width="0.8"/>
<rect x="2" y="6" width="11.4" height="5.2" fill="url(#gc)"/>
</g>
<text x="206.8" y="242.9" font-size="11.7" fill="#101010" textLength="44.7" lengthAdjust="spacingAndGlyphs"  xml:space="preserve">始点の色</text>
<rect x="448.9" y="232.8" width="11.6" height="11.6" fill="#00bfff" stroke="#9a9a9a" stroke-width="1"/>
<text x="463.9" y="242.9" font-size="11.7" fill="#101010" textLength="66.6" lengthAdjust="spacingAndGlyphs"  xml:space="preserve">DeepSkyBlue</text>
<rect x="185" y="248.2" width="520.6" height="19.5" fill="#ebebeb"/>
<rect x="185" y="267.3" width="520.6" height="1" fill="#cdcdcd"/>
<rect x="444.3" y="248.2" width="1" height="19.5" fill="#d8d8d8"/>
<rect x="703.6" y="248.2" width="1" height="19.5" fill="#d8d8d8"/>
<g transform="translate(186.9,250.5) scale(0.97)">
<path d="M1.6,0.5 H11 L15.5,5 V13.6 L14.2,13 L12.6,15.6 L10.9,13.2 L9.6,14.3 L8.2,13.2 L6.8,14.3 L5.4,13.2 L4,14.3 L2.6,13.4 L0.5,14.6 V1.6 Q0.5,0.5 1.6,0.5 Z" fill="#fff" stroke="#767676" stroke-width="1"/>
<path d="M11,0.5 V5 H15.5 Z" fill="#fff" stroke="#767676" stroke-width="0.8"/>
<rect x="2" y="6" width="11.4" height="5.2" fill="url(#gc)"/>
</g>
<text x="206.8" y="262.4" font-size="11.7" fill="#101010" textLength="55.9" lengthAdjust="spacingAndGlyphs"  xml:space="preserve">中間点の色</text>
<rect x="448.9" y="252.3" width="11.6" height="11.6" fill="#dda0dd" stroke="#9a9a9a" stroke-width="1"/>
<text x="463.9" y="262.4" font-size="11.7" fill="#101010" textLength="27" lengthAdjust="spacingAndGlyphs"  xml:space="preserve">Plum</text>
<rect x="185" y="286.8" width="520.6" height="1" fill="#cdcdcd"/>
<rect x="444.3" y="267.7" width="1" height="19.5" fill="#d8d8d8"/>
<rect x="703.6" y="267.7" width="1" height="19.5" fill="#d8d8d8"/>
<g transform="translate(186.9,270) scale(0.97)">
<path d="M1.6,0.5 H11 L15.5,5 V13.6 L14.2,13 L12.6,15.6 L10.9,13.2 L9.6,14.3 L8.2,13.2 L6.8,14.3 L5.4,13.2 L4,14.3 L2.6,13.4 L0.5,14.6 V1.6 Q0.5,0.5 1.6,0.5 Z" fill="#fff" stroke="#767676" stroke-width="1"/>
<path d="M11,0.5 V5 H15.5 Z" fill="#fff" stroke="#767676" stroke-width="0.8"/>
<rect x="2" y="6" width="11.4" height="5.2" fill="url(#gc)"/>
</g>
<text x="206.8" y="281.9" font-size="11.7" fill="#101010" textLength="72" lengthAdjust="spacingAndGlyphs"  xml:space="preserve">終点の色(ほぼ)</text>
<rect x="448.9" y="271.8" width="11.6" height="11.6" fill="#ffff00" stroke="#9a9a9a" stroke-width="1"/>
<text x="463.9" y="281.9" font-size="11.7" fill="#101010" textLength="33.3" lengthAdjust="spacingAndGlyphs"  xml:space="preserve">Yellow</text>
<rect x="185" y="287.2" width="520.6" height="19.5" fill="#ebebeb"/>
<rect x="185" y="306.3" width="520.6" height="1" fill="#cdcdcd"/>
<rect x="444.3" y="287.2" width="1" height="19.5" fill="#d8d8d8"/>
<rect x="703.6" y="287.2" width="1" height="19.5" fill="#d8d8d8"/>
<g transform="translate(186.9,289.5) scale(0.97)">
<path d="M1.6,0.5 H11 L15.5,5 V13.6 L14.2,13 L12.6,15.6 L10.9,13.2 L9.6,14.3 L8.2,13.2 L6.8,14.3 L5.4,13.2 L4,14.3 L2.6,13.4 L0.5,14.6 V1.6 Q0.5,0.5 1.6,0.5 Z" fill="url(#gab)" stroke="#c2b04a" stroke-width="1"/>
<path d="M11,0.5 V5 H15.5 Z" fill="#f7efb0" stroke="#c2b04a" stroke-width="0.8"/>
<text x="1.6" y="10.9" font-size="10" fill="#5c540a" font-family="Liberation Sans, sans-serif" textLength="10.2" lengthAdjust="spacingAndGlyphs">ab</text>
</g>
<text x="206.8" y="301.4" font-size="11.7" fill="#101010" textLength="14.5" lengthAdjust="spacingAndGlyphs"  xml:space="preserve">---</text>
<rect x="185" y="325.8" width="520.6" height="1" fill="#cdcdcd"/>
<rect x="444.3" y="306.7" width="1" height="19.5" fill="#d8d8d8"/>
<rect x="703.6" y="306.7" width="1" height="19.5" fill="#d8d8d8"/>
<g transform="translate(186.9,309) scale(0.97)">
<path d="M1.6,0.5 H11 L15.5,5 V13.6 L14.2,13 L12.6,15.6 L10.9,13.2 L9.6,14.3 L8.2,13.2 L6.8,14.3 L5.4,13.2 L4,14.3 L2.6,13.4 L0.5,14.6 V1.6 Q0.5,0.5 1.6,0.5 Z" fill="url(#gab)" stroke="#c2b04a" stroke-width="1"/>
<path d="M11,0.5 V5 H15.5 Z" fill="#f7efb0" stroke="#c2b04a" stroke-width="0.8"/>
<text x="1.6" y="10.9" font-size="10" fill="#5c540a" font-family="Liberation Sans, sans-serif" textLength="10.2" lengthAdjust="spacingAndGlyphs">ab</text>
</g>
<text x="206.8" y="320.9" font-size="11.7" fill="#101010" textLength="218.7" lengthAdjust="spacingAndGlyphs"  xml:space="preserve">=====☆☆ヒストグラム：MACD☆☆=====</text>
<text x="448.2" y="320.9" font-size="11.7" fill="#101010" textLength="141.3" lengthAdjust="spacingAndGlyphs"  xml:space="preserve">===ヒストグラム：MACD===</text>
<rect x="185" y="326.2" width="520.6" height="19.5" fill="#ebebeb"/>
<rect x="185" y="345.3" width="520.6" height="1" fill="#cdcdcd"/>
<rect x="444.3" y="326.2" width="1" height="19.5" fill="#d8d8d8"/>
<rect x="703.6" y="326.2" width="1" height="19.5" fill="#d8d8d8"/>
<g transform="translate(186.9,328.5) scale(0.97)">
<path d="M1.6,0.5 H11 L15.5,5 V13.6 L14.2,13 L12.6,15.6 L10.9,13.2 L9.6,14.3 L8.2,13.2 L6.8,14.3 L5.4,13.2 L4,14.3 L2.6,13.4 L0.5,14.6 V1.6 Q0.5,0.5 1.6,0.5 Z" fill="url(#gab)" stroke="#c2b04a" stroke-width="1"/>
<path d="M11,0.5 V5 H15.5 Z" fill="#f7efb0" stroke="#c2b04a" stroke-width="0.8"/>
<text x="1.6" y="10.9" font-size="10" fill="#5c540a" font-family="Liberation Sans, sans-serif" textLength="10.2" lengthAdjust="spacingAndGlyphs">ab</text>
</g>
<text x="206.8" y="340.4" font-size="11.7" fill="#101010" textLength="166.5" lengthAdjust="spacingAndGlyphs"  xml:space="preserve">------ヒストグラム使用時間足------</text>
<text x="448.2" y="340.4" font-size="11.7" fill="#101010" textLength="251.3" lengthAdjust="spacingAndGlyphs"  xml:space="preserve">☆☆1,2,3,5,10,15,30,60,120,240,480,720,日足,2日...</text>
<rect x="185" y="364.8" width="520.6" height="1" fill="#cdcdcd"/>
<rect x="444.3" y="345.7" width="1" height="19.5" fill="#d8d8d8"/>
<rect x="703.6" y="345.7" width="1" height="19.5" fill="#d8d8d8"/>
<g transform="translate(186.9,348) scale(0.97)">
<path d="M1.6,0.5 H11 L15.5,5 V13.6 L14.2,13 L12.6,15.6 L10.9,13.2 L9.6,14.3 L8.2,13.2 L6.8,14.3 L5.4,13.2 L4,14.3 L2.6,13.4 L0.5,14.6 V1.6 Q0.5,0.5 1.6,0.5 Z" fill="url(#gn)" stroke="#5b9bdc" stroke-width="1"/>
<path d="M11,0.5 V5 H15.5 Z" fill="#d4e8fa" stroke="#5b9bdc" stroke-width="0.8"/>
<text x="1.4" y="11.6" font-size="7.8" font-weight="bold" fill="#06224f" font-family="Liberation Sans, sans-serif" textLength="11" lengthAdjust="spacingAndGlyphs">123</text>
</g>
<text x="206.8" y="359.9" font-size="11.7" fill="#101010" textLength="55.9" lengthAdjust="spacingAndGlyphs"  xml:space="preserve">MACD長期</text>
<text x="448.2" y="359.9" font-size="11.7" fill="#101010" textLength="12.4" lengthAdjust="spacingAndGlyphs"  xml:space="preserve">34</text>
<rect x="185" y="365.2" width="520.6" height="19.5" fill="#ebebeb"/>
<rect x="185" y="384.3" width="520.6" height="1" fill="#cdcdcd"/>
<rect x="444.3" y="365.2" width="1" height="19.5" fill="#d8d8d8"/>
<rect x="703.6" y="365.2" width="1" height="19.5" fill="#d8d8d8"/>
<g transform="translate(186.9,367.5) scale(0.97)">
<path d="M1.6,0.5 H11 L15.5,5 V13.6 L14.2,13 L12.6,15.6 L10.9,13.2 L9.6,14.3 L8.2,13.2 L6.8,14.3 L5.4,13.2 L4,14.3 L2.6,13.4 L0.5,14.6 V1.6 Q0.5,0.5 1.6,0.5 Z" fill="url(#gn)" stroke="#5b9bdc" stroke-width="1"/>
<path d="M11,0.5 V5 H15.5 Z" fill="#d4e8fa" stroke="#5b9bdc" stroke-width="0.8"/>
<text x="1.4" y="11.6" font-size="7.8" font-weight="bold" fill="#06224f" font-family="Liberation Sans, sans-serif" textLength="11" lengthAdjust="spacingAndGlyphs">123</text>
</g>
<text x="206.8" y="379.4" font-size="11.7" fill="#101010" textLength="55.9" lengthAdjust="spacingAndGlyphs"  xml:space="preserve">MACD短期</text>
<text x="448.2" y="379.4" font-size="11.7" fill="#101010" textLength="6.7" lengthAdjust="spacingAndGlyphs"  xml:space="preserve">8</text>
<rect x="185" y="403.8" width="520.6" height="1" fill="#cdcdcd"/>
<rect x="444.3" y="384.7" width="1" height="19.5" fill="#d8d8d8"/>
<rect x="703.6" y="384.7" width="1" height="19.5" fill="#d8d8d8"/>
<g transform="translate(186.9,387) scale(0.97)">
<path d="M1.6,0.5 H11 L15.5,5 V13.6 L14.2,13 L12.6,15.6 L10.9,13.2 L9.6,14.3 L8.2,13.2 L6.8,14.3 L5.4,13.2 L4,14.3 L2.6,13.4 L0.5,14.6 V1.6 Q0.5,0.5 1.6,0.5 Z" fill="url(#gn)" stroke="#5b9bdc" stroke-width="1"/>
<path d="M11,0.5 V5 H15.5 Z" fill="#d4e8fa" stroke="#5b9bdc" stroke-width="0.8"/>
<text x="1.4" y="11.6" font-size="7.8" font-weight="bold" fill="#06224f" font-family="Liberation Sans, sans-serif" textLength="11" lengthAdjust="spacingAndGlyphs">123</text>
</g>
<text x="206.8" y="398.9" font-size="11.7" fill="#101010" textLength="75.6" lengthAdjust="spacingAndGlyphs"  xml:space="preserve">シグナルsmooth</text>
<text x="448.2" y="398.9" font-size="11.7" fill="#101010" textLength="6.7" lengthAdjust="spacingAndGlyphs"  xml:space="preserve">5</text>
<rect x="185" y="404.2" width="520.6" height="19.5" fill="#ebebeb"/>
<rect x="185" y="423.3" width="520.6" height="1" fill="#cdcdcd"/>
<rect x="444.3" y="404.2" width="1" height="19.5" fill="#d8d8d8"/>
<rect x="703.6" y="404.2" width="1" height="19.5" fill="#d8d8d8"/>
<g transform="translate(186.9,406.5) scale(0.97)">
<path d="M1.6,0.5 H11 L15.5,5 V13.6 L14.2,13 L12.6,15.6 L10.9,13.2 L9.6,14.3 L8.2,13.2 L6.8,14.3 L5.4,13.2 L4,14.3 L2.6,13.4 L0.5,14.6 V1.6 Q0.5,0.5 1.6,0.5 Z" fill="url(#gn)" stroke="#5b9bdc" stroke-width="1"/>
<path d="M11,0.5 V5 H15.5 Z" fill="#d4e8fa" stroke="#5b9bdc" stroke-width="0.8"/>
<text x="1.4" y="11.6" font-size="7.8" font-weight="bold" fill="#06224f" font-family="Liberation Sans, sans-serif" textLength="11" lengthAdjust="spacingAndGlyphs">123</text>
</g>
<text x="206.8" y="418.4" font-size="11.7" fill="#101010" textLength="58.7" lengthAdjust="spacingAndGlyphs"  xml:space="preserve">設定時間足</text>
<text x="448.2" y="418.4" font-size="11.7" fill="#101010" textLength="77" lengthAdjust="spacingAndGlyphs"  xml:space="preserve">一つ上の時間足</text>
<rect x="185" y="442.8" width="520.6" height="1" fill="#cdcdcd"/>
<rect x="444.3" y="423.7" width="1" height="19.5" fill="#d8d8d8"/>
<rect x="703.6" y="423.7" width="1" height="19.5" fill="#d8d8d8"/>
<g transform="translate(186.9,426) scale(0.97)">
<path d="M1.6,0.5 H11 L15.5,5 V13.6 L14.2,13 L12.6,15.6 L10.9,13.2 L9.6,14.3 L8.2,13.2 L6.8,14.3 L5.4,13.2 L4,14.3 L2.6,13.4 L0.5,14.6 V1.6 Q0.5,0.5 1.6,0.5 Z" fill="url(#gb)" stroke="#5cc95c" stroke-width="1"/>
<path d="M11,0.5 V5 H15.5 Z" fill="#d4f7d4" stroke="#5cc95c" stroke-width="0.8"/>
<path d="M2.4,9.8 L8,5.6 M9.4,8.8 L13,9.7" stroke="#138a13" stroke-width="1.3" fill="none" stroke-linecap="round"/>
</g>
<text x="206.8" y="437.9" font-size="11.7" fill="#101010" textLength="127.2" lengthAdjust="spacingAndGlyphs"  xml:space="preserve">macdとシグナルの差を表示</text>
<text x="448.2" y="437.9" font-size="11.7" fill="#101010" textLength="21.1" lengthAdjust="spacingAndGlyphs"  xml:space="preserve">true</text>
<rect x="715.8" y="502.6" width="117.2" height="22.6" fill="#e1e1e1" stroke="#adadad" stroke-width="1"/>
<text x="743.5" y="518.3" font-size="11.7" fill="#101010" textLength="61.2" lengthAdjust="spacingAndGlyphs"  xml:space="preserve">読み込み (L)</text>
<rect x="715.8" y="538.6" width="117.2" height="22.6" fill="#e1e1e1" stroke="#adadad" stroke-width="1"/>
<text x="754.5" y="554.3" font-size="11.7" fill="#101010" textLength="39.8" lengthAdjust="spacingAndGlyphs"  xml:space="preserve">保存 (S)</text>
<rect x="573.1" y="575" width="81.7" height="21.8" fill="#e1e1e1" stroke="#0078d7" stroke-width="2"/>
<text x="606" y="590.3" font-size="11.7" fill="#101010" textLength="16" lengthAdjust="spacingAndGlyphs"  xml:space="preserve">OK</text>
<rect x="665.2" y="574.5" width="82.8" height="22.8" fill="#e1e1e1" stroke="#adadad" stroke-width="1"/>
<text x="683.5" y="590.3" font-size="11.7" fill="#101010" textLength="45.8" lengthAdjust="spacingAndGlyphs"  xml:space="preserve">キャンセル</text>
<rect x="756.6" y="574.5" width="82.6" height="22.8" fill="#e1e1e1" stroke="#adadad" stroke-width="1"/>
<text x="781.1" y="590.3" font-size="11.7" fill="#101010" textLength="34.2" lengthAdjust="spacingAndGlyphs"  xml:space="preserve">リセット</text>
<rect x="844.3" y="596.8" width="1.4" height="1.4" fill="#b4b4b4"/>
<rect x="844.3" y="599.7" width="1.4" height="1.4" fill="#b4b4b4"/>
<rect x="844.3" y="602.6" width="1.4" height="1.4" fill="#b4b4b4"/>
<rect x="841.4" y="599.7" width="1.4" height="1.4" fill="#b4b4b4"/>
<rect x="841.4" y="602.6" width="1.4" height="1.4" fill="#b4b4b4"/>
<rect x="838.7" y="602.6" width="1.4" height="1.4" fill="#b4b4b4"/>
</g>
</svg>
</body></html>
